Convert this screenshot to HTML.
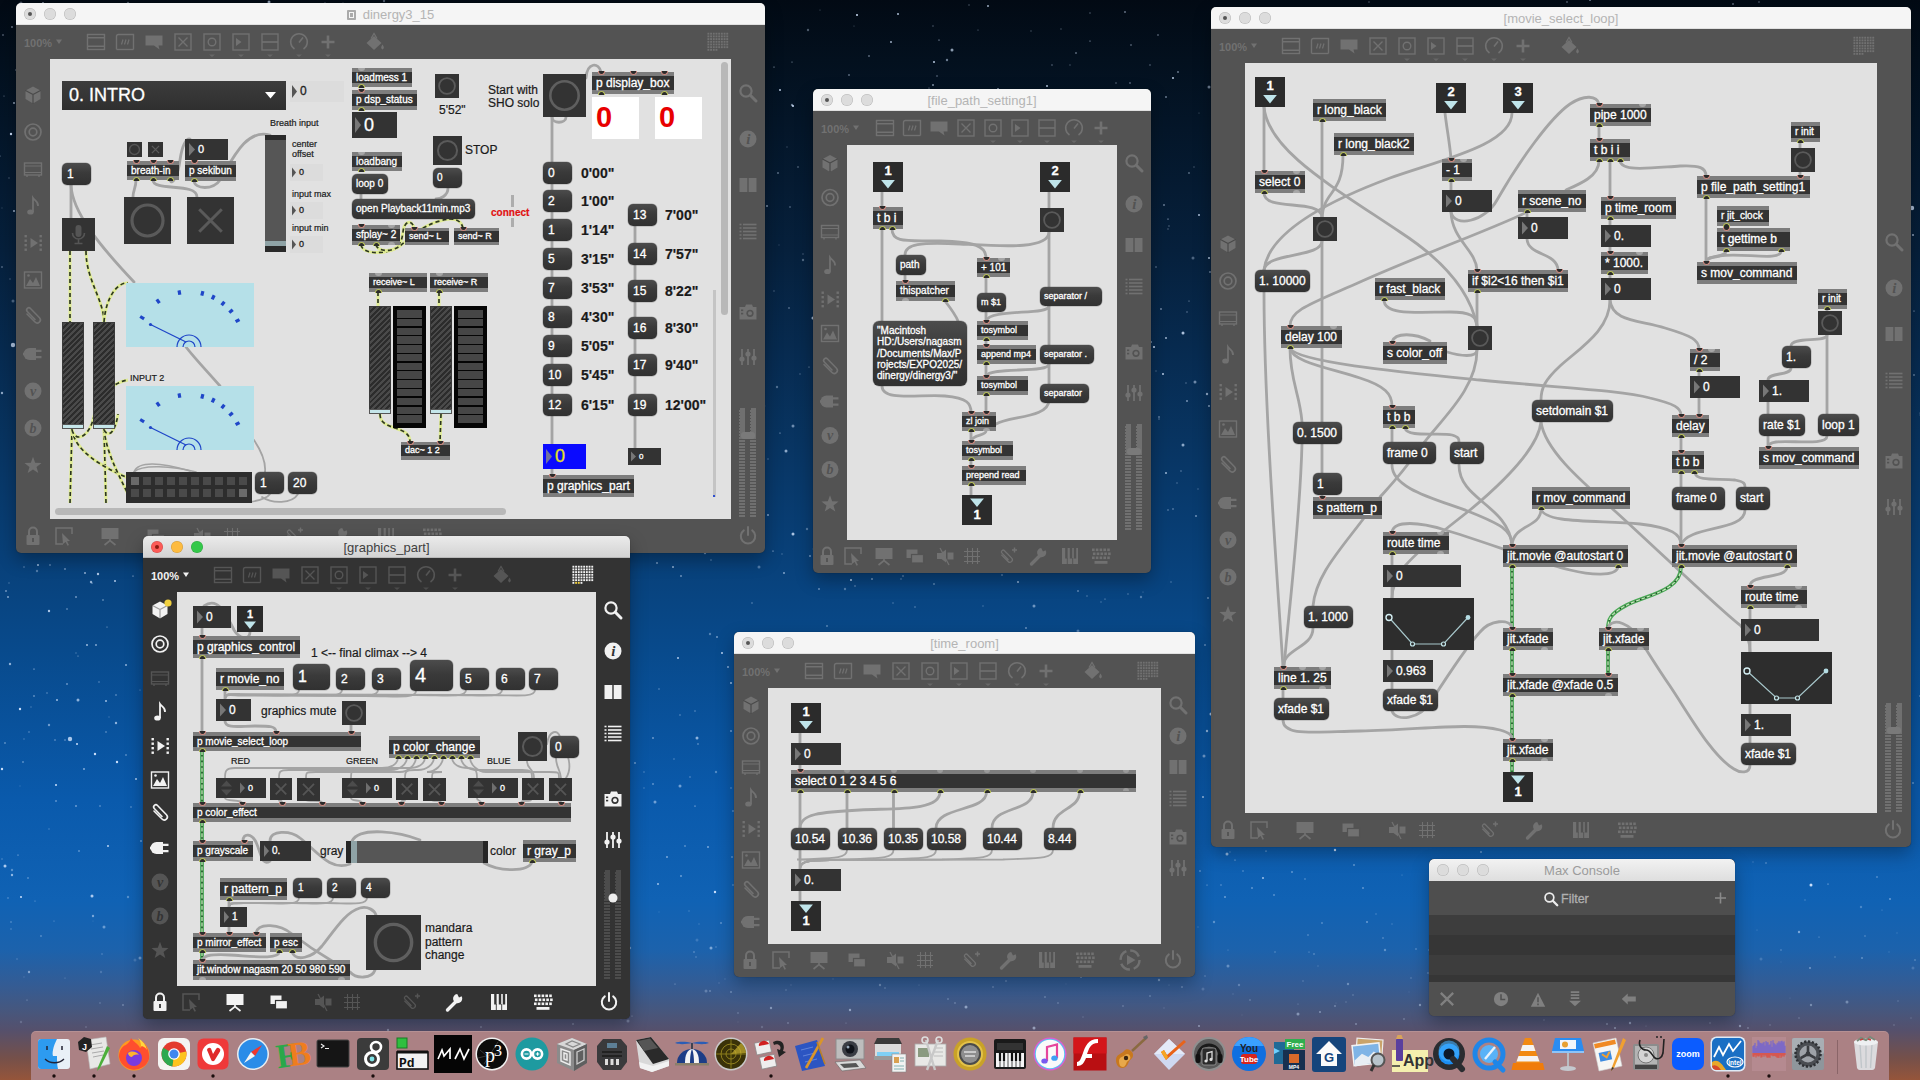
<!DOCTYPE html>
<html><head><meta charset="utf-8"><title>Max</title><style>
*{box-sizing:border-box;margin:0;padding:0}
html,body{width:1920px;height:1080px;overflow:hidden;background:#0a2a55}
body{font-family:"Liberation Sans",sans-serif;position:relative}
#bg{position:absolute;left:0;top:0;width:1920px;height:1080px;
 background:linear-gradient(180deg,#020a14 0px,#03101e 60px,#06203c 250px,#083563 450px,#084a8c 650px,#0a5aac 800px,#1062b4 900px,#1c62ac 950px,#345c94 985px,#46577e 1010px,#55506c 1030px,#75504a 1058px,#96553a 1080px)}
div{position:absolute}
.ov{position:absolute;left:0;top:0;pointer-events:none}
.win{border-radius:5px;box-shadow:0 7px 18px rgba(0,0,0,.3),0 0 1px rgba(0,0,0,.5)}
.tbar{left:0;top:0;width:100%;height:22px;border-radius:5px 5px 0 0;text-align:center;font-size:13px;line-height:23px}
.tl{width:12px;height:12px;border-radius:6px;top:5px}
.ob{background:#333;color:#fff}
.ob .tb{position:absolute;left:0;top:0;width:100%;background:#7d7d7d}
.ob .bb{position:absolute;left:0;bottom:0;width:100%;background:#7d7d7d}
.ob span,.mg span,.nb span{position:absolute;white-space:pre;color:#fff;-webkit-text-stroke-width:.3px}
.in{position:absolute;top:-1px;width:7px;height:4px;border-radius:0 0 4px 4px;background:#2b2b2b;border:1px solid #d08a80;border-top:none}
.out{position:absolute;bottom:-1px;width:7px;height:4px;border-radius:4px 4px 0 0;background:#2b2b2b;border:1px solid #b9c25a;border-bottom:none}
.gi{position:absolute;top:0;width:7px;height:3px;border-radius:0 0 4px 4px;background:#a6a6a6}
.go{position:absolute;bottom:0;width:7px;height:3px;border-radius:4px 4px 0 0;background:#a6a6a6}
.mg{background:linear-gradient(180deg,#4c4c4c 0%,#3a3a3a 45%,#313131 100%);color:#fff;box-shadow:0 0 0 .5px rgba(0,0,0,.25)}
.nb{color:#fff;overflow:hidden}
.cm{position:absolute;-webkit-text-stroke-width:.2px}
</style></head><body>
<div id="bg"></div>
<svg class="ov" width="1920" height="1080"><path d="M1205 976h.01M11 929h.01M102 954h.01M696 957h.01" stroke="#d4e6ff" stroke-opacity="0.19" stroke-width="2.0" stroke-linecap="round" fill="none"/><path d="M1052 65h.01M695 711h.01M680 715h.01M1759 2h.01M1181 471h.01M659 689h.01M736 711h.01" stroke="#d4e6ff" stroke-opacity="0.95" stroke-width="1.0" stroke-linecap="round" fill="none"/><path d="M939 40h.01M695 806h.01M92 583h.01M773 551h.01M1168 219h.01M1266 851h.01M133 576h.01M34 669h.01" stroke="#d4e6ff" stroke-opacity="0.95" stroke-width="1.2" stroke-linecap="round" fill="none"/><path d="M1141 597h.01M37 571h.01M777 387h.01M12 870h.01M716 772h.01M128 897h.01M803 260h.01M128 3h.01M808 30h.01M845 589h.01M384 1h.01M710 634h.01M807 529h.01" stroke="#d4e6ff" stroke-opacity="0.35" stroke-width="2.4" stroke-linecap="round" fill="none"/><path d="M116 723h.01M2 393h.01M1207 731h.01M91 582h.01M10 664h.01M12 875h.01M1207 394h.01" stroke="#d4e6ff" stroke-opacity="0.65" stroke-width="2.4" stroke-linecap="round" fill="none"/><path d="M1376 914h.01M1799 1018h.01M86 1027h.01" stroke="#d4e6ff" stroke-opacity="0.19" stroke-width="1.8" stroke-linecap="round" fill="none"/><path d="M1173 509h.01M3 35h.01M1920 696h.01M65 740h.01M733 811h.01M55 740h.01M1158 35h.01M1131 45h.01M2 267h.01M789 308h.01M1567 2h.01M1172 633h.01M28 878h.01M698 744h.01M116 695h.01" stroke="#d4e6ff" stroke-opacity="0.65" stroke-width="1.4" stroke-linecap="round" fill="none"/><path d="M689 911h.01M1898 1001h.01M788 976h.01M1544 1020h.01" stroke="#d4e6ff" stroke-opacity="0.28" stroke-width="1.4" stroke-linecap="round" fill="none"/><path d="M1026 628h.01M65 569h.01M1890 899h.01M1125 12h.01M67 684h.01M141 841h.01M17 490h.01M1210 272h.01" stroke="#d4e6ff" stroke-opacity="0.5" stroke-width="1.8" stroke-linecap="round" fill="none"/><path d="M104 927h.01M140 958h.01M1298 1014h.01" stroke="#d4e6ff" stroke-opacity="0.44" stroke-width="3.0" stroke-linecap="round" fill="none"/><path d="M764 406h.01M343 4h.01M98 574h.01M49 611h.01" stroke="#d4e6ff" stroke-opacity="0.8" stroke-width="2.4" stroke-linecap="round" fill="none"/><path d="M0 156h.01M929 88h.01M809 367h.01M78 656h.01M1105 599h.01M792 62h.01M1207 885h.01M1189 301h.01M107 627h.01" stroke="#d4e6ff" stroke-opacity="0.65" stroke-width="1.2" stroke-linecap="round" fill="none"/><path d="M1178 72h.01M76 806h.01M12 27h.01M1166 97h.01M6 591h.01M653 738h.01M1161 309h.01M681 576h.01" stroke="#d4e6ff" stroke-opacity="0.95" stroke-width="1.4" stroke-linecap="round" fill="none"/><path d="M722 653h.01M1163 374h.01M108 846h.01M934 62h.01M851 580h.01M1173 78h.01M780 90h.01" stroke="#d4e6ff" stroke-opacity="0.95" stroke-width="1.8" stroke-linecap="round" fill="none"/><path d="M1630 1023h.01M1420 1005h.01M1740 1026h.01M771 1008h.01M1159 980h.01M630 948h.01" stroke="#d4e6ff" stroke-opacity="0.44" stroke-width="2.4" stroke-linecap="round" fill="none"/><path d="M1404 1019h.01M521 1018h.01M481 1027h.01M788 1023h.01M1308 935h.01M948 999h.01" stroke="#d4e6ff" stroke-opacity="0.44" stroke-width="1.6" stroke-linecap="round" fill="none"/><path d="M1198 927h.01M699 924h.01M1083 1017h.01M1318 966h.01M1911 1018h.01" stroke="#d4e6ff" stroke-opacity="0.44" stroke-width="1.0" stroke-linecap="round" fill="none"/><path d="M1235 860h.01M1090 41h.01M774 67h.01M1910 182h.01M18 855h.01M780 433h.01M1828 884h.01M1914 311h.01" stroke="#d4e6ff" stroke-opacity="0.8" stroke-width="1.2" stroke-linecap="round" fill="none"/><path d="M27 1000h.01M675 984h.01M1819 937h.01M35 901h.01M1309 952h.01" stroke="#d4e6ff" stroke-opacity="0.52" stroke-width="1.2" stroke-linecap="round" fill="none"/><path d="M117 762h.01M95 754h.01M715 892h.01M1335 850h.01M20 709h.01M2 769h.01M11 134h.01" stroke="#d4e6ff" stroke-opacity="0.95" stroke-width="2.4" stroke-linecap="round" fill="none"/><path d="M54 921h.01M632 1016h.01" stroke="#d4e6ff" stroke-opacity="0.44" stroke-width="1.2" stroke-linecap="round" fill="none"/><path d="M1164 205h.01M1225 897h.01M681 876h.01M1208 598h.01M635 763h.01M1481 852h.01M819 589h.01" stroke="#d4e6ff" stroke-opacity="0.8" stroke-width="1.6" stroke-linecap="round" fill="none"/><path d="M1781 950h.01M885 988h.01M1320 1012h.01M1123 1006h.01M1865 936h.01M1250 1000h.01M1058 1003h.01" stroke="#d4e6ff" stroke-opacity="0.44" stroke-width="1.4" stroke-linecap="round" fill="none"/><path d="M849 75h.01M1205 645h.01M71 5h.01M1914 375h.01M1159 417h.01M1913 783h.01M1363 888h.01M1078 591h.01M869 56h.01M1292 872h.01M56 801h.01M1252 888h.01M653 784h.01M34 696h.01M1076 53h.01M1354 865h.01M778 173h.01M1733 4h.01" stroke="#d4e6ff" stroke-opacity="0.8" stroke-width="1.4" stroke-linecap="round" fill="none"/><path d="M140 690h.01M978 30h.01M1920 413h.01M4 96h.01" stroke="#d4e6ff" stroke-opacity="0.5" stroke-width="1.2" stroke-linecap="round" fill="none"/><path d="M1356 1024h.01M721 923h.01M1862 958h.01" stroke="#d4e6ff" stroke-opacity="0.36" stroke-width="2.0" stroke-linecap="round" fill="none"/><path d="M1168 229h.01M969 5h.01M768 459h.01M325 3h.01M644 772h.01M893 603h.01M1177 483h.01M2 859h.01M1171 582h.01" stroke="#d4e6ff" stroke-opacity="0.35" stroke-width="1.6" stroke-linecap="round" fill="none"/><path d="M1320 1012h.01M1915 960h.01M1428 973h.01M1429 950h.01M993 987h.01M1150 996h.01M955 1003h.01M11 922h.01" stroke="#d4e6ff" stroke-opacity="0.28" stroke-width="1.8" stroke-linecap="round" fill="none"/><path d="M1847 1002h.01M1228 966h.01" stroke="#d4e6ff" stroke-opacity="0.36" stroke-width="3.0" stroke-linecap="round" fill="none"/><path d="M1209 87h.01M1204 756h.01M793 426h.01M1195 382h.01M655 802h.01M680 786h.01M1034 606h.01" stroke="#d4e6ff" stroke-opacity="0.5" stroke-width="3.0" stroke-linecap="round" fill="none"/><path d="M31 707h.01M1198 489h.01M1194 167h.01M76 653h.01M24 739h.01M49 829h.01M1101 602h.01M782 554h.01M1156 371h.01M1031 31h.01M983 606h.01M774 291h.01M9 583h.01M9 178h.01M644 788h.01M800 374h.01" stroke="#d4e6ff" stroke-opacity="0.35" stroke-width="1.4" stroke-linecap="round" fill="none"/><path d="M135 960h.01M1203 989h.01M1913 968h.01M1761 959h.01M697 940h.01" stroke="#d4e6ff" stroke-opacity="0.19" stroke-width="3.0" stroke-linecap="round" fill="none"/><path d="M1151 342h.01M667 857h.01M708 847h.01M1187 401h.01M767 206h.01M1590 0h.01" stroke="#d4e6ff" stroke-opacity="0.95" stroke-width="1.6" stroke-linecap="round" fill="none"/><path d="M1090 13h.01M933 26h.01M1087 596h.01M1169 226h.01M1186 383h.01M1128 594h.01M674 759h.01M1369 2h.01" stroke="#d4e6ff" stroke-opacity="0.8" stroke-width="1.0" stroke-linecap="round" fill="none"/><path d="M1006 981h.01M1045 997h.01M1416 949h.01M573 1024h.01M1748 1028h.01M694 952h.01M1383 938h.01M1314 954h.01" stroke="#d4e6ff" stroke-opacity="0.52" stroke-width="1.4" stroke-linecap="round" fill="none"/><path d="M23 762h.01M5 743h.01M934 584h.01M1189 173h.01M827 626h.01M79 851h.01M103 600h.01" stroke="#d4e6ff" stroke-opacity="0.65" stroke-width="1.6" stroke-linecap="round" fill="none"/><path d="M99 682h.01M24 567h.01M752 603h.01M1243 871h.01M901 579h.01M915 607h.01M29 732h.01M1116 83h.01M8 898h.01M1221 885h.01M1305 879h.01M1150 65h.01M731 788h.01M1159 419h.01M1187 312h.01M47 693h.01M711 560h.01M690 777h.01" stroke="#d4e6ff" stroke-opacity="0.5" stroke-width="1.4" stroke-linecap="round" fill="none"/><path d="M56 785h.01M77 744h.01M857 15h.01M793 106h.01M21 897h.01M1154 347h.01" stroke="#d4e6ff" stroke-opacity="0.95" stroke-width="2.0" stroke-linecap="round" fill="none"/><path d="M13 301h.01M759 567h.01M1193 258h.01M21 3h.01M1078 631h.01" stroke="#d4e6ff" stroke-opacity="0.35" stroke-width="3.0" stroke-linecap="round" fill="none"/><path d="M685 846h.01M1274 895h.01M126 755h.01M1130 83h.01M732 857h.01M1200 871h.01M50 565h.01M903 576h.01M1002 575h.01M67 609h.01" stroke="#d4e6ff" stroke-opacity="0.35" stroke-width="2.0" stroke-linecap="round" fill="none"/><path d="M716 947h.01M1710 1023h.01M786 990h.01M1353 995h.01M100 1003h.01M1411 978h.01M1835 957h.01" stroke="#d4e6ff" stroke-opacity="0.36" stroke-width="1.4" stroke-linecap="round" fill="none"/><path d="M84 769h.01M1209 406h.01M43 3h.01M728 667h.01M784 573h.01M96 645h.01M768 515h.01M933 85h.01M8 597h.01" stroke="#d4e6ff" stroke-opacity="0.65" stroke-width="1.8" stroke-linecap="round" fill="none"/><path d="M17 959h.01M1770 1025h.01M1894 1025h.01M1303 981h.01" stroke="#d4e6ff" stroke-opacity="0.28" stroke-width="1.6" stroke-linecap="round" fill="none"/><path d="M1166 338h.01M891 42h.01M57 700h.01M87 645h.01M106 701h.01M1203 797h.01M1166 473h.01M658 884h.01M14 211h.01M1263 878h.01M38 565h.01M988 6h.01M731 683h.01" stroke="#d4e6ff" stroke-opacity="0.8" stroke-width="1.8" stroke-linecap="round" fill="none"/><path d="M1882 910h.01M65 978h.01M1228 950h.01M1298 1004h.01M846 1023h.01" stroke="#d4e6ff" stroke-opacity="0.36" stroke-width="1.2" stroke-linecap="round" fill="none"/><path d="M1199 215h.01M1209 258h.01M678 658h.01M115 581h.01M136 779h.01M1047 86h.01M1485 860h.01M898 14h.01" stroke="#d4e6ff" stroke-opacity="0.8" stroke-width="2.0" stroke-linecap="round" fill="none"/><path d="M1811 1005h.01M1348 984h.01M1385 950h.01M388 1030h.01M1214 922h.01M880 985h.01" stroke="#d4e6ff" stroke-opacity="0.36" stroke-width="2.4" stroke-linecap="round" fill="none"/><path d="M1392 924h.01M1346 1002h.01" stroke="#d4e6ff" stroke-opacity="0.52" stroke-width="1.0" stroke-linecap="round" fill="none"/><path d="M725 979h.01M1233 994h.01M1164 1008h.01M1889 952h.01M24 977h.01M1897 933h.01" stroke="#d4e6ff" stroke-opacity="0.19" stroke-width="1.4" stroke-linecap="round" fill="none"/><path d="M1646 1026h.01M1757 930h.01M919 985h.01M1169 985h.01" stroke="#d4e6ff" stroke-opacity="0.28" stroke-width="1.2" stroke-linecap="round" fill="none"/><path d="M1322 923h.01M1182 987h.01M123 1005h.01M41 936h.01M710 991h.01" stroke="#d4e6ff" stroke-opacity="0.52" stroke-width="1.6" stroke-linecap="round" fill="none"/><path d="M1183 445h.01M1227 854h.01M269 2h.01M78 700h.01M952 50h.01M697 738h.01M786 451h.01" stroke="#d4e6ff" stroke-opacity="0.65" stroke-width="3.0" stroke-linecap="round" fill="none"/><path d="M779 245h.01M2 208h.01M1910 307h.01M813 549h.01M20 786h.01" stroke="#d4e6ff" stroke-opacity="0.35" stroke-width="1.0" stroke-linecap="round" fill="none"/><path d="M793 534h.01M1211 714h.01M5 866h.01M1183 333h.01M92 896h.01M813 318h.01" stroke="#d4e6ff" stroke-opacity="0.8" stroke-width="3.0" stroke-linecap="round" fill="none"/><path d="M93 916h.01M621 1018h.01M29 972h.01M1799 932h.01M850 1010h.01" stroke="#d4e6ff" stroke-opacity="0.52" stroke-width="2.4" stroke-linecap="round" fill="none"/><path d="M738 1013h.01M1275 952h.01" stroke="#d4e6ff" stroke-opacity="0.36" stroke-width="1.6" stroke-linecap="round" fill="none"/><path d="M947 60h.01M792 105h.01M49 725h.01M705 553h.01" stroke="#d4e6ff" stroke-opacity="0.5" stroke-width="2.4" stroke-linecap="round" fill="none"/><path d="M820 10h.01M1143 592h.01M1199 113h.01M1402 875h.01M854 26h.01" stroke="#d4e6ff" stroke-opacity="0.35" stroke-width="1.2" stroke-linecap="round" fill="none"/><path d="M1061 29h.01M803 254h.01M10 279h.01M1805 900h.01M1230 852h.01M1070 65h.01" stroke="#d4e6ff" stroke-opacity="0.65" stroke-width="1.0" stroke-linecap="round" fill="none"/><path d="M1242 1015h.01M1066 984h.01M1409 992h.01M1781 962h.01M738 1022h.01" stroke="#d4e6ff" stroke-opacity="0.19" stroke-width="1.0" stroke-linecap="round" fill="none"/><path d="M798 167h.01M1168 510h.01M790 207h.01M1766 863h.01M937 76h.01M855 586h.01M131 807h.01M733 885h.01M1156 267h.01" stroke="#d4e6ff" stroke-opacity="0.5" stroke-width="1.6" stroke-linecap="round" fill="none"/><path d="M1790 998h.01M1336 1003h.01M93 921h.01" stroke="#d4e6ff" stroke-opacity="0.19" stroke-width="1.2" stroke-linecap="round" fill="none"/><path d="M762 1027h.01M21 1022h.01M101 972h.01" stroke="#d4e6ff" stroke-opacity="0.19" stroke-width="2.4" stroke-linecap="round" fill="none"/><path d="M833 979h.01M547 1017h.01M719 983h.01M791 985h.01" stroke="#d4e6ff" stroke-opacity="0.19" stroke-width="1.6" stroke-linecap="round" fill="none"/><path d="M1034 1028h.01M966 1007h.01M711 948h.01" stroke="#d4e6ff" stroke-opacity="0.52" stroke-width="3.0" stroke-linecap="round" fill="none"/><path d="M1199 1026h.01" stroke="#d4e6ff" stroke-opacity="0.52" stroke-width="1.8" stroke-linecap="round" fill="none"/><path d="M1239 985h.01M1861 907h.01" stroke="#d4e6ff" stroke-opacity="0.28" stroke-width="2.4" stroke-linecap="round" fill="none"/><path d="M706 991h.01M628 1021h.01" stroke="#d4e6ff" stroke-opacity="0.28" stroke-width="3.0" stroke-linecap="round" fill="none"/><path d="M1920 415h.01M787 147h.01M763 139h.01M109 717h.01M1753 862h.01" stroke="#d4e6ff" stroke-opacity="0.5" stroke-width="1.0" stroke-linecap="round" fill="none"/><path d="M106 732h.01M100 806h.01M1877 877h.01M16 70h.01" stroke="#d4e6ff" stroke-opacity="0.35" stroke-width="1.8" stroke-linecap="round" fill="none"/><path d="M659 912h.01" stroke="#d4e6ff" stroke-opacity="0.28" stroke-width="1.0" stroke-linecap="round" fill="none"/><path d="M1112 572h.01M1018 582h.01M673 567h.01M126 665h.01M998 89h.01M85 573h.01M14 103h.01M1913 235h.01" stroke="#d4e6ff" stroke-opacity="0.65" stroke-width="2.0" stroke-linecap="round" fill="none"/><path d="M717 637h.01M810 556h.01M657 563h.01M76 597h.01M1196 516h.01M872 579h.01M731 731h.01" stroke="#d4e6ff" stroke-opacity="0.5" stroke-width="2.0" stroke-linecap="round" fill="none"/><path d="M1615 1028h.01M1810 968h.01M1367 922h.01" stroke="#d4e6ff" stroke-opacity="0.44" stroke-width="2.0" stroke-linecap="round" fill="none"/><path d="M731 992h.01M1607 1024h.01M1335 1006h.01" stroke="#d4e6ff" stroke-opacity="0.36" stroke-width="1.8" stroke-linecap="round" fill="none"/><path d="M1811 885h.01" stroke="#d4e6ff" stroke-opacity="0.95" stroke-width="3.0" stroke-linecap="round" fill="none"/><path d="M1081 977h.01" stroke="#d4e6ff" stroke-opacity="0.44" stroke-width="1.8" stroke-linecap="round" fill="none"/><circle cx="70" cy="739" r="2.2" fill="#d4e6ff" opacity=".8"/><circle cx="133" cy="98" r="2.2" fill="#d4e6ff" opacity=".8"/><circle cx="203" cy="325" r="2.2" fill="#d4e6ff" opacity=".8"/><circle cx="106" cy="440" r="2.2" fill="#d4e6ff" opacity=".8"/><circle cx="1352" cy="225" r="2.2" fill="#d4e6ff" opacity=".8"/><circle cx="1570" cy="70" r="2.2" fill="#d4e6ff" opacity=".8"/><circle cx="1912" cy="208" r="2.2" fill="#d4e6ff" opacity=".8"/><circle cx="13" cy="345" r="2.2" fill="#d4e6ff" opacity=".8"/><circle cx="1405" cy="650" r="2.2" fill="#d4e6ff" opacity=".8"/><circle cx="1520" cy="422" r="2.2" fill="#d4e6ff" opacity=".8"/></svg>
<!-- w5 -->
<div class="win" style="left:1211px;top:7px;width:700px;height:840px;background:#535353">
<div class="tbar" style="background:#f5f5f5;color:#b4b4b4;border-bottom:1px solid #e0e0e0">[movie_select_loop]</div>
<div class="tl" style="left:8px;background:#dcdcdc;box-shadow:inset 0 0 0 .5px rgba(0,0,0,.18);"><div style="left:4px;top:4px;width:4px;height:4px;border-radius:2px;background:#555"></div></div>
<div class="tl" style="left:28px;background:#dcdcdc;box-shadow:inset 0 0 0 .5px rgba(0,0,0,.18);"></div>
<div class="tl" style="left:48px;background:#dcdcdc;box-shadow:inset 0 0 0 .5px rgba(0,0,0,.18);"></div>
<div style="left:34px;top:56px;width:632px;height:750px;background:#e1e1e1"></div>
<svg class="ov" width="700" height="840"><text x="8" y="43.5" font-size="11" font-weight="bold" fill="#717171" font-family="Liberation Sans">100%</text><path d="M40 36.5h6l-3 4.5z" fill="#717171"/><g transform="translate(80 39) scale(1.0)"><rect x="-8.5" y="-7.5" width="17" height="15" fill="none" stroke="#717171" stroke-width="1.4"/><path d="M-8.5 -4.3H8.5M-8.5 4.3H8.5" stroke="#717171" stroke-width="1.4"/></g><g transform="translate(109 39) scale(1.0)"><path d="M-8.5 7.5V-5.5a2 2 0 0 1 2-2H8.5V7.5" fill="none" stroke="#717171" stroke-width="1.4"/><path d="M-8.5 7.5H8.5" stroke="#717171" stroke-width="1.4"/><path d="M-3.5 2.5L-2 -2.5M-0.5 2.5L1 -2.5M2.5 2.5L4 -2.5" stroke="#717171" stroke-width="1.2"/></g><g transform="translate(138 39) scale(1.0)"><path d="M-8.5 -6.5H8.5V3.5H4.5L5.5 7.5L0 3.5H-8.5Z" fill="#717171"/></g><g transform="translate(167 39) scale(1.0)"><rect x="-8" y="-8" width="16" height="16" fill="none" stroke="#717171" stroke-width="1.4"/><path d="M-4.5 -4.5L4.5 4.5M4.5 -4.5L-4.5 4.5" stroke="#717171" stroke-width="1.4"/></g><g transform="translate(196 39) scale(1.0)"><rect x="-8" y="-8" width="16" height="16" fill="none" stroke="#717171" stroke-width="1.4"/><circle r="3.8" fill="none" stroke="#717171" stroke-width="1.4"/><path d="M-3 12.5H3L0 15Z" fill="#717171" opacity=".7"/></g><g transform="translate(225 39) scale(1.0)"><rect x="-8" y="-8" width="16" height="16" fill="none" stroke="#717171" stroke-width="1.4"/><path d="M-5 -4L0.5 0L-5 4Z" fill="#717171"/><path d="M-3 12.5H3L0 15Z" fill="#717171" opacity=".7"/></g><g transform="translate(254 39) scale(1.0)"><rect x="-8" y="-8" width="16" height="16" fill="none" stroke="#717171" stroke-width="1.4"/><path d="M-8 0H8" stroke="#717171" stroke-width="1.6"/><path d="M-3 12.5H3L0 15Z" fill="#717171" opacity=".7"/></g><g transform="translate(283 39) scale(1.0)"><path d="M-4.5 7A8.3 8.3 0 1 1 4.5 7" fill="none" stroke="#717171" stroke-width="1.6"/><path d="M0 0.5L4 -4.5" stroke="#717171" stroke-width="1.6"/><path d="M-3 12.5H3L0 15Z" fill="#717171" opacity=".7"/></g><g transform="translate(312 39) scale(1.0)"><path d="M-6.5 0H6.5M0 -6.5V6.5" stroke="#717171" stroke-width="2.6"/><path d="M-3 12.5H3L0 15Z" fill="#717171" opacity=".7"/></g><g transform="translate(358 39) scale(1.0)"><path d="M-7.5 1L0 -6L7.5 1L0 8Z" fill="#717171"/><path d="M-3 -3.5L0 -8.5L3 -3.5" fill="none" stroke="#717171" stroke-width="1.3"/><path d="M8.5 2.5c1.5 2.5 2 3.5 0 5c-2-1.5-1.5-2.5 0-5Z" fill="#717171"/></g><g transform="translate(653 39) scale(1.1)"><rect x="-9.60" y="-8.40" width="1.7" height="1.7" fill="#717171"/><rect x="-7.15" y="-8.40" width="1.7" height="1.7" fill="#717171"/><rect x="-4.70" y="-8.40" width="1.7" height="1.7" fill="#717171"/><rect x="-2.25" y="-8.40" width="1.7" height="1.7" fill="#717171"/><rect x="0.20" y="-8.40" width="1.7" height="1.7" fill="#717171"/><rect x="2.65" y="-8.40" width="1.7" height="1.7" fill="#717171"/><rect x="5.10" y="-8.40" width="1.7" height="1.7" fill="#717171"/><rect x="7.55" y="-8.40" width="1.7" height="1.7" fill="#717171"/><rect x="-9.60" y="-5.95" width="1.7" height="1.7" fill="#717171"/><rect x="-7.15" y="-5.95" width="1.7" height="1.7" fill="#717171"/><rect x="-4.70" y="-5.95" width="1.7" height="1.7" fill="#717171"/><rect x="-2.25" y="-5.95" width="1.7" height="1.7" fill="#717171"/><rect x="0.20" y="-5.95" width="1.7" height="1.7" fill="#717171"/><rect x="2.65" y="-5.95" width="1.7" height="1.7" fill="#717171"/><rect x="5.10" y="-5.95" width="1.7" height="1.7" fill="#717171"/><rect x="7.55" y="-5.95" width="1.7" height="1.7" fill="#717171"/><rect x="-9.60" y="-3.50" width="1.7" height="1.7" fill="#717171"/><rect x="-7.15" y="-3.50" width="1.7" height="1.7" fill="#717171"/><rect x="-4.70" y="-3.50" width="1.7" height="1.7" fill="#717171"/><rect x="-2.25" y="-3.50" width="1.7" height="1.7" fill="#717171"/><rect x="0.20" y="-3.50" width="1.7" height="1.7" fill="#717171"/><rect x="2.65" y="-3.50" width="1.7" height="1.7" fill="#717171"/><rect x="5.10" y="-3.50" width="1.7" height="1.7" fill="#717171"/><rect x="7.55" y="-3.50" width="1.7" height="1.7" fill="#717171"/><rect x="-9.60" y="-1.05" width="1.7" height="1.7" fill="#717171"/><rect x="-7.15" y="-1.05" width="1.7" height="1.7" fill="#717171"/><rect x="-4.70" y="-1.05" width="1.7" height="1.7" fill="#717171"/><rect x="-2.25" y="-1.05" width="1.7" height="1.7" fill="#717171"/><rect x="0.20" y="-1.05" width="1.7" height="1.7" fill="#717171"/><rect x="2.65" y="-1.05" width="1.7" height="1.7" fill="#717171"/><rect x="5.10" y="-1.05" width="1.7" height="1.7" fill="#717171"/><rect x="7.55" y="-1.05" width="1.7" height="1.7" fill="#717171"/><rect x="-9.60" y="1.40" width="1.7" height="1.7" fill="#717171"/><rect x="-7.15" y="1.40" width="1.7" height="1.7" fill="#717171"/><rect x="-4.70" y="1.40" width="1.7" height="1.7" fill="#717171"/><rect x="-2.25" y="1.40" width="1.7" height="1.7" fill="#717171"/><rect x="0.20" y="1.40" width="1.7" height="1.7" fill="#717171"/><rect x="2.65" y="1.40" width="1.7" height="1.7" fill="#717171"/><rect x="5.10" y="1.40" width="1.7" height="1.7" fill="#717171"/><rect x="7.55" y="1.40" width="1.7" height="1.7" fill="#717171"/><rect x="-9.60" y="3.85" width="1.7" height="1.7" fill="#717171"/><rect x="-7.15" y="3.85" width="1.7" height="1.7" fill="#717171"/><rect x="-4.70" y="3.85" width="1.7" height="1.7" fill="#717171"/><rect x="-2.25" y="3.85" width="1.7" height="1.7" fill="#717171"/><rect x="0.20" y="3.85" width="1.7" height="1.7" fill="#717171"/><rect x="2.65" y="3.85" width="1.7" height="1.7" fill="#717171"/><rect x="5.10" y="3.85" width="1.7" height="1.7" fill="#717171"/><rect x="7.55" y="3.85" width="1.7" height="1.7" fill="#717171"/><rect x="-9.60" y="6.30" width="1.7" height="1.7" fill="#717171"/><rect x="-7.15" y="6.30" width="1.7" height="1.7" fill="#717171"/><rect x="-4.70" y="6.30" width="1.7" height="1.7" fill="#717171"/><rect x="-2.25" y="6.30" width="1.7" height="1.7" fill="#717171"/></g><g transform="translate(17 237.0) scale(1.0)"><path d="M0 -8.5L7.5 -4.5V4L0 8.5L-7.5 4V-4.5Z" fill="#717171"/><path d="M0 -0.5L7.5 -4.5M0 -0.5L-7.5 -4.5M0 -0.5V8.5" stroke="#000" stroke-opacity=".35" stroke-width="1.2" fill="none"/></g><g transform="translate(17 274.0) scale(1.0)"><circle r="8" fill="none" stroke="#717171" stroke-width="1.7"/><circle r="3.8" fill="none" stroke="#717171" stroke-width="1.7"/></g><g transform="translate(17 311.0) scale(1.0)"><rect x="-8.5" y="-6" width="17" height="12" fill="none" stroke="#717171" stroke-width="1.4"/><path d="M-8.5 -3H8.5M-8.5 3.5H8.5" stroke="#717171" stroke-width="1.2"/><path d="M-6 6V8M6 6V8" stroke="#717171" stroke-width="1.4"/></g><g transform="translate(17 348.0) scale(1.0)"><ellipse cx="-2.5" cy="6" rx="3.3" ry="2.6" fill="#717171"/><path d="M0 6V-8C2 -5 5.5 -4.5 5 0" fill="none" stroke="#717171" stroke-width="1.8"/></g><g transform="translate(17 385.0) scale(1.0)"><path d="M-2.5 -5L5 0L-2.5 5Z" fill="#717171"/><rect x="-8.5" y="-8" width="2.4" height="2.4" fill="#717171"/><rect x="6.5" y="-8" width="2.4" height="2.4" fill="#717171"/><rect x="-8.5" y="-3.5" width="2.4" height="2.4" fill="#717171"/><rect x="6.5" y="-3.5" width="2.4" height="2.4" fill="#717171"/><rect x="-8.5" y="1" width="2.4" height="2.4" fill="#717171"/><rect x="6.5" y="1" width="2.4" height="2.4" fill="#717171"/><rect x="-8.5" y="5.5" width="2.4" height="2.4" fill="#717171"/><rect x="6.5" y="5.5" width="2.4" height="2.4" fill="#717171"/></g><g transform="translate(17 422.0) scale(1.0)"><rect x="-8.5" y="-8" width="17" height="16" fill="none" stroke="#717171" stroke-width="1.4"/><path d="M-7 6L-3 -1L0 3L3 -3L7 6Z" fill="#717171"/><circle cx="-4.5" cy="-4.5" r="1.3" fill="#717171"/></g><g transform="translate(17 459.0) scale(1.0)"><path d="M-6 -3L2 5a3 3 0 0 0 4.5 -4.2L-2.5 -8.5a2.1 2.1 0 0 0 -3.2 3L2 2.5" fill="none" stroke="#717171" stroke-width="1.6" stroke-linecap="round"/></g><g transform="translate(17 496.0) scale(1.0)"><path d="M-3.5 -6H3V6H-3.5A6 6 0 0 1 -3.5 -6Z" fill="#717171"/><path d="M3 -3.2H8.5M3 3.2H8.5" stroke="#717171" stroke-width="2.2"/><path d="M-10 0H-7" stroke="#717171" stroke-width="2.6"/></g><g transform="translate(17 533.0) scale(1.0)"><circle r="8.5" fill="#717171"/><text x="0" y="4.5" text-anchor="middle" font-family="Liberation Serif" font-style="italic" font-weight="bold" font-size="14" fill="#535353">v</text></g><g transform="translate(17 570.0) scale(1.0)"><circle r="8.5" fill="#717171"/><text x="0" y="4.8" text-anchor="middle" font-family="Liberation Serif" font-style="italic" font-weight="bold" font-size="14" fill="#535353">b</text></g><g transform="translate(17 607.0) scale(1.0)"><polygon points="0.00,-8.20 2.17,-2.19 8.56,-1.98 3.52,1.94 5.29,8.08 0.00,4.50 -5.29,8.08 -3.52,1.94 -8.56,-1.98 -2.17,-2.19" fill="#717171"/></g><g transform="translate(683 235) scale(1.0)"><circle cx="-2" cy="-2" r="5.6" fill="none" stroke="#717171" stroke-width="2.2"/><path d="M2.3 2.3L8 8" stroke="#717171" stroke-width="3" stroke-linecap="round"/></g><g transform="translate(683 281) scale(1.0)"><circle r="8.5" fill="#717171"/><text x="0.3" y="5.2" text-anchor="middle" font-family="Liberation Serif" font-style="italic" font-weight="bold" font-size="15" fill="#535353">i</text></g><g transform="translate(683 327) scale(1.0)"><rect x="-8.5" y="-7" width="7.8" height="14" fill="#717171"/><rect x="0.7" y="-7" width="7.8" height="14" fill="#717171"/></g><g transform="translate(683 373) scale(1.0)"><rect x="-8.5" y="-7.3" width="2" height="1.6" fill="#717171"/><rect x="-5" y="-7.3" width="13.5" height="1.6" fill="#717171"/><rect x="-8.5" y="-3.8" width="2" height="1.6" fill="#717171"/><rect x="-5" y="-3.8" width="13.5" height="1.6" fill="#717171"/><rect x="-8.5" y="-0.30000000000000004" width="2" height="1.6" fill="#717171"/><rect x="-5" y="-0.30000000000000004" width="13.5" height="1.6" fill="#717171"/><rect x="-8.5" y="3.2" width="2" height="1.6" fill="#717171"/><rect x="-5" y="3.2" width="13.5" height="1.6" fill="#717171"/><rect x="-8.5" y="6.7" width="2" height="1.6" fill="#717171"/><rect x="-5" y="6.7" width="13.5" height="1.6" fill="#717171"/></g><g transform="translate(683 454) scale(1.0)"><path d="M-8.5 -5H-3L-2 -7.5H4L5 -5H8.5V7.5H-8.5Z" fill="#717171"/><circle cx="2" cy="1.3" r="3.6" fill="#535353"/><circle cx="2" cy="1.3" r="2" fill="#717171"/><rect x="-7" y="-2.5" width="2.2" height="1.6" fill="#535353"/><rect x="-7" y="0.8" width="2.2" height="1.6" fill="#535353"/></g><g transform="translate(683 500) scale(1.0)"><path d="M-6 -8V8" stroke="#717171" stroke-width="1.8"/><circle cx="-6" cy="2" r="2.6" fill="#717171"/><path d="M0 -8V8" stroke="#717171" stroke-width="1.8"/><circle cx="0" cy="-3" r="2.6" fill="#717171"/><path d="M6 -8V8" stroke="#717171" stroke-width="1.8"/><circle cx="6" cy="1" r="2.6" fill="#717171"/></g><rect x="674" y="698" width="6" height="2" fill="#707070"/><rect x="674" y="701" width="6" height="2" fill="#707070"/><rect x="674" y="704" width="6" height="2" fill="#707070"/><rect x="674" y="707" width="6" height="2" fill="#707070"/><rect x="674" y="710" width="6" height="2" fill="#707070"/><rect x="674" y="713" width="6" height="2" fill="#707070"/><rect x="674" y="716" width="6" height="2" fill="#707070"/><rect x="674" y="719" width="6" height="2" fill="#707070"/><rect x="674" y="722" width="6" height="2" fill="#707070"/><rect x="674" y="725" width="6" height="2" fill="#707070"/><rect x="674" y="728" width="6" height="2" fill="#707070"/><rect x="674" y="731" width="6" height="2" fill="#707070"/><rect x="674" y="734" width="6" height="2" fill="#707070"/><rect x="674" y="737" width="6" height="2" fill="#707070"/><rect x="674" y="740" width="6" height="2" fill="#707070"/><rect x="674" y="743" width="6" height="2" fill="#707070"/><rect x="674" y="746" width="6" height="2" fill="#707070"/><rect x="674" y="749" width="6" height="2" fill="#707070"/><rect x="674" y="752" width="6" height="2" fill="#707070"/><rect x="674" y="755" width="6" height="2" fill="#707070"/><rect x="674" y="758" width="6" height="2" fill="#707070"/><rect x="674" y="761" width="6" height="2" fill="#707070"/><rect x="674" y="764" width="6" height="2" fill="#707070"/><rect x="674" y="767" width="6" height="2" fill="#707070"/><rect x="674" y="770" width="6" height="2" fill="#707070"/><rect x="674" y="773" width="6" height="2" fill="#707070"/><rect x="674" y="776" width="6" height="2" fill="#707070"/><rect x="674" y="779" width="6" height="2" fill="#707070"/><rect x="674" y="782" width="6" height="2" fill="#707070"/><rect x="674" y="785" width="6" height="2" fill="#707070"/><rect x="674" y="788" width="6" height="2" fill="#707070"/><rect x="674" y="791" width="6" height="2" fill="#707070"/><rect x="674" y="794" width="6" height="2" fill="#707070"/><rect x="674" y="797" width="6" height="2" fill="#707070"/><rect x="674" y="800" width="6" height="2" fill="#707070"/><rect x="674" y="803" width="6" height="2" fill="#707070"/><rect x="685" y="698" width="6" height="2" fill="#707070"/><rect x="685" y="701" width="6" height="2" fill="#707070"/><rect x="685" y="704" width="6" height="2" fill="#707070"/><rect x="685" y="707" width="6" height="2" fill="#707070"/><rect x="685" y="710" width="6" height="2" fill="#707070"/><rect x="685" y="713" width="6" height="2" fill="#707070"/><rect x="685" y="716" width="6" height="2" fill="#707070"/><rect x="685" y="719" width="6" height="2" fill="#707070"/><rect x="685" y="722" width="6" height="2" fill="#707070"/><rect x="685" y="725" width="6" height="2" fill="#707070"/><rect x="685" y="728" width="6" height="2" fill="#707070"/><rect x="685" y="731" width="6" height="2" fill="#707070"/><rect x="685" y="734" width="6" height="2" fill="#707070"/><rect x="685" y="737" width="6" height="2" fill="#707070"/><rect x="685" y="740" width="6" height="2" fill="#707070"/><rect x="685" y="743" width="6" height="2" fill="#707070"/><rect x="685" y="746" width="6" height="2" fill="#707070"/><rect x="685" y="749" width="6" height="2" fill="#707070"/><rect x="685" y="752" width="6" height="2" fill="#707070"/><rect x="685" y="755" width="6" height="2" fill="#707070"/><rect x="685" y="758" width="6" height="2" fill="#707070"/><rect x="685" y="761" width="6" height="2" fill="#707070"/><rect x="685" y="764" width="6" height="2" fill="#707070"/><rect x="685" y="767" width="6" height="2" fill="#707070"/><rect x="685" y="770" width="6" height="2" fill="#707070"/><rect x="685" y="773" width="6" height="2" fill="#707070"/><rect x="685" y="776" width="6" height="2" fill="#707070"/><rect x="685" y="779" width="6" height="2" fill="#707070"/><rect x="685" y="782" width="6" height="2" fill="#707070"/><rect x="685" y="785" width="6" height="2" fill="#707070"/><rect x="685" y="788" width="6" height="2" fill="#707070"/><rect x="685" y="791" width="6" height="2" fill="#707070"/><rect x="685" y="794" width="6" height="2" fill="#707070"/><rect x="685" y="797" width="6" height="2" fill="#707070"/><rect x="685" y="800" width="6" height="2" fill="#707070"/><rect x="685" y="803" width="6" height="2" fill="#707070"/><rect x="675" y="696" width="5" height="30" fill="#707070"/><rect x="686" y="696" width="5" height="30" fill="#707070"/><rect x="676" y="720" width="14" height="7" rx="3" fill="#7a7a7a"/><g transform="translate(17 823) scale(1.0)"><rect x="-6.5" y="-1" width="13" height="10" rx="1" fill="#717171"/><path d="M-4 -1V-4.5a4 4 0 0 1 8 0V-1" fill="none" stroke="#717171" stroke-width="2"/><rect x="-0.9" y="2" width="1.8" height="4" fill="#535353"/></g><g transform="translate(48 823) scale(1.0)"><path d="M8 -2V-8H-8V8H-1" fill="none" stroke="#717171" stroke-width="1.5"/><path d="M-2 -3L6 5L3 5.3L5 9L3.5 9.7L1.6 6L-1 8Z" fill="#717171"/></g><g transform="translate(94 823) scale(1.0)"><rect x="-8.5" y="-8" width="17" height="11" fill="#717171"/><path d="M0 3V5M-5.5 9L0 4.5L5.5 9" fill="none" stroke="#717171" stroke-width="1.7"/></g><g transform="translate(140 823) scale(1.0)"><rect x="-8.5" y="-6.5" width="11" height="8.5" fill="#717171"/><rect x="-3.5" y="-1.5" width="12" height="8.5" fill="#717171" stroke="#535353" stroke-width="1.2"/></g><g transform="translate(186 823) scale(1.0)"><path d="M-8 -3H-3.5L1 -6.5V6.5L-3.5 3H-8Z" fill="#717171"/><path d="M2.5 -3.5H8.5V3.5H2.5Z" fill="#717171"/><path d="M-5 -8L4 9" stroke="#717171" stroke-width="1.3"/></g><g transform="translate(216 823) scale(1.0)"><path d="M-8 -4.5H8M-8 0.5H8M-8 5.5H8M-4.5 -8V8M0.5 -8V8M5.5 -8V8" stroke="#717171" stroke-width="1.1" fill="none"/></g><g transform="translate(278 823) scale(1.0)"><g transform="translate(-1.5 1.5) scale(.8)"><path d="M-6 -3L2 5a3 3 0 0 0 4.5 -4.2L-2.5 -8.5a2.1 2.1 0 0 0 -3.2 3L2 2.5" fill="none" stroke="#717171" stroke-width="1.6" stroke-linecap="round"/></g><path d="M4 -6H9M6.5 -8.5V-3.5" stroke="#717171" stroke-width="1.5"/></g><g transform="translate(324 823) scale(1.0)"><path d="M-7.5 8L1 -0.5" stroke="#717171" stroke-width="3.4" stroke-linecap="round"/><path d="M6.6 -5.8A4.6 4.6 0 1 1 2.2 -8L4 -4.5Z" fill="#717171"/></g><g transform="translate(370 823) scale(1.0)"><rect x="-8" y="-8" width="16" height="16" fill="#717171"/><path d="M-3.6 -8V2.5M1 -8V2.5M5 -8V2.5" stroke="#535353" stroke-width="2.4"/><path d="M-2.7 2V8M2.7 2V8" stroke="#535353" stroke-width="0.9"/></g><g transform="translate(416 823) scale(1.0)"><rect x="-9.0" y="-7.5" width="2.6" height="2.6" fill="#717171"/><rect x="-5.2" y="-7.5" width="2.6" height="2.6" fill="#717171"/><rect x="-1.4" y="-7.5" width="2.6" height="2.6" fill="#717171"/><rect x="2.4" y="-7.5" width="2.6" height="2.6" fill="#717171"/><rect x="6.2" y="-7.5" width="2.6" height="2.6" fill="#717171"/><rect x="-8.1" y="-3.5" width="2.6" height="2.6" fill="#717171"/><rect x="-4.3" y="-3.5" width="2.6" height="2.6" fill="#717171"/><rect x="-0.5" y="-3.5" width="2.6" height="2.6" fill="#717171"/><rect x="3.3" y="-3.5" width="2.6" height="2.6" fill="#717171"/><rect x="7.1" y="-3.5" width="2.6" height="2.6" fill="#717171"/><rect x="-9.0" y="0.5" width="2.6" height="2.6" fill="#717171"/><rect x="-5.2" y="0.5" width="2.6" height="2.6" fill="#717171"/><rect x="-1.4" y="0.5" width="2.6" height="2.6" fill="#717171"/><rect x="2.4" y="0.5" width="2.6" height="2.6" fill="#717171"/><rect x="6.2" y="0.5" width="2.6" height="2.6" fill="#717171"/><rect x="-6.5" y="5" width="13" height="2.8" fill="#717171"/></g><g transform="translate(682 823) scale(1.0)"><path d="M-4.2 -5.6A7.2 7.2 0 1 0 4.2 -5.6" fill="none" stroke="#717171" stroke-width="2" stroke-linecap="round"/><path d="M0 -9V-1" stroke="#717171" stroke-width="2" stroke-linecap="round"/></g></svg>
</div>
<svg class="ov" width="1920" height="1080"><path d="M1264 107 L1264 171" fill="none" stroke="#a4a4a4" stroke-width="2.8" stroke-linecap="round"/><path d="M1264 107 C1268 150 1330 185 1400 232 C 1440 258 1470 290 1477 326" fill="none" stroke="#a4a4a4" stroke-width="2.8" stroke-linecap="round"/><path d="M1322 121 L1322 473" fill="none" stroke="#a4a4a4" stroke-width="2.8" stroke-linecap="round"/><path d="M1343 155 C1343 195 1324 190 1322 217" fill="none" stroke="#a4a4a4" stroke-width="2.8" stroke-linecap="round"/><path d="M1264 193 C1264 212 1320 198 1322 217" fill="none" stroke="#a4a4a4" stroke-width="2.8" stroke-linecap="round"/><path d="M1445 113 C1447 130 1450 145 1451 159" fill="none" stroke="#a4a4a4" stroke-width="2.8" stroke-linecap="round"/><path d="M1512 113 C1512 145 1440 160 1390 178 C 1320 204 1268 235 1264 270" fill="none" stroke="#a4a4a4" stroke-width="2.8" stroke-linecap="round"/><path d="M1451 181 L1451 190" fill="none" stroke="#a4a4a4" stroke-width="2.8" stroke-linecap="round"/><path d="M1451 212 C1454 228 1485 222 1497 200 C 1520 160 1550 118 1570 104 C 1585 94 1597 96 1599 104" fill="none" stroke="#a4a4a4" stroke-width="2.8" stroke-linecap="round"/><path d="M1451 212 C1452 240 1476 250 1477 270" fill="none" stroke="#a4a4a4" stroke-width="2.8" stroke-linecap="round"/><path d="M1322 241 C1322 258 1266 252 1264 270" fill="none" stroke="#a4a4a4" stroke-width="2.8" stroke-linecap="round"/><path d="M1527 212 L1527 217" fill="none" stroke="#a4a4a4" stroke-width="2.8" stroke-linecap="round"/><path d="M1527 212 C1500 226 1420 255 1360 282 C 1310 304 1290 310 1290 326" fill="none" stroke="#a4a4a4" stroke-width="2.8" stroke-linecap="round"/><path d="M1527 239 C1528 256 1557 252 1558 270" fill="none" stroke="#a4a4a4" stroke-width="2.8" stroke-linecap="round"/><path d="M1599 161 C1599 176 1580 184 1566 190" fill="none" stroke="#a4a4a4" stroke-width="2.8" stroke-linecap="round"/><path d="M1599 126 L1599 139" fill="none" stroke="#a4a4a4" stroke-width="2.8" stroke-linecap="round"/><path d="M1610 161 L1610 197" fill="none" stroke="#a4a4a4" stroke-width="2.8" stroke-linecap="round"/><path d="M1620 161 C1622 172 1650 168 1680 166 C 1700 165 1706 168 1706 176" fill="none" stroke="#a4a4a4" stroke-width="2.8" stroke-linecap="round"/><path d="M1800 142 L1800 148" fill="none" stroke="#a4a4a4" stroke-width="2.8" stroke-linecap="round"/><path d="M1800 172 L1800 176" fill="none" stroke="#a4a4a4" stroke-width="2.8" stroke-linecap="round"/><path d="M1706 198 L1706 262" fill="none" stroke="#a4a4a4" stroke-width="2.8" stroke-linecap="round"/><path d="M1726 226 L1726 228" fill="none" stroke="#a4a4a4" stroke-width="2.8" stroke-linecap="round"/><path d="M1726 251 C1726 258 1708 254 1706 262" fill="none" stroke="#a4a4a4" stroke-width="2.8" stroke-linecap="round"/><path d="M1781 251 C1781 262 1740 252 1720 256 C1708 258 1706 259 1706 262" fill="none" stroke="#a4a4a4" stroke-width="2.8" stroke-linecap="round"/><path d="M1610 219 L1610 225" fill="none" stroke="#a4a4a4" stroke-width="2.8" stroke-linecap="round"/><path d="M1610 247 L1610 252" fill="none" stroke="#a4a4a4" stroke-width="2.8" stroke-linecap="round"/><path d="M1610 274 L1610 278" fill="none" stroke="#a4a4a4" stroke-width="2.8" stroke-linecap="round"/><path d="M1610 300 C1610 330 1580 348 1560 366 C 1545 380 1541 388 1541 400" fill="none" stroke="#a4a4a4" stroke-width="2.8" stroke-linecap="round"/><path d="M1610 300 C1612 322 1640 320 1665 328 C 1692 336 1699 340 1699 349" fill="none" stroke="#a4a4a4" stroke-width="2.8" stroke-linecap="round"/><path d="M1699 371 L1699 376" fill="none" stroke="#a4a4a4" stroke-width="2.8" stroke-linecap="round"/><path d="M1699 398 L1699 415" fill="none" stroke="#a4a4a4" stroke-width="2.8" stroke-linecap="round"/><path d="M1827 309 L1827 311" fill="none" stroke="#a4a4a4" stroke-width="2.8" stroke-linecap="round"/><path d="M1827 335 L1827 414" fill="none" stroke="#a4a4a4" stroke-width="2.8" stroke-linecap="round"/><path d="M1827 335 C1827 343 1791 336 1791 346" fill="none" stroke="#a4a4a4" stroke-width="2.8" stroke-linecap="round"/><path d="M1791 368 C1791 376 1768 372 1768 380" fill="none" stroke="#a4a4a4" stroke-width="2.8" stroke-linecap="round"/><path d="M1768 402 L1768 414" fill="none" stroke="#a4a4a4" stroke-width="2.8" stroke-linecap="round"/><path d="M1768 436 L1768 447" fill="none" stroke="#a4a4a4" stroke-width="2.8" stroke-linecap="round"/><path d="M1827 436 C1827 446 1790 440 1776 442 C1769 443 1768 445 1768 447" fill="none" stroke="#a4a4a4" stroke-width="2.8" stroke-linecap="round"/><path d="M1264 292 C1264 400 1276 560 1283 667" fill="none" stroke="#a4a4a4" stroke-width="2.8" stroke-linecap="round"/><path d="M1477 292 L1477 326" fill="none" stroke="#a4a4a4" stroke-width="2.8" stroke-linecap="round"/><path d="M1384 300 C1384 316 1420 312 1450 312 C 1470 312 1477 316 1477 326" fill="none" stroke="#a4a4a4" stroke-width="2.8" stroke-linecap="round"/><path d="M1477 350 C1477 358 1460 356 1447 352" fill="none" stroke="#a4a4a4" stroke-width="2.8" stroke-linecap="round"/><path d="M1430 341 C1415 333 1395 332 1392 342" fill="none" stroke="#a4a4a4" stroke-width="2.8" stroke-linecap="round"/><path d="M1477 350 C1477 390 1440 420 1420 448 C 1400 476 1390 486 1380 497" fill="none" stroke="#a4a4a4" stroke-width="2.8" stroke-linecap="round"/><path d="M1364 518 C1340 550 1316 575 1313 606" fill="none" stroke="#a4a4a4" stroke-width="2.8" stroke-linecap="round"/><path d="M1290 348 C1290 380 1300 395 1302 422" fill="none" stroke="#a4a4a4" stroke-width="2.8" stroke-linecap="round"/><path d="M1290 348 C1292 362 1330 368 1360 378 C 1385 386 1392 394 1392 406" fill="none" stroke="#a4a4a4" stroke-width="2.8" stroke-linecap="round"/><path d="M1290 348 C1296 362 1400 372 1480 380 C 1560 388 1620 390 1650 398 C 1675 404 1681 408 1681 415" fill="none" stroke="#a4a4a4" stroke-width="2.8" stroke-linecap="round"/><path d="M1392 428 L1392 442" fill="none" stroke="#a4a4a4" stroke-width="2.8" stroke-linecap="round"/><path d="M1405 428 C1407 438 1440 432 1452 435 C1459 437 1459 439 1459 442" fill="none" stroke="#a4a4a4" stroke-width="2.8" stroke-linecap="round"/><path d="M1302 444 C1300 520 1290 600 1284 667" fill="none" stroke="#a4a4a4" stroke-width="2.8" stroke-linecap="round"/><path d="M1322 495 L1322 497" fill="none" stroke="#a4a4a4" stroke-width="2.8" stroke-linecap="round"/><path d="M1392 465 C1392 490 1440 500 1470 512 C 1500 524 1512 530 1512 545" fill="none" stroke="#a4a4a4" stroke-width="2.8" stroke-linecap="round"/><path d="M1459 465 C1459 500 1508 505 1512 545" fill="none" stroke="#a4a4a4" stroke-width="2.8" stroke-linecap="round"/><path d="M1541 422 C1538 450 1500 485 1470 510 C 1450 526 1420 548 1405 566 C 1396 578 1392 588 1392 598" fill="none" stroke="#a4a4a4" stroke-width="2.8" stroke-linecap="round"/><path d="M1541 422 C1545 450 1580 480 1616 512 C 1660 552 1720 610 1741 626 C 1748 634 1750 642 1750 652" fill="none" stroke="#a4a4a4" stroke-width="2.8" stroke-linecap="round"/><path d="M1541 509 C1541 528 1514 524 1512 545" fill="none" stroke="#a4a4a4" stroke-width="2.8" stroke-linecap="round"/><path d="M1541 509 C1545 524 1600 520 1640 524 C 1672 528 1681 534 1681 545" fill="none" stroke="#a4a4a4" stroke-width="2.8" stroke-linecap="round"/><path d="M1618 567 C1616 577 1590 575 1570 570 C 1540 563 1480 540 1445 530 C1420 522 1394 520 1392 532" fill="none" stroke="#a4a4a4" stroke-width="2.8" stroke-linecap="round"/><path d="M1392 554 L1392 565" fill="none" stroke="#a4a4a4" stroke-width="2.8" stroke-linecap="round"/><path d="M1392 587 L1392 598" fill="none" stroke="#a4a4a4" stroke-width="2.8" stroke-linecap="round"/><path d="M1392 650 L1392 689" fill="none" stroke="#a4a4a4" stroke-width="2.8" stroke-linecap="round"/><path d="M1512 567 L1512 628" fill="none" stroke="#48a854" stroke-width="3.8"/><path d="M1512 567 L1512 628" fill="none" stroke="#1f4a25" stroke-width="1.29"/><path d="M1512 567 L1512 628" fill="none" stroke="#c9f2c0" stroke-width="1.22" stroke-dasharray="4 1.6"/><path d="M1512 650 L1512 674" fill="none" stroke="#48a854" stroke-width="3.8"/><path d="M1512 650 L1512 674" fill="none" stroke="#1f4a25" stroke-width="1.29"/><path d="M1512 650 L1512 674" fill="none" stroke="#c9f2c0" stroke-width="1.22" stroke-dasharray="4 1.6"/><path d="M1512 696 L1512 739" fill="none" stroke="#48a854" stroke-width="3.8"/><path d="M1512 696 L1512 739" fill="none" stroke="#1f4a25" stroke-width="1.29"/><path d="M1512 696 L1512 739" fill="none" stroke="#c9f2c0" stroke-width="1.22" stroke-dasharray="4 1.6"/><path d="M1512 761 L1512 772" fill="none" stroke="#48a854" stroke-width="3.8"/><path d="M1512 761 L1512 772" fill="none" stroke="#1f4a25" stroke-width="1.29"/><path d="M1512 761 L1512 772" fill="none" stroke="#c9f2c0" stroke-width="1.22" stroke-dasharray="4 1.6"/><path d="M1608 650 L1608 674" fill="none" stroke="#48a854" stroke-width="3.8"/><path d="M1608 650 L1608 674" fill="none" stroke="#1f4a25" stroke-width="1.29"/><path d="M1608 650 L1608 674" fill="none" stroke="#c9f2c0" stroke-width="1.22" stroke-dasharray="4 1.6"/><path d="M1681 567 C1681 592 1642 596 1625 606 C 1610 614 1608 620 1608 628" fill="none" stroke="#48a854" stroke-width="3.8"/><path d="M1681 567 C1681 592 1642 596 1625 606 C 1610 614 1608 620 1608 628" fill="none" stroke="#1f4a25" stroke-width="1.29"/><path d="M1681 567 C1681 592 1642 596 1625 606 C 1610 614 1608 620 1608 628" fill="none" stroke="#c9f2c0" stroke-width="1.22" stroke-dasharray="4 1.6"/><path d="M1681 437 L1681 451" fill="none" stroke="#a4a4a4" stroke-width="2.8" stroke-linecap="round"/><path d="M1681 473 L1681 545" fill="none" stroke="#a4a4a4" stroke-width="2.8" stroke-linecap="round"/><path d="M1695 473 C1697 482 1720 478 1735 480 C 1745 482 1745 484 1745 487" fill="none" stroke="#a4a4a4" stroke-width="2.8" stroke-linecap="round"/><path d="M1745 510 C1745 532 1688 525 1681 545" fill="none" stroke="#a4a4a4" stroke-width="2.8" stroke-linecap="round"/><path d="M1787 567 C1787 579 1750 574 1750 586" fill="none" stroke="#a4a4a4" stroke-width="2.8" stroke-linecap="round"/><path d="M1750 608 L1750 743" fill="none" stroke="#a4a4a4" stroke-width="2.8" stroke-linecap="round"/><path d="M1750 765 C1750 774 1740 773 1734 769 C 1712 756 1690 716 1670 686 C 1655 664 1648 652 1640 640 C 1632 624 1612 616 1608 628" fill="none" stroke="#a4a4a4" stroke-width="2.8" stroke-linecap="round"/><path d="M1313 628 C1313 648 1284 648 1283 667" fill="none" stroke="#a4a4a4" stroke-width="2.8" stroke-linecap="round"/><path d="M1283 689 L1283 698" fill="none" stroke="#a4a4a4" stroke-width="2.8" stroke-linecap="round"/><path d="M1283 720 C1283 736 1310 732 1360 731 C 1420 730 1470 722 1500 730 C1510 733 1512 735 1512 739" fill="none" stroke="#a4a4a4" stroke-width="2.8" stroke-linecap="round"/><path d="M1392 711 C1396 722 1420 720 1432 700 C 1450 672 1468 645 1480 632 C 1490 620 1510 618 1512 628" fill="none" stroke="#a4a4a4" stroke-width="2.8" stroke-linecap="round"/></svg>
<div class="nb" style="left:1255px;top:77px;width:30px;height:30px;background:#2b2b2b;"><svg width="30" height="30" style="position:absolute;left:0;top:0"><path d="M8.1 18.0 L21.9 18.0 L15.0 26.4 Z" fill="#bfe4ea"/></svg><span style="left:0;width:30px;text-align:center;top:1.2px;font-size:13px;line-height:16.5px;font-weight:bold">1</span></div>
<div class="nb" style="left:1436px;top:83px;width:30px;height:30px;background:#2b2b2b;"><svg width="30" height="30" style="position:absolute;left:0;top:0"><path d="M8.1 18.0 L21.9 18.0 L15.0 26.4 Z" fill="#bfe4ea"/></svg><span style="left:0;width:30px;text-align:center;top:1.2px;font-size:13px;line-height:16.5px;font-weight:bold">2</span></div>
<div class="nb" style="left:1503px;top:83px;width:30px;height:30px;background:#2b2b2b;"><svg width="30" height="30" style="position:absolute;left:0;top:0"><path d="M8.1 18.0 L21.9 18.0 L15.0 26.4 Z" fill="#bfe4ea"/></svg><span style="left:0;width:30px;text-align:center;top:1.2px;font-size:13px;line-height:16.5px;font-weight:bold">3</span></div>
<div class="ob" style="left:1313px;top:99px;width:73px;height:22px;"><b class="tb" style="height:4px"></b><b class="bb" style="height:4px"></b><span style="left:4px;top:3px;font-size:12px;line-height:16px">r long_black</span><i class="out" style="left:6px"></i></div>
<div class="ob" style="left:1334px;top:133px;width:80px;height:22px;"><b class="tb" style="height:4px"></b><b class="bb" style="height:4px"></b><span style="left:4px;top:3px;font-size:12px;line-height:16px">r long_black2</span><i class="out" style="left:6px"></i></div>
<div class="ob" style="left:1255px;top:171px;width:50px;height:22px;"><b class="tb" style="height:4px"></b><b class="bb" style="height:4px"></b><span style="left:4px;top:3px;font-size:12px;line-height:16px">select 0</span><i class="gi" style="left:38px"></i><i class="go" style="left:38px"></i><i class="in" style="left:6px"></i><i class="out" style="left:6px"></i></div>
<div class="ob" style="left:1442px;top:159px;width:30px;height:22px;"><b class="tb" style="height:4px"></b><b class="bb" style="height:4px"></b><span style="left:4px;top:3px;font-size:12px;line-height:16px">- 1</span><i class="gi" style="left:18px"></i><i class="in" style="left:6px"></i><i class="out" style="left:6px"></i></div>
<div class="nb" style="left:1442px;top:190px;width:50px;height:22px;background:#333;"><svg style="position:absolute;left:0;top:0" width="50" height="22"><path d="M4 4.5 L10 11.0 L4 17.5 Z" fill="#777"/></svg><span style="left:13px;top:0;font-size:12px;line-height:22px;color:#fff">0</span></div>
<div class="ob" style="left:1518px;top:190px;width:68px;height:22px;"><b class="tb" style="height:4px"></b><b class="bb" style="height:4px"></b><span style="left:4px;top:3px;font-size:12px;line-height:16px">r scene_no</span><i class="out" style="left:6px"></i></div>
<div class="nb" style="left:1518px;top:217px;width:50px;height:22px;background:#333;"><svg style="position:absolute;left:0;top:0" width="50" height="22"><path d="M4 4.5 L10 11.0 L4 17.5 Z" fill="#777"/></svg><span style="left:13px;top:0;font-size:12px;line-height:22px;color:#fff">0</span></div>
<div style="left:1313px;top:217px;width:24px;height:24px;background:#333;"><svg width="24" height="24" style="position:absolute;left:0;top:0"><circle cx="12.0" cy="12.0" r="7.92" fill="none" stroke="#5a5a5a" stroke-width="1.8"/></svg></div>
<div class="ob" style="left:1590px;top:104px;width:61px;height:22px;"><b class="tb" style="height:4px"></b><b class="bb" style="height:4px"></b><span style="left:4px;top:3px;font-size:12px;line-height:16px">pipe 1000</span><i class="gi" style="left:49px"></i><i class="in" style="left:6px"></i><i class="out" style="left:6px"></i></div>
<div class="ob" style="left:1590px;top:139px;width:40px;height:22px;"><b class="tb" style="height:4px"></b><b class="bb" style="height:4px"></b><span style="left:4px;top:3px;font-size:12px;line-height:16px">t b i i</span><i class="in" style="left:6px"></i><i class="out" style="left:6px"></i><i class="out" style="left:17px"></i><i class="out" style="left:27px"></i></div>
<div class="ob" style="left:1791px;top:122px;width:29px;height:20px;"><b class="tb" style="height:4px"></b><b class="bb" style="height:4px"></b><span style="left:4px;top:3px;font-size:10px;line-height:14px">r init</span><i class="out" style="left:6px"></i></div>
<div style="left:1791px;top:148px;width:24px;height:24px;background:#333;"><svg width="24" height="24" style="position:absolute;left:0;top:0"><circle cx="12.0" cy="12.0" r="7.92" fill="none" stroke="#5a5a5a" stroke-width="1.8"/></svg></div>
<div class="ob" style="left:1697px;top:176px;width:113px;height:22px;"><b class="tb" style="height:4px"></b><b class="bb" style="height:4px"></b><span style="left:4px;top:3px;font-size:12px;line-height:16px">p file_path_setting1</span><i class="in" style="left:6px"></i><i class="in" style="left:100px"></i><i class="out" style="left:6px"></i></div>
<div class="ob" style="left:1601px;top:197px;width:75px;height:22px;"><b class="tb" style="height:4px"></b><b class="bb" style="height:4px"></b><span style="left:4px;top:3px;font-size:12px;line-height:16px">p time_room</span><i class="in" style="left:6px"></i><i class="out" style="left:6px"></i></div>
<div class="nb" style="left:1601px;top:225px;width:50px;height:22px;background:#333;"><svg style="position:absolute;left:0;top:0" width="50" height="22"><path d="M4 4.5 L10 11.0 L4 17.5 Z" fill="#777"/></svg><span style="left:13px;top:0;font-size:12px;line-height:22px;color:#fff">0.</span></div>
<div class="ob" style="left:1601px;top:252px;width:47px;height:22px;"><b class="tb" style="height:4px"></b><b class="bb" style="height:4px"></b><span style="left:4px;top:3px;font-size:12px;line-height:16px">* 1000.</span><i class="gi" style="left:35px"></i><i class="in" style="left:6px"></i><i class="out" style="left:6px"></i></div>
<div class="nb" style="left:1601px;top:278px;width:50px;height:22px;background:#333;"><svg style="position:absolute;left:0;top:0" width="50" height="22"><path d="M4 4.5 L10 11.0 L4 17.5 Z" fill="#777"/></svg><span style="left:13px;top:0;font-size:12px;line-height:22px;color:#fff">0</span></div>
<div class="ob" style="left:1717px;top:206px;width:52px;height:20px;"><b class="tb" style="height:4px"></b><b class="bb" style="height:4px"></b><span style="left:4px;top:3px;font-size:10px;line-height:14px">r jit_clock</span><i class="out" style="left:6px"></i></div>
<div class="ob" style="left:1717px;top:228px;width:73px;height:23px;"><b class="tb" style="height:4px"></b><b class="bb" style="height:4px"></b><span style="left:4px;top:3px;font-size:12px;line-height:17px">t gettime b</span><i class="in" style="left:6px"></i><i class="out" style="left:6px"></i><i class="out" style="left:61px"></i></div>
<div class="ob" style="left:1697px;top:262px;width:100px;height:22px;"><b class="tb" style="height:4px"></b><b class="bb" style="height:4px"></b><span style="left:4px;top:3px;font-size:12px;line-height:16px">s mov_command</span><i class="in" style="left:6px"></i></div>
<div class="mg" style="left:1255px;top:270px;width:55px;height:22px;border-radius:5px;"><span style="left:4px;top:0px;font-size:12px;line-height:22px">1. 10000</span></div>
<div class="ob" style="left:1375px;top:278px;width:70px;height:22px;"><b class="tb" style="height:4px"></b><b class="bb" style="height:4px"></b><span style="left:4px;top:3px;font-size:12px;line-height:16px">r fast_black</span><i class="out" style="left:6px"></i></div>
<div class="ob" style="left:1468px;top:270px;width:100px;height:22px;"><b class="tb" style="height:4px"></b><b class="bb" style="height:4px"></b><span style="left:4px;top:3px;font-size:12px;line-height:16px">if $i2&lt;16 then $i1</span><i class="in" style="left:6px"></i><i class="in" style="left:88px"></i><i class="out" style="left:6px"></i></div>
<div class="ob" style="left:1281px;top:326px;width:61px;height:22px;"><b class="tb" style="height:4px"></b><b class="bb" style="height:4px"></b><span style="left:4px;top:3px;font-size:12px;line-height:16px">delay 100</span><i class="gi" style="left:49px"></i><i class="in" style="left:6px"></i><i class="out" style="left:6px"></i></div>
<div class="ob" style="left:1383px;top:342px;width:64px;height:22px;"><b class="tb" style="height:4px"></b><b class="bb" style="height:4px"></b><span style="left:4px;top:3px;font-size:12px;line-height:16px">s color_off</span><i class="in" style="left:6px"></i></div>
<div style="left:1468px;top:326px;width:24px;height:24px;background:#333;"><svg width="24" height="24" style="position:absolute;left:0;top:0"><circle cx="12.0" cy="12.0" r="7.92" fill="none" stroke="#5a5a5a" stroke-width="1.8"/></svg></div>
<div class="ob" style="left:1383px;top:406px;width:32px;height:22px;"><b class="tb" style="height:4px"></b><b class="bb" style="height:4px"></b><span style="left:4px;top:3px;font-size:12px;line-height:16px">t b b</span><i class="in" style="left:6px"></i><i class="out" style="left:6px"></i><i class="out" style="left:19px"></i></div>
<div class="mg" style="left:1293px;top:422px;width:49px;height:22px;border-radius:5px;"><span style="left:4px;top:0px;font-size:12px;line-height:22px">0. 1500</span></div>
<div class="mg" style="left:1532px;top:400px;width:81px;height:22px;border-radius:5px;"><span style="left:4px;top:0px;font-size:12px;line-height:22px">setdomain $1</span></div>
<div class="ob" style="left:1818px;top:289px;width:29px;height:20px;"><b class="tb" style="height:4px"></b><b class="bb" style="height:4px"></b><span style="left:4px;top:3px;font-size:10px;line-height:14px">r init</span><i class="out" style="left:6px"></i></div>
<div style="left:1818px;top:311px;width:24px;height:24px;background:#333;"><svg width="24" height="24" style="position:absolute;left:0;top:0"><circle cx="12.0" cy="12.0" r="7.92" fill="none" stroke="#5a5a5a" stroke-width="1.8"/></svg></div>
<div class="ob" style="left:1690px;top:349px;width:30px;height:22px;"><b class="tb" style="height:4px"></b><b class="bb" style="height:4px"></b><span style="left:4px;top:3px;font-size:12px;line-height:16px">/ 2</span><i class="gi" style="left:18px"></i><i class="in" style="left:6px"></i><i class="out" style="left:6px"></i></div>
<div class="nb" style="left:1690px;top:376px;width:50px;height:22px;background:#333;"><svg style="position:absolute;left:0;top:0" width="50" height="22"><path d="M4 4.5 L10 11.0 L4 17.5 Z" fill="#777"/></svg><span style="left:13px;top:0;font-size:12px;line-height:22px;color:#fff">0</span></div>
<div class="mg" style="left:1782px;top:346px;width:29px;height:22px;border-radius:5px;"><span style="left:4px;top:0px;font-size:12px;line-height:22px">1.</span></div>
<div class="nb" style="left:1759px;top:380px;width:50px;height:22px;background:#333;"><svg style="position:absolute;left:0;top:0" width="50" height="22"><path d="M4 4.5 L10 11.0 L4 17.5 Z" fill="#777"/></svg><span style="left:13px;top:0;font-size:12px;line-height:22px;color:#fff">1.</span></div>
<div class="mg" style="left:1759px;top:414px;width:46px;height:22px;border-radius:5px;"><span style="left:4px;top:0px;font-size:12px;line-height:22px">rate $1</span></div>
<div class="mg" style="left:1818px;top:414px;width:41px;height:22px;border-radius:5px;"><span style="left:4px;top:0px;font-size:12px;line-height:22px">loop 1</span></div>
<div class="ob" style="left:1672px;top:415px;width:37px;height:22px;"><b class="tb" style="height:4px"></b><b class="bb" style="height:4px"></b><span style="left:4px;top:3px;font-size:12px;line-height:16px">delay</span><i class="in" style="left:6px"></i><i class="in" style="left:24px"></i><i class="out" style="left:6px"></i></div>
<div class="ob" style="left:1672px;top:451px;width:32px;height:22px;"><b class="tb" style="height:4px"></b><b class="bb" style="height:4px"></b><span style="left:4px;top:3px;font-size:12px;line-height:16px">t b b</span><i class="in" style="left:6px"></i><i class="out" style="left:6px"></i><i class="out" style="left:19px"></i></div>
<div class="ob" style="left:1759px;top:447px;width:100px;height:22px;"><b class="tb" style="height:4px"></b><b class="bb" style="height:4px"></b><span style="left:4px;top:3px;font-size:12px;line-height:16px">s mov_command</span><i class="in" style="left:6px"></i></div>
<div class="mg" style="left:1383px;top:442px;width:53px;height:22px;border-radius:5px;"><span style="left:4px;top:0px;font-size:12px;line-height:22px">frame 0</span></div>
<div class="mg" style="left:1450px;top:442px;width:34px;height:22px;border-radius:5px;"><span style="left:4px;top:0px;font-size:12px;line-height:22px">start</span></div>
<div class="mg" style="left:1672px;top:487px;width:53px;height:23px;border-radius:5px;"><span style="left:4px;top:0px;font-size:12px;line-height:23px">frame 0</span></div>
<div class="mg" style="left:1736px;top:487px;width:34px;height:23px;border-radius:5px;"><span style="left:4px;top:0px;font-size:12px;line-height:23px">start</span></div>
<div class="mg" style="left:1313px;top:473px;width:29px;height:22px;border-radius:5px;"><span style="left:4px;top:0px;font-size:12px;line-height:22px">1</span></div>
<div class="ob" style="left:1313px;top:497px;width:69px;height:22px;"><b class="tb" style="height:4px"></b><b class="bb" style="height:4px"></b><span style="left:4px;top:3px;font-size:12px;line-height:16px">s pattern_p</span><i class="in" style="left:6px"></i></div>
<div class="ob" style="left:1532px;top:487px;width:98px;height:22px;"><b class="tb" style="height:4px"></b><b class="bb" style="height:4px"></b><span style="left:4px;top:3px;font-size:12px;line-height:16px">r mov_command</span><i class="out" style="left:6px"></i></div>
<div class="ob" style="left:1383px;top:532px;width:66px;height:22px;"><b class="tb" style="height:4px"></b><b class="bb" style="height:4px"></b><span style="left:4px;top:3px;font-size:12px;line-height:16px">route time</span><i class="gi" style="left:54px"></i><i class="go" style="left:54px"></i><i class="in" style="left:6px"></i><i class="out" style="left:6px"></i></div>
<div class="nb" style="left:1383px;top:565px;width:78px;height:22px;background:#333;"><svg style="position:absolute;left:0;top:0" width="78" height="22"><path d="M4 4.5 L10 11.0 L4 17.5 Z" fill="#777"/></svg><span style="left:13px;top:0;font-size:12px;line-height:22px;color:#fff">0</span></div>
<div class="ob" style="left:1503px;top:545px;width:125px;height:22px;"><b class="tb" style="height:4px"></b><b class="bb" style="height:4px"></b><span style="left:4px;top:3px;font-size:12px;line-height:16px">jit.movie @autostart 0</span><i class="in" style="left:6px"></i><i class="out" style="left:6px"></i><i class="out" style="left:112px"></i></div>
<div class="ob" style="left:1672px;top:545px;width:125px;height:22px;"><b class="tb" style="height:4px"></b><b class="bb" style="height:4px"></b><span style="left:4px;top:3px;font-size:12px;line-height:16px">jit.movie @autostart 0</span><i class="in" style="left:6px"></i><i class="out" style="left:6px"></i><i class="out" style="left:112px"></i></div>
<div class="ob" style="left:1741px;top:586px;width:66px;height:22px;"><b class="tb" style="height:4px"></b><b class="bb" style="height:4px"></b><span style="left:4px;top:3px;font-size:12px;line-height:16px">route time</span><i class="gi" style="left:54px"></i><i class="go" style="left:54px"></i><i class="in" style="left:6px"></i><i class="out" style="left:6px"></i></div>
<div class="nb" style="left:1741px;top:619px;width:78px;height:22px;background:#333;"><svg style="position:absolute;left:0;top:0" width="78" height="22"><path d="M4 4.5 L10 11.0 L4 17.5 Z" fill="#777"/></svg><span style="left:13px;top:0;font-size:12px;line-height:22px;color:#fff">0</span></div>
<div style="left:1383px;top:598px;width:91px;height:52px;background:#2d2d2d;"><svg width="91" height="52"><path d="M6 19.5 L29.5 46 L60.5 46 L85 19.5" fill="none" stroke="#a8c8cc" stroke-width="1.2"/><circle cx="6" cy="19.5" r="3" fill="#2d2d2d" stroke="#d4eef2" stroke-width="1.4"/><circle cx="29.5" cy="46" r="2" fill="#2d2d2d" stroke="#c4e6ea" stroke-width="1.2"/><circle cx="60.5" cy="46" r="2" fill="#2d2d2d" stroke="#c4e6ea" stroke-width="1.2"/><circle cx="85" cy="19.5" r="2.4" fill="#b5dde4"/></svg></div>
<div style="left:1741px;top:652px;width:91px;height:52px;background:#2d2d2d;"><svg width="91" height="52"><path d="M6 19 L35.5 46 L56.5 46 L85 19" fill="none" stroke="#a8c8cc" stroke-width="1.2"/><circle cx="6" cy="19" r="3" fill="#2d2d2d" stroke="#d4eef2" stroke-width="1.4"/><circle cx="35.5" cy="46" r="2" fill="#2d2d2d" stroke="#c4e6ea" stroke-width="1.2"/><circle cx="56.5" cy="46" r="2" fill="#2d2d2d" stroke="#c4e6ea" stroke-width="1.2"/><circle cx="85" cy="19" r="2.4" fill="#b5dde4"/></svg></div>
<div class="mg" style="left:1304px;top:606px;width:49px;height:22px;border-radius:5px;"><span style="left:4px;top:0px;font-size:12px;line-height:22px">1. 1000</span></div>
<div class="ob" style="left:1274px;top:667px;width:57px;height:22px;"><b class="tb" style="height:4px"></b><b class="bb" style="height:4px"></b><span style="left:4px;top:3px;font-size:12px;line-height:16px">line 1. 25</span><i class="gi" style="left:25px"></i><i class="gi" style="left:45px"></i><i class="go" style="left:45px"></i><i class="in" style="left:6px"></i><i class="out" style="left:6px"></i></div>
<div class="mg" style="left:1274px;top:698px;width:55px;height:22px;border-radius:5px;"><span style="left:4px;top:0px;font-size:12px;line-height:22px">xfade $1</span></div>
<div class="nb" style="left:1383px;top:660px;width:50px;height:22px;background:#333;"><svg style="position:absolute;left:0;top:0" width="50" height="22"><path d="M4 4.5 L10 11.0 L4 17.5 Z" fill="#777"/></svg><span style="left:13px;top:0;font-size:12px;line-height:22px;color:#fff">0.963</span></div>
<div class="mg" style="left:1383px;top:689px;width:55px;height:22px;border-radius:5px;"><span style="left:4px;top:0px;font-size:12px;line-height:22px">xfade $1</span></div>
<div class="ob" style="left:1503px;top:628px;width:50px;height:22px;"><b class="tb" style="height:4px"></b><b class="bb" style="height:4px"></b><span style="left:4px;top:3px;font-size:12px;line-height:16px">jit.xfade</span><i class="gi" style="left:38px"></i><i class="go" style="left:38px"></i><i class="in" style="left:6px"></i><i class="out" style="left:6px"></i></div>
<div class="ob" style="left:1599px;top:628px;width:50px;height:22px;"><b class="tb" style="height:4px"></b><b class="bb" style="height:4px"></b><span style="left:4px;top:3px;font-size:12px;line-height:16px">jit.xfade</span><i class="gi" style="left:38px"></i><i class="go" style="left:38px"></i><i class="in" style="left:6px"></i><i class="out" style="left:6px"></i></div>
<div class="ob" style="left:1503px;top:674px;width:115px;height:22px;"><b class="tb" style="height:4px"></b><b class="bb" style="height:4px"></b><span style="left:4px;top:3px;font-size:12px;line-height:16px">jit.xfade @xfade 0.5</span><i class="go" style="left:102px"></i><i class="in" style="left:6px"></i><i class="in" style="left:102px"></i><i class="out" style="left:6px"></i></div>
<div class="ob" style="left:1503px;top:739px;width:50px;height:22px;"><b class="tb" style="height:4px"></b><b class="bb" style="height:4px"></b><span style="left:4px;top:3px;font-size:12px;line-height:16px">jit.xfade</span><i class="gi" style="left:38px"></i><i class="go" style="left:38px"></i><i class="in" style="left:6px"></i><i class="out" style="left:6px"></i></div>
<div class="nb" style="left:1503px;top:772px;width:30px;height:30px;background:#2b2b2b;"><svg width="30" height="30" style="position:absolute;left:0;top:0"><path d="M8.1 3.5999999999999996 L21.9 3.5999999999999996 L15.0 12.0 Z" fill="#bfe4ea"/></svg><span style="left:0;width:30px;text-align:center;top:12.0px;font-size:13px;line-height:16.5px;font-weight:bold">1</span></div>
<div class="nb" style="left:1741px;top:714px;width:50px;height:22px;background:#333;"><svg style="position:absolute;left:0;top:0" width="50" height="22"><path d="M4 4.5 L10 11.0 L4 17.5 Z" fill="#777"/></svg><span style="left:13px;top:0;font-size:12px;line-height:22px;color:#fff">1.</span></div>
<div class="mg" style="left:1741px;top:743px;width:55px;height:22px;border-radius:5px;"><span style="left:4px;top:0px;font-size:12px;line-height:22px">xfade $1</span></div>
<!-- w3 -->
<div class="win" style="left:813px;top:89px;width:338px;height:484px;background:#535353">
<div class="tbar" style="background:#f5f5f5;color:#b4b4b4;border-bottom:1px solid #e0e0e0">[file_path_setting1]</div>
<div class="tl" style="left:8px;background:#dcdcdc;box-shadow:inset 0 0 0 .5px rgba(0,0,0,.18);"><div style="left:4px;top:4px;width:4px;height:4px;border-radius:2px;background:#555"></div></div>
<div class="tl" style="left:28px;background:#dcdcdc;box-shadow:inset 0 0 0 .5px rgba(0,0,0,.18);"></div>
<div class="tl" style="left:48px;background:#dcdcdc;box-shadow:inset 0 0 0 .5px rgba(0,0,0,.18);"></div>
<div style="left:34px;top:56px;width:270px;height:395px;background:#e1e1e1"></div>
<svg class="ov" width="338" height="484"><text x="8" y="43.5" font-size="11" font-weight="bold" fill="#717171" font-family="Liberation Sans">100%</text><path d="M40 36.5h6l-3 4.5z" fill="#717171"/><g transform="translate(72 39) scale(1.0)"><rect x="-8.5" y="-7.5" width="17" height="15" fill="none" stroke="#717171" stroke-width="1.4"/><path d="M-8.5 -4.3H8.5M-8.5 4.3H8.5" stroke="#717171" stroke-width="1.4"/></g><g transform="translate(99 39) scale(1.0)"><path d="M-8.5 7.5V-5.5a2 2 0 0 1 2-2H8.5V7.5" fill="none" stroke="#717171" stroke-width="1.4"/><path d="M-8.5 7.5H8.5" stroke="#717171" stroke-width="1.4"/><path d="M-3.5 2.5L-2 -2.5M-0.5 2.5L1 -2.5M2.5 2.5L4 -2.5" stroke="#717171" stroke-width="1.2"/></g><g transform="translate(126 39) scale(1.0)"><path d="M-8.5 -6.5H8.5V3.5H4.5L5.5 7.5L0 3.5H-8.5Z" fill="#717171"/></g><g transform="translate(153 39) scale(1.0)"><rect x="-8" y="-8" width="16" height="16" fill="none" stroke="#717171" stroke-width="1.4"/><path d="M-4.5 -4.5L4.5 4.5M4.5 -4.5L-4.5 4.5" stroke="#717171" stroke-width="1.4"/></g><g transform="translate(180 39) scale(1.0)"><rect x="-8" y="-8" width="16" height="16" fill="none" stroke="#717171" stroke-width="1.4"/><circle r="3.8" fill="none" stroke="#717171" stroke-width="1.4"/><path d="M-3 12.5H3L0 15Z" fill="#717171" opacity=".7"/></g><g transform="translate(207 39) scale(1.0)"><rect x="-8" y="-8" width="16" height="16" fill="none" stroke="#717171" stroke-width="1.4"/><path d="M-5 -4L0.5 0L-5 4Z" fill="#717171"/><path d="M-3 12.5H3L0 15Z" fill="#717171" opacity=".7"/></g><g transform="translate(234 39) scale(1.0)"><rect x="-8" y="-8" width="16" height="16" fill="none" stroke="#717171" stroke-width="1.4"/><path d="M-8 0H8" stroke="#717171" stroke-width="1.6"/><path d="M-3 12.5H3L0 15Z" fill="#717171" opacity=".7"/></g><g transform="translate(261 39) scale(1.0)"><path d="M-4.5 7A8.3 8.3 0 1 1 4.5 7" fill="none" stroke="#717171" stroke-width="1.6"/><path d="M0 0.5L4 -4.5" stroke="#717171" stroke-width="1.6"/><path d="M-3 12.5H3L0 15Z" fill="#717171" opacity=".7"/></g><g transform="translate(288 39) scale(1.0)"><path d="M-6.5 0H6.5M0 -6.5V6.5" stroke="#717171" stroke-width="2.6"/><path d="M-3 12.5H3L0 15Z" fill="#717171" opacity=".7"/></g><g transform="translate(17 74.5) scale(1.0)"><path d="M0 -8.5L7.5 -4.5V4L0 8.5L-7.5 4V-4.5Z" fill="#717171"/><path d="M0 -0.5L7.5 -4.5M0 -0.5L-7.5 -4.5M0 -0.5V8.5" stroke="#000" stroke-opacity=".35" stroke-width="1.2" fill="none"/></g><g transform="translate(17 108.5) scale(1.0)"><circle r="8" fill="none" stroke="#717171" stroke-width="1.7"/><circle r="3.8" fill="none" stroke="#717171" stroke-width="1.7"/></g><g transform="translate(17 142.5) scale(1.0)"><rect x="-8.5" y="-6" width="17" height="12" fill="none" stroke="#717171" stroke-width="1.4"/><path d="M-8.5 -3H8.5M-8.5 3.5H8.5" stroke="#717171" stroke-width="1.2"/><path d="M-6 6V8M6 6V8" stroke="#717171" stroke-width="1.4"/></g><g transform="translate(17 176.5) scale(1.0)"><ellipse cx="-2.5" cy="6" rx="3.3" ry="2.6" fill="#717171"/><path d="M0 6V-8C2 -5 5.5 -4.5 5 0" fill="none" stroke="#717171" stroke-width="1.8"/></g><g transform="translate(17 210.5) scale(1.0)"><path d="M-2.5 -5L5 0L-2.5 5Z" fill="#717171"/><rect x="-8.5" y="-8" width="2.4" height="2.4" fill="#717171"/><rect x="6.5" y="-8" width="2.4" height="2.4" fill="#717171"/><rect x="-8.5" y="-3.5" width="2.4" height="2.4" fill="#717171"/><rect x="6.5" y="-3.5" width="2.4" height="2.4" fill="#717171"/><rect x="-8.5" y="1" width="2.4" height="2.4" fill="#717171"/><rect x="6.5" y="1" width="2.4" height="2.4" fill="#717171"/><rect x="-8.5" y="5.5" width="2.4" height="2.4" fill="#717171"/><rect x="6.5" y="5.5" width="2.4" height="2.4" fill="#717171"/></g><g transform="translate(17 244.5) scale(1.0)"><rect x="-8.5" y="-8" width="17" height="16" fill="none" stroke="#717171" stroke-width="1.4"/><path d="M-7 6L-3 -1L0 3L3 -3L7 6Z" fill="#717171"/><circle cx="-4.5" cy="-4.5" r="1.3" fill="#717171"/></g><g transform="translate(17 278.5) scale(1.0)"><path d="M-6 -3L2 5a3 3 0 0 0 4.5 -4.2L-2.5 -8.5a2.1 2.1 0 0 0 -3.2 3L2 2.5" fill="none" stroke="#717171" stroke-width="1.6" stroke-linecap="round"/></g><g transform="translate(17 312.5) scale(1.0)"><path d="M-3.5 -6H3V6H-3.5A6 6 0 0 1 -3.5 -6Z" fill="#717171"/><path d="M3 -3.2H8.5M3 3.2H8.5" stroke="#717171" stroke-width="2.2"/><path d="M-10 0H-7" stroke="#717171" stroke-width="2.6"/></g><g transform="translate(17 346.5) scale(1.0)"><circle r="8.5" fill="#717171"/><text x="0" y="4.5" text-anchor="middle" font-family="Liberation Serif" font-style="italic" font-weight="bold" font-size="14" fill="#535353">v</text></g><g transform="translate(17 380.5) scale(1.0)"><circle r="8.5" fill="#717171"/><text x="0" y="4.8" text-anchor="middle" font-family="Liberation Serif" font-style="italic" font-weight="bold" font-size="14" fill="#535353">b</text></g><g transform="translate(17 414.5) scale(1.0)"><polygon points="0.00,-8.20 2.17,-2.19 8.56,-1.98 3.52,1.94 5.29,8.08 0.00,4.50 -5.29,8.08 -3.52,1.94 -8.56,-1.98 -2.17,-2.19" fill="#717171"/></g><g transform="translate(321 74) scale(1.0)"><circle cx="-2" cy="-2" r="5.6" fill="none" stroke="#717171" stroke-width="2.2"/><path d="M2.3 2.3L8 8" stroke="#717171" stroke-width="3" stroke-linecap="round"/></g><g transform="translate(321 115) scale(1.0)"><circle r="8.5" fill="#717171"/><text x="0.3" y="5.2" text-anchor="middle" font-family="Liberation Serif" font-style="italic" font-weight="bold" font-size="15" fill="#535353">i</text></g><g transform="translate(321 156) scale(1.0)"><rect x="-8.5" y="-7" width="7.8" height="14" fill="#717171"/><rect x="0.7" y="-7" width="7.8" height="14" fill="#717171"/></g><g transform="translate(321 197) scale(1.0)"><rect x="-8.5" y="-7.3" width="2" height="1.6" fill="#717171"/><rect x="-5" y="-7.3" width="13.5" height="1.6" fill="#717171"/><rect x="-8.5" y="-3.8" width="2" height="1.6" fill="#717171"/><rect x="-5" y="-3.8" width="13.5" height="1.6" fill="#717171"/><rect x="-8.5" y="-0.30000000000000004" width="2" height="1.6" fill="#717171"/><rect x="-5" y="-0.30000000000000004" width="13.5" height="1.6" fill="#717171"/><rect x="-8.5" y="3.2" width="2" height="1.6" fill="#717171"/><rect x="-5" y="3.2" width="13.5" height="1.6" fill="#717171"/><rect x="-8.5" y="6.7" width="2" height="1.6" fill="#717171"/><rect x="-5" y="6.7" width="13.5" height="1.6" fill="#717171"/></g><g transform="translate(321 263) scale(1.0)"><path d="M-8.5 -5H-3L-2 -7.5H4L5 -5H8.5V7.5H-8.5Z" fill="#717171"/><circle cx="2" cy="1.3" r="3.6" fill="#535353"/><circle cx="2" cy="1.3" r="2" fill="#717171"/><rect x="-7" y="-2.5" width="2.2" height="1.6" fill="#535353"/><rect x="-7" y="0.8" width="2.2" height="1.6" fill="#535353"/></g><g transform="translate(321 304) scale(1.0)"><path d="M-6 -8V8" stroke="#717171" stroke-width="1.8"/><circle cx="-6" cy="2" r="2.6" fill="#717171"/><path d="M0 -8V8" stroke="#717171" stroke-width="1.8"/><circle cx="0" cy="-3" r="2.6" fill="#717171"/><path d="M6 -8V8" stroke="#717171" stroke-width="1.8"/><circle cx="6" cy="1" r="2.6" fill="#717171"/></g><rect x="312" y="337" width="6" height="2" fill="#707070"/><rect x="312" y="340" width="6" height="2" fill="#707070"/><rect x="312" y="343" width="6" height="2" fill="#707070"/><rect x="312" y="346" width="6" height="2" fill="#707070"/><rect x="312" y="349" width="6" height="2" fill="#707070"/><rect x="312" y="352" width="6" height="2" fill="#707070"/><rect x="312" y="355" width="6" height="2" fill="#707070"/><rect x="312" y="358" width="6" height="2" fill="#707070"/><rect x="312" y="361" width="6" height="2" fill="#707070"/><rect x="312" y="364" width="6" height="2" fill="#707070"/><rect x="312" y="367" width="6" height="2" fill="#707070"/><rect x="312" y="370" width="6" height="2" fill="#707070"/><rect x="312" y="373" width="6" height="2" fill="#707070"/><rect x="312" y="376" width="6" height="2" fill="#707070"/><rect x="312" y="379" width="6" height="2" fill="#707070"/><rect x="312" y="382" width="6" height="2" fill="#707070"/><rect x="312" y="385" width="6" height="2" fill="#707070"/><rect x="312" y="388" width="6" height="2" fill="#707070"/><rect x="312" y="391" width="6" height="2" fill="#707070"/><rect x="312" y="394" width="6" height="2" fill="#707070"/><rect x="312" y="397" width="6" height="2" fill="#707070"/><rect x="312" y="400" width="6" height="2" fill="#707070"/><rect x="312" y="403" width="6" height="2" fill="#707070"/><rect x="312" y="406" width="6" height="2" fill="#707070"/><rect x="312" y="409" width="6" height="2" fill="#707070"/><rect x="312" y="412" width="6" height="2" fill="#707070"/><rect x="312" y="415" width="6" height="2" fill="#707070"/><rect x="312" y="418" width="6" height="2" fill="#707070"/><rect x="312" y="421" width="6" height="2" fill="#707070"/><rect x="312" y="424" width="6" height="2" fill="#707070"/><rect x="312" y="427" width="6" height="2" fill="#707070"/><rect x="312" y="430" width="6" height="2" fill="#707070"/><rect x="312" y="433" width="6" height="2" fill="#707070"/><rect x="312" y="436" width="6" height="2" fill="#707070"/><rect x="312" y="439" width="6" height="2" fill="#707070"/><rect x="323" y="337" width="6" height="2" fill="#707070"/><rect x="323" y="340" width="6" height="2" fill="#707070"/><rect x="323" y="343" width="6" height="2" fill="#707070"/><rect x="323" y="346" width="6" height="2" fill="#707070"/><rect x="323" y="349" width="6" height="2" fill="#707070"/><rect x="323" y="352" width="6" height="2" fill="#707070"/><rect x="323" y="355" width="6" height="2" fill="#707070"/><rect x="323" y="358" width="6" height="2" fill="#707070"/><rect x="323" y="361" width="6" height="2" fill="#707070"/><rect x="323" y="364" width="6" height="2" fill="#707070"/><rect x="323" y="367" width="6" height="2" fill="#707070"/><rect x="323" y="370" width="6" height="2" fill="#707070"/><rect x="323" y="373" width="6" height="2" fill="#707070"/><rect x="323" y="376" width="6" height="2" fill="#707070"/><rect x="323" y="379" width="6" height="2" fill="#707070"/><rect x="323" y="382" width="6" height="2" fill="#707070"/><rect x="323" y="385" width="6" height="2" fill="#707070"/><rect x="323" y="388" width="6" height="2" fill="#707070"/><rect x="323" y="391" width="6" height="2" fill="#707070"/><rect x="323" y="394" width="6" height="2" fill="#707070"/><rect x="323" y="397" width="6" height="2" fill="#707070"/><rect x="323" y="400" width="6" height="2" fill="#707070"/><rect x="323" y="403" width="6" height="2" fill="#707070"/><rect x="323" y="406" width="6" height="2" fill="#707070"/><rect x="323" y="409" width="6" height="2" fill="#707070"/><rect x="323" y="412" width="6" height="2" fill="#707070"/><rect x="323" y="415" width="6" height="2" fill="#707070"/><rect x="323" y="418" width="6" height="2" fill="#707070"/><rect x="323" y="421" width="6" height="2" fill="#707070"/><rect x="323" y="424" width="6" height="2" fill="#707070"/><rect x="323" y="427" width="6" height="2" fill="#707070"/><rect x="323" y="430" width="6" height="2" fill="#707070"/><rect x="323" y="433" width="6" height="2" fill="#707070"/><rect x="323" y="436" width="6" height="2" fill="#707070"/><rect x="323" y="439" width="6" height="2" fill="#707070"/><rect x="313" y="335" width="5" height="30" fill="#707070"/><rect x="324" y="335" width="5" height="30" fill="#707070"/><rect x="314" y="359" width="14" height="7" rx="3" fill="#7a7a7a"/><g transform="translate(14 467) scale(1.0)"><rect x="-6.5" y="-1" width="13" height="10" rx="1" fill="#717171"/><path d="M-4 -1V-4.5a4 4 0 0 1 8 0V-1" fill="none" stroke="#717171" stroke-width="2"/><rect x="-0.9" y="2" width="1.8" height="4" fill="#535353"/></g><g transform="translate(40 467) scale(1.0)"><path d="M8 -2V-8H-8V8H-1" fill="none" stroke="#717171" stroke-width="1.5"/><path d="M-2 -3L6 5L3 5.3L5 9L3.5 9.7L1.6 6L-1 8Z" fill="#717171"/></g><g transform="translate(71 467) scale(1.0)"><rect x="-8.5" y="-8" width="17" height="11" fill="#717171"/><path d="M0 3V5M-5.5 9L0 4.5L5.5 9" fill="none" stroke="#717171" stroke-width="1.7"/></g><g transform="translate(102 467) scale(1.0)"><rect x="-8.5" y="-6.5" width="11" height="8.5" fill="#717171"/><rect x="-3.5" y="-1.5" width="12" height="8.5" fill="#717171" stroke="#535353" stroke-width="1.2"/></g><g transform="translate(132 467) scale(1.0)"><path d="M-8 -3H-3.5L1 -6.5V6.5L-3.5 3H-8Z" fill="#717171"/><path d="M2.5 -3.5H8.5V3.5H2.5Z" fill="#717171"/><path d="M-5 -8L4 9" stroke="#717171" stroke-width="1.3"/></g><g transform="translate(159 467) scale(1.0)"><path d="M-8 -4.5H8M-8 0.5H8M-8 5.5H8M-4.5 -8V8M0.5 -8V8M5.5 -8V8" stroke="#717171" stroke-width="1.1" fill="none"/></g><g transform="translate(195 467) scale(1.0)"><g transform="translate(-1.5 1.5) scale(.8)"><path d="M-6 -3L2 5a3 3 0 0 0 4.5 -4.2L-2.5 -8.5a2.1 2.1 0 0 0 -3.2 3L2 2.5" fill="none" stroke="#717171" stroke-width="1.6" stroke-linecap="round"/></g><path d="M4 -6H9M6.5 -8.5V-3.5" stroke="#717171" stroke-width="1.5"/></g><g transform="translate(226 467) scale(1.0)"><path d="M-7.5 8L1 -0.5" stroke="#717171" stroke-width="3.4" stroke-linecap="round"/><path d="M6.6 -5.8A4.6 4.6 0 1 1 2.2 -8L4 -4.5Z" fill="#717171"/></g><g transform="translate(257 467) scale(1.0)"><rect x="-8" y="-8" width="16" height="16" fill="#717171"/><path d="M-3.6 -8V2.5M1 -8V2.5M5 -8V2.5" stroke="#535353" stroke-width="2.4"/><path d="M-2.7 2V8M2.7 2V8" stroke="#535353" stroke-width="0.9"/></g><g transform="translate(288 467) scale(1.0)"><rect x="-9.0" y="-7.5" width="2.6" height="2.6" fill="#717171"/><rect x="-5.2" y="-7.5" width="2.6" height="2.6" fill="#717171"/><rect x="-1.4" y="-7.5" width="2.6" height="2.6" fill="#717171"/><rect x="2.4" y="-7.5" width="2.6" height="2.6" fill="#717171"/><rect x="6.2" y="-7.5" width="2.6" height="2.6" fill="#717171"/><rect x="-8.1" y="-3.5" width="2.6" height="2.6" fill="#717171"/><rect x="-4.3" y="-3.5" width="2.6" height="2.6" fill="#717171"/><rect x="-0.5" y="-3.5" width="2.6" height="2.6" fill="#717171"/><rect x="3.3" y="-3.5" width="2.6" height="2.6" fill="#717171"/><rect x="7.1" y="-3.5" width="2.6" height="2.6" fill="#717171"/><rect x="-9.0" y="0.5" width="2.6" height="2.6" fill="#717171"/><rect x="-5.2" y="0.5" width="2.6" height="2.6" fill="#717171"/><rect x="-1.4" y="0.5" width="2.6" height="2.6" fill="#717171"/><rect x="2.4" y="0.5" width="2.6" height="2.6" fill="#717171"/><rect x="6.2" y="0.5" width="2.6" height="2.6" fill="#717171"/><rect x="-6.5" y="5" width="13" height="2.8" fill="#717171"/></g></svg>
</div>
<svg class="ov" width="1920" height="1080"><path d="M882 192 L882 207" fill="none" stroke="#a4a4a4" stroke-width="2.8" stroke-linecap="round"/><path d="M1049 192 L1049 208" fill="none" stroke="#a4a4a4" stroke-width="2.8" stroke-linecap="round"/><path d="M882 229 L882 321" fill="none" stroke="#a4a4a4" stroke-width="2.8" stroke-linecap="round"/><path d="M1049 232 L1049 400" fill="none" stroke="#a4a4a4" stroke-width="2.8" stroke-linecap="round"/><path d="M892 229 C892 244 910 240 940 241 C 975 242 986 246 986 258" fill="none" stroke="#a4a4a4" stroke-width="2.8" stroke-linecap="round"/><path d="M1049 232 C1049 250 1000 246 960 244 C 920 242 905 244 905 255" fill="none" stroke="#a4a4a4" stroke-width="2.8" stroke-linecap="round"/><path d="M905 275 L905 281" fill="none" stroke="#a4a4a4" stroke-width="2.8" stroke-linecap="round"/><path d="M945 301 C952 310 956 316 958 321" fill="none" stroke="#a4a4a4" stroke-width="2.8" stroke-linecap="round"/><path d="M986 277 L986 293" fill="none" stroke="#a4a4a4" stroke-width="2.8" stroke-linecap="round"/><path d="M986 312 L986 321" fill="none" stroke="#a4a4a4" stroke-width="2.8" stroke-linecap="round"/><path d="M1049 306 C1049 316 990 308 986 321" fill="none" stroke="#a4a4a4" stroke-width="2.8" stroke-linecap="round"/><path d="M986 340 L986 345" fill="none" stroke="#a4a4a4" stroke-width="2.8" stroke-linecap="round"/><path d="M986 364 L986 376" fill="none" stroke="#a4a4a4" stroke-width="2.8" stroke-linecap="round"/><path d="M1049 364 C1049 374 990 366 986 376" fill="none" stroke="#a4a4a4" stroke-width="2.8" stroke-linecap="round"/><path d="M986 395 L986 412" fill="none" stroke="#a4a4a4" stroke-width="2.8" stroke-linecap="round"/><path d="M882 386 C882 402 920 394 945 396 C 968 398 971 404 971 412" fill="none" stroke="#a4a4a4" stroke-width="2.8" stroke-linecap="round"/><path d="M1049 400 C1049 418 1010 416 996 424" fill="none" stroke="#a4a4a4" stroke-width="2.8" stroke-linecap="round"/><path d="M971 431 L971 441" fill="none" stroke="#a4a4a4" stroke-width="2.8" stroke-linecap="round"/><path d="M986 431 C986 436 973 434 971 441" fill="none" stroke="#a4a4a4" stroke-width="2.8" stroke-linecap="round"/><path d="M971 460 L971 466" fill="none" stroke="#a4a4a4" stroke-width="2.8" stroke-linecap="round"/><path d="M971 485 L971 495" fill="none" stroke="#a4a4a4" stroke-width="2.8" stroke-linecap="round"/></svg>
<div class="nb" style="left:873px;top:162px;width:30px;height:30px;background:#2b2b2b;"><svg width="30" height="30" style="position:absolute;left:0;top:0"><path d="M8.1 18.0 L21.9 18.0 L15.0 26.4 Z" fill="#bfe4ea"/></svg><span style="left:0;width:30px;text-align:center;top:1.2px;font-size:13px;line-height:16.5px;font-weight:bold">1</span></div>
<div class="nb" style="left:1040px;top:162px;width:30px;height:30px;background:#2b2b2b;"><svg width="30" height="30" style="position:absolute;left:0;top:0"><path d="M8.1 18.0 L21.9 18.0 L15.0 26.4 Z" fill="#bfe4ea"/></svg><span style="left:0;width:30px;text-align:center;top:1.2px;font-size:13px;line-height:16.5px;font-weight:bold">2</span></div>
<div class="ob" style="left:873px;top:207px;width:30px;height:22px;"><b class="tb" style="height:4px"></b><b class="bb" style="height:4px"></b><span style="left:4px;top:3px;font-size:12px;line-height:16px">t b i</span><i class="in" style="left:6px"></i><i class="out" style="left:6px"></i><i class="out" style="left:16px"></i></div>
<div style="left:1040px;top:208px;width:24px;height:24px;background:#333;"><svg width="24" height="24" style="position:absolute;left:0;top:0"><circle cx="12.0" cy="12.0" r="7.92" fill="none" stroke="#5a5a5a" stroke-width="1.8"/></svg></div>
<div class="mg" style="left:896px;top:255px;width:30px;height:20px;border-radius:5px;"><span style="left:4px;top:0px;font-size:10px;line-height:20px">path</span></div>
<div class="ob" style="left:896px;top:281px;width:59px;height:20px;"><b class="tb" style="height:4px"></b><b class="bb" style="height:4px"></b><span style="left:4px;top:3px;font-size:10px;line-height:14px">thispatcher</span><i class="go" style="left:6px"></i><i class="in" style="left:6px"></i><i class="out" style="left:46px"></i></div>
<div class="ob" style="left:977px;top:258px;width:33px;height:19px;"><b class="tb" style="height:4px"></b><b class="bb" style="height:4px"></b><span style="left:4px;top:3px;font-size:10px;line-height:13px">+ 101</span><i class="gi" style="left:21px"></i><i class="in" style="left:6px"></i><i class="out" style="left:6px"></i></div>
<div class="mg" style="left:977px;top:293px;width:29px;height:19px;border-radius:5px;"><span style="left:4px;top:0px;font-size:9px;line-height:19px">m $1</span></div>
<div class="mg" style="left:1040px;top:287px;width:62px;height:19px;border-radius:5px;"><span style="left:4px;top:0px;font-size:9px;line-height:19px">separator /</span></div>
<div class="mg" style="left:873px;top:321px;width:94px;height:65px;border-radius:6px;"><span style="left:4px;top:4px;font-size:10px;line-height:11.25px">"Macintosh
HD:/Users/nagasm
/Documents/Max/P
rojects/EXPO2025/
dinergy/dinergy3/"</span></div>
<div class="ob" style="left:977px;top:321px;width:51px;height:19px;"><b class="tb" style="height:4px"></b><b class="bb" style="height:4px"></b><span style="left:4px;top:3px;font-size:9px;line-height:13px">tosymbol</span><i class="in" style="left:6px"></i><i class="out" style="left:6px"></i></div>
<div class="ob" style="left:977px;top:345px;width:59px;height:19px;"><b class="tb" style="height:4px"></b><b class="bb" style="height:4px"></b><span style="left:4px;top:3px;font-size:9px;line-height:13px">append mp4</span><i class="in" style="left:6px"></i><i class="out" style="left:6px"></i></div>
<div class="mg" style="left:1040px;top:345px;width:54px;height:19px;border-radius:5px;"><span style="left:4px;top:0px;font-size:9px;line-height:19px">separator .</span></div>
<div class="ob" style="left:977px;top:376px;width:51px;height:19px;"><b class="tb" style="height:4px"></b><b class="bb" style="height:4px"></b><span style="left:4px;top:3px;font-size:9px;line-height:13px">tosymbol</span><i class="in" style="left:6px"></i><i class="out" style="left:6px"></i></div>
<div class="mg" style="left:1040px;top:384px;width:49px;height:19px;border-radius:5px;"><span style="left:4px;top:0px;font-size:9px;line-height:19px">separator</span></div>
<div class="ob" style="left:962px;top:412px;width:34px;height:19px;"><b class="tb" style="height:4px"></b><b class="bb" style="height:4px"></b><span style="left:4px;top:3px;font-size:9px;line-height:13px">zl join</span><i class="go" style="left:21px"></i><i class="in" style="left:6px"></i><i class="in" style="left:21px"></i><i class="out" style="left:6px"></i></div>
<div class="ob" style="left:962px;top:441px;width:51px;height:19px;"><b class="tb" style="height:4px"></b><b class="bb" style="height:4px"></b><span style="left:4px;top:3px;font-size:9px;line-height:13px">tosymbol</span><i class="in" style="left:6px"></i><i class="out" style="left:6px"></i></div>
<div class="ob" style="left:962px;top:466px;width:64px;height:19px;"><b class="tb" style="height:4px"></b><b class="bb" style="height:4px"></b><span style="left:4px;top:3px;font-size:9px;line-height:13px">prepend read</span><i class="in" style="left:6px"></i><i class="out" style="left:6px"></i></div>
<div class="nb" style="left:962px;top:495px;width:30px;height:30px;background:#2b2b2b;"><svg width="30" height="30" style="position:absolute;left:0;top:0"><path d="M8.1 3.5999999999999996 L21.9 3.5999999999999996 L15.0 12.0 Z" fill="#bfe4ea"/></svg><span style="left:0;width:30px;text-align:center;top:12.0px;font-size:13px;line-height:16.5px;font-weight:bold">1</span></div>
<!-- w4 -->
<div class="win" style="left:734px;top:632px;width:461px;height:345px;background:#535353">
<div class="tbar" style="background:#f5f5f5;color:#b4b4b4;border-bottom:1px solid #e0e0e0">[time_room]</div>
<div class="tl" style="left:8px;background:#dcdcdc;box-shadow:inset 0 0 0 .5px rgba(0,0,0,.18);"><div style="left:4px;top:4px;width:4px;height:4px;border-radius:2px;background:#555"></div></div>
<div class="tl" style="left:28px;background:#dcdcdc;box-shadow:inset 0 0 0 .5px rgba(0,0,0,.18);"></div>
<div class="tl" style="left:48px;background:#dcdcdc;box-shadow:inset 0 0 0 .5px rgba(0,0,0,.18);"></div>
<div style="left:34px;top:56px;width:393px;height:256px;background:#e1e1e1"></div>
<svg class="ov" width="461" height="345"><text x="8" y="43.5" font-size="11" font-weight="bold" fill="#717171" font-family="Liberation Sans">100%</text><path d="M40 36.5h6l-3 4.5z" fill="#717171"/><g transform="translate(80 39) scale(1.0)"><rect x="-8.5" y="-7.5" width="17" height="15" fill="none" stroke="#717171" stroke-width="1.4"/><path d="M-8.5 -4.3H8.5M-8.5 4.3H8.5" stroke="#717171" stroke-width="1.4"/></g><g transform="translate(109 39) scale(1.0)"><path d="M-8.5 7.5V-5.5a2 2 0 0 1 2-2H8.5V7.5" fill="none" stroke="#717171" stroke-width="1.4"/><path d="M-8.5 7.5H8.5" stroke="#717171" stroke-width="1.4"/><path d="M-3.5 2.5L-2 -2.5M-0.5 2.5L1 -2.5M2.5 2.5L4 -2.5" stroke="#717171" stroke-width="1.2"/></g><g transform="translate(138 39) scale(1.0)"><path d="M-8.5 -6.5H8.5V3.5H4.5L5.5 7.5L0 3.5H-8.5Z" fill="#717171"/></g><g transform="translate(167 39) scale(1.0)"><rect x="-8" y="-8" width="16" height="16" fill="none" stroke="#717171" stroke-width="1.4"/><path d="M-4.5 -4.5L4.5 4.5M4.5 -4.5L-4.5 4.5" stroke="#717171" stroke-width="1.4"/></g><g transform="translate(196 39) scale(1.0)"><rect x="-8" y="-8" width="16" height="16" fill="none" stroke="#717171" stroke-width="1.4"/><circle r="3.8" fill="none" stroke="#717171" stroke-width="1.4"/><path d="M-3 12.5H3L0 15Z" fill="#717171" opacity=".7"/></g><g transform="translate(225 39) scale(1.0)"><rect x="-8" y="-8" width="16" height="16" fill="none" stroke="#717171" stroke-width="1.4"/><path d="M-5 -4L0.5 0L-5 4Z" fill="#717171"/><path d="M-3 12.5H3L0 15Z" fill="#717171" opacity=".7"/></g><g transform="translate(254 39) scale(1.0)"><rect x="-8" y="-8" width="16" height="16" fill="none" stroke="#717171" stroke-width="1.4"/><path d="M-8 0H8" stroke="#717171" stroke-width="1.6"/><path d="M-3 12.5H3L0 15Z" fill="#717171" opacity=".7"/></g><g transform="translate(283 39) scale(1.0)"><path d="M-4.5 7A8.3 8.3 0 1 1 4.5 7" fill="none" stroke="#717171" stroke-width="1.6"/><path d="M0 0.5L4 -4.5" stroke="#717171" stroke-width="1.6"/><path d="M-3 12.5H3L0 15Z" fill="#717171" opacity=".7"/></g><g transform="translate(312 39) scale(1.0)"><path d="M-6.5 0H6.5M0 -6.5V6.5" stroke="#717171" stroke-width="2.6"/><path d="M-3 12.5H3L0 15Z" fill="#717171" opacity=".7"/></g><g transform="translate(358 39) scale(1.0)"><path d="M-7.5 1L0 -6L7.5 1L0 8Z" fill="#717171"/><path d="M-3 -3.5L0 -8.5L3 -3.5" fill="none" stroke="#717171" stroke-width="1.3"/><path d="M8.5 2.5c1.5 2.5 2 3.5 0 5c-2-1.5-1.5-2.5 0-5Z" fill="#717171"/></g><g transform="translate(414 39) scale(1.1)"><rect x="-9.60" y="-8.40" width="1.7" height="1.7" fill="#717171"/><rect x="-7.15" y="-8.40" width="1.7" height="1.7" fill="#717171"/><rect x="-4.70" y="-8.40" width="1.7" height="1.7" fill="#717171"/><rect x="-2.25" y="-8.40" width="1.7" height="1.7" fill="#717171"/><rect x="0.20" y="-8.40" width="1.7" height="1.7" fill="#717171"/><rect x="2.65" y="-8.40" width="1.7" height="1.7" fill="#717171"/><rect x="5.10" y="-8.40" width="1.7" height="1.7" fill="#717171"/><rect x="7.55" y="-8.40" width="1.7" height="1.7" fill="#717171"/><rect x="-9.60" y="-5.95" width="1.7" height="1.7" fill="#717171"/><rect x="-7.15" y="-5.95" width="1.7" height="1.7" fill="#717171"/><rect x="-4.70" y="-5.95" width="1.7" height="1.7" fill="#717171"/><rect x="-2.25" y="-5.95" width="1.7" height="1.7" fill="#717171"/><rect x="0.20" y="-5.95" width="1.7" height="1.7" fill="#717171"/><rect x="2.65" y="-5.95" width="1.7" height="1.7" fill="#717171"/><rect x="5.10" y="-5.95" width="1.7" height="1.7" fill="#717171"/><rect x="7.55" y="-5.95" width="1.7" height="1.7" fill="#717171"/><rect x="-9.60" y="-3.50" width="1.7" height="1.7" fill="#717171"/><rect x="-7.15" y="-3.50" width="1.7" height="1.7" fill="#717171"/><rect x="-4.70" y="-3.50" width="1.7" height="1.7" fill="#717171"/><rect x="-2.25" y="-3.50" width="1.7" height="1.7" fill="#717171"/><rect x="0.20" y="-3.50" width="1.7" height="1.7" fill="#717171"/><rect x="2.65" y="-3.50" width="1.7" height="1.7" fill="#717171"/><rect x="5.10" y="-3.50" width="1.7" height="1.7" fill="#717171"/><rect x="7.55" y="-3.50" width="1.7" height="1.7" fill="#717171"/><rect x="-9.60" y="-1.05" width="1.7" height="1.7" fill="#717171"/><rect x="-7.15" y="-1.05" width="1.7" height="1.7" fill="#717171"/><rect x="-4.70" y="-1.05" width="1.7" height="1.7" fill="#717171"/><rect x="-2.25" y="-1.05" width="1.7" height="1.7" fill="#717171"/><rect x="0.20" y="-1.05" width="1.7" height="1.7" fill="#717171"/><rect x="2.65" y="-1.05" width="1.7" height="1.7" fill="#717171"/><rect x="5.10" y="-1.05" width="1.7" height="1.7" fill="#717171"/><rect x="7.55" y="-1.05" width="1.7" height="1.7" fill="#717171"/><rect x="-9.60" y="1.40" width="1.7" height="1.7" fill="#717171"/><rect x="-7.15" y="1.40" width="1.7" height="1.7" fill="#717171"/><rect x="-4.70" y="1.40" width="1.7" height="1.7" fill="#717171"/><rect x="-2.25" y="1.40" width="1.7" height="1.7" fill="#717171"/><rect x="0.20" y="1.40" width="1.7" height="1.7" fill="#717171"/><rect x="2.65" y="1.40" width="1.7" height="1.7" fill="#717171"/><rect x="5.10" y="1.40" width="1.7" height="1.7" fill="#717171"/><rect x="7.55" y="1.40" width="1.7" height="1.7" fill="#717171"/><rect x="-9.60" y="3.85" width="1.7" height="1.7" fill="#717171"/><rect x="-7.15" y="3.85" width="1.7" height="1.7" fill="#717171"/><rect x="-4.70" y="3.85" width="1.7" height="1.7" fill="#717171"/><rect x="-2.25" y="3.85" width="1.7" height="1.7" fill="#717171"/><rect x="0.20" y="3.85" width="1.7" height="1.7" fill="#717171"/><rect x="2.65" y="3.85" width="1.7" height="1.7" fill="#717171"/><rect x="5.10" y="3.85" width="1.7" height="1.7" fill="#717171"/><rect x="7.55" y="3.85" width="1.7" height="1.7" fill="#717171"/><rect x="-9.60" y="6.30" width="1.7" height="1.7" fill="#717171"/><rect x="-7.15" y="6.30" width="1.7" height="1.7" fill="#717171"/><rect x="-4.70" y="6.30" width="1.7" height="1.7" fill="#717171"/><rect x="-2.25" y="6.30" width="1.7" height="1.7" fill="#717171"/></g><g transform="translate(17 73) scale(1.0)"><path d="M0 -8.5L7.5 -4.5V4L0 8.5L-7.5 4V-4.5Z" fill="#717171"/><path d="M0 -0.5L7.5 -4.5M0 -0.5L-7.5 -4.5M0 -0.5V8.5" stroke="#000" stroke-opacity=".35" stroke-width="1.2" fill="none"/></g><g transform="translate(17 104) scale(1.0)"><circle r="8" fill="none" stroke="#717171" stroke-width="1.7"/><circle r="3.8" fill="none" stroke="#717171" stroke-width="1.7"/></g><g transform="translate(17 135) scale(1.0)"><rect x="-8.5" y="-6" width="17" height="12" fill="none" stroke="#717171" stroke-width="1.4"/><path d="M-8.5 -3H8.5M-8.5 3.5H8.5" stroke="#717171" stroke-width="1.2"/><path d="M-6 6V8M6 6V8" stroke="#717171" stroke-width="1.4"/></g><g transform="translate(17 166) scale(1.0)"><ellipse cx="-2.5" cy="6" rx="3.3" ry="2.6" fill="#717171"/><path d="M0 6V-8C2 -5 5.5 -4.5 5 0" fill="none" stroke="#717171" stroke-width="1.8"/></g><g transform="translate(17 197) scale(1.0)"><path d="M-2.5 -5L5 0L-2.5 5Z" fill="#717171"/><rect x="-8.5" y="-8" width="2.4" height="2.4" fill="#717171"/><rect x="6.5" y="-8" width="2.4" height="2.4" fill="#717171"/><rect x="-8.5" y="-3.5" width="2.4" height="2.4" fill="#717171"/><rect x="6.5" y="-3.5" width="2.4" height="2.4" fill="#717171"/><rect x="-8.5" y="1" width="2.4" height="2.4" fill="#717171"/><rect x="6.5" y="1" width="2.4" height="2.4" fill="#717171"/><rect x="-8.5" y="5.5" width="2.4" height="2.4" fill="#717171"/><rect x="6.5" y="5.5" width="2.4" height="2.4" fill="#717171"/></g><g transform="translate(17 228) scale(1.0)"><rect x="-8.5" y="-8" width="17" height="16" fill="none" stroke="#717171" stroke-width="1.4"/><path d="M-7 6L-3 -1L0 3L3 -3L7 6Z" fill="#717171"/><circle cx="-4.5" cy="-4.5" r="1.3" fill="#717171"/></g><g transform="translate(17 259) scale(1.0)"><path d="M-6 -3L2 5a3 3 0 0 0 4.5 -4.2L-2.5 -8.5a2.1 2.1 0 0 0 -3.2 3L2 2.5" fill="none" stroke="#717171" stroke-width="1.6" stroke-linecap="round"/></g><g transform="translate(17 290) scale(1.0)"><path d="M-3.5 -6H3V6H-3.5A6 6 0 0 1 -3.5 -6Z" fill="#717171"/><path d="M3 -3.2H8.5M3 3.2H8.5" stroke="#717171" stroke-width="2.2"/><path d="M-10 0H-7" stroke="#717171" stroke-width="2.6"/></g><g transform="translate(444 73) scale(1.0)"><circle cx="-2" cy="-2" r="5.6" fill="none" stroke="#717171" stroke-width="2.2"/><path d="M2.3 2.3L8 8" stroke="#717171" stroke-width="3" stroke-linecap="round"/></g><g transform="translate(444 104) scale(1.0)"><circle r="8.5" fill="#717171"/><text x="0.3" y="5.2" text-anchor="middle" font-family="Liberation Serif" font-style="italic" font-weight="bold" font-size="15" fill="#535353">i</text></g><g transform="translate(444 135) scale(1.0)"><rect x="-8.5" y="-7" width="7.8" height="14" fill="#717171"/><rect x="0.7" y="-7" width="7.8" height="14" fill="#717171"/></g><g transform="translate(444 166) scale(1.0)"><rect x="-8.5" y="-7.3" width="2" height="1.6" fill="#717171"/><rect x="-5" y="-7.3" width="13.5" height="1.6" fill="#717171"/><rect x="-8.5" y="-3.8" width="2" height="1.6" fill="#717171"/><rect x="-5" y="-3.8" width="13.5" height="1.6" fill="#717171"/><rect x="-8.5" y="-0.30000000000000004" width="2" height="1.6" fill="#717171"/><rect x="-5" y="-0.30000000000000004" width="13.5" height="1.6" fill="#717171"/><rect x="-8.5" y="3.2" width="2" height="1.6" fill="#717171"/><rect x="-5" y="3.2" width="13.5" height="1.6" fill="#717171"/><rect x="-8.5" y="6.7" width="2" height="1.6" fill="#717171"/><rect x="-5" y="6.7" width="13.5" height="1.6" fill="#717171"/></g><g transform="translate(444 205) scale(1.0)"><path d="M-8.5 -5H-3L-2 -7.5H4L5 -5H8.5V7.5H-8.5Z" fill="#717171"/><circle cx="2" cy="1.3" r="3.6" fill="#535353"/><circle cx="2" cy="1.3" r="2" fill="#717171"/><rect x="-7" y="-2.5" width="2.2" height="1.6" fill="#535353"/><rect x="-7" y="0.8" width="2.2" height="1.6" fill="#535353"/></g><g transform="translate(444 236) scale(1.0)"><path d="M-6 -8V8" stroke="#717171" stroke-width="1.8"/><circle cx="-6" cy="2" r="2.6" fill="#717171"/><path d="M0 -8V8" stroke="#717171" stroke-width="1.8"/><circle cx="0" cy="-3" r="2.6" fill="#717171"/><path d="M6 -8V8" stroke="#717171" stroke-width="1.8"/><circle cx="6" cy="1" r="2.6" fill="#717171"/></g><g transform="translate(16 328) scale(1.0)"><rect x="-6.5" y="-1" width="13" height="10" rx="1" fill="#717171"/><path d="M-4 -1V-4.5a4 4 0 0 1 8 0V-1" fill="none" stroke="#717171" stroke-width="2"/><rect x="-0.9" y="2" width="1.8" height="4" fill="#535353"/></g><g transform="translate(47 328) scale(1.0)"><path d="M8 -2V-8H-8V8H-1" fill="none" stroke="#717171" stroke-width="1.5"/><path d="M-2 -3L6 5L3 5.3L5 9L3.5 9.7L1.6 6L-1 8Z" fill="#717171"/></g><g transform="translate(85 328) scale(1.0)"><rect x="-8.5" y="-8" width="17" height="11" fill="#717171"/><path d="M0 3V5M-5.5 9L0 4.5L5.5 9" fill="none" stroke="#717171" stroke-width="1.7"/></g><g transform="translate(123 328) scale(1.0)"><rect x="-8.5" y="-6.5" width="11" height="8.5" fill="#717171"/><rect x="-3.5" y="-1.5" width="12" height="8.5" fill="#717171" stroke="#535353" stroke-width="1.2"/></g><g transform="translate(161 328) scale(1.0)"><path d="M-8 -3H-3.5L1 -6.5V6.5L-3.5 3H-8Z" fill="#717171"/><path d="M2.5 -3.5H8.5V3.5H2.5Z" fill="#717171"/><path d="M-5 -8L4 9" stroke="#717171" stroke-width="1.3"/></g><g transform="translate(191 328) scale(1.0)"><path d="M-8 -4.5H8M-8 0.5H8M-8 5.5H8M-4.5 -8V8M0.5 -8V8M5.5 -8V8" stroke="#717171" stroke-width="1.1" fill="none"/></g><g transform="translate(237 328) scale(1.0)"><g transform="translate(-1.5 1.5) scale(.8)"><path d="M-6 -3L2 5a3 3 0 0 0 4.5 -4.2L-2.5 -8.5a2.1 2.1 0 0 0 -3.2 3L2 2.5" fill="none" stroke="#717171" stroke-width="1.6" stroke-linecap="round"/></g><path d="M4 -6H9M6.5 -8.5V-3.5" stroke="#717171" stroke-width="1.5"/></g><g transform="translate(275 328) scale(1.0)"><path d="M-7.5 8L1 -0.5" stroke="#717171" stroke-width="3.4" stroke-linecap="round"/><path d="M6.6 -5.8A4.6 4.6 0 1 1 2.2 -8L4 -4.5Z" fill="#717171"/></g><g transform="translate(313 328) scale(1.0)"><rect x="-8" y="-8" width="16" height="16" fill="#717171"/><path d="M-3.6 -8V2.5M1 -8V2.5M5 -8V2.5" stroke="#535353" stroke-width="2.4"/><path d="M-2.7 2V8M2.7 2V8" stroke="#535353" stroke-width="0.9"/></g><g transform="translate(351 328) scale(1.0)"><rect x="-9.0" y="-7.5" width="2.6" height="2.6" fill="#717171"/><rect x="-5.2" y="-7.5" width="2.6" height="2.6" fill="#717171"/><rect x="-1.4" y="-7.5" width="2.6" height="2.6" fill="#717171"/><rect x="2.4" y="-7.5" width="2.6" height="2.6" fill="#717171"/><rect x="6.2" y="-7.5" width="2.6" height="2.6" fill="#717171"/><rect x="-8.1" y="-3.5" width="2.6" height="2.6" fill="#717171"/><rect x="-4.3" y="-3.5" width="2.6" height="2.6" fill="#717171"/><rect x="-0.5" y="-3.5" width="2.6" height="2.6" fill="#717171"/><rect x="3.3" y="-3.5" width="2.6" height="2.6" fill="#717171"/><rect x="7.1" y="-3.5" width="2.6" height="2.6" fill="#717171"/><rect x="-9.0" y="0.5" width="2.6" height="2.6" fill="#717171"/><rect x="-5.2" y="0.5" width="2.6" height="2.6" fill="#717171"/><rect x="-1.4" y="0.5" width="2.6" height="2.6" fill="#717171"/><rect x="2.4" y="0.5" width="2.6" height="2.6" fill="#717171"/><rect x="6.2" y="0.5" width="2.6" height="2.6" fill="#717171"/><rect x="-6.5" y="5" width="13" height="2.8" fill="#717171"/></g><g transform="translate(396 328) scale(1.0)"><circle r="9.5" fill="none" stroke="#717171" stroke-width="2.4" stroke-dasharray="11 3.9"/><path d="M-3 -5L5.5 0L-3 5Z" fill="#717171"/></g><g transform="translate(439 328) scale(1.0)"><path d="M-4.2 -5.6A7.2 7.2 0 1 0 4.2 -5.6" fill="none" stroke="#717171" stroke-width="2" stroke-linecap="round"/><path d="M0 -9V-1" stroke="#717171" stroke-width="2" stroke-linecap="round"/></g></svg>
</div>
<svg class="ov" width="1920" height="1080"><path d="M800 733 L800 743" fill="none" stroke="#a4a4a4" stroke-width="2.8" stroke-linecap="round"/><path d="M800 765 L800 770" fill="none" stroke="#a4a4a4" stroke-width="2.8" stroke-linecap="round"/><path d="M800 792 L800 869" fill="none" stroke="#a4a4a4" stroke-width="2.8" stroke-linecap="round"/><path d="M847 792 L847 828" fill="none" stroke="#a4a4a4" stroke-width="2.8" stroke-linecap="round"/><path d="M893.5 792 L893.5 828" fill="none" stroke="#a4a4a4" stroke-width="2.8" stroke-linecap="round"/><path d="M940 792 C940 812 890 808 860 810 C 820 812 800 814 800 828" fill="none" stroke="#a4a4a4" stroke-width="2.8" stroke-linecap="round"/><path d="M986.5 792 C986.5 812 936 806 936 828" fill="none" stroke="#a4a4a4" stroke-width="2.8" stroke-linecap="round"/><path d="M1033 792 C1033 812 992 806 992 828" fill="none" stroke="#a4a4a4" stroke-width="2.8" stroke-linecap="round"/><path d="M1079.5 792 C1079.5 810 1053 808 1053 828" fill="none" stroke="#a4a4a4" stroke-width="2.8" stroke-linecap="round"/><path d="M847 850 C847 860 827 858 797 859.5 L830 860 C806 860 800 862 800 869" fill="none" stroke="#a4a4a4" stroke-width="1.8" stroke-linecap="round"/><path d="M893.5 850 C893.5 860 873.5 858 843.5 859.5 L830 860 C806 860 800 862 800 869" fill="none" stroke="#a4a4a4" stroke-width="1.8" stroke-linecap="round"/><path d="M936 850 C936 860 916 858 886 859.5 L830 860 C806 860 800 862 800 869" fill="none" stroke="#a4a4a4" stroke-width="1.8" stroke-linecap="round"/><path d="M992 850 C992 860 972 858 942 859.5 L830 860 C806 860 800 862 800 869" fill="none" stroke="#a4a4a4" stroke-width="1.8" stroke-linecap="round"/><path d="M1053 850 C1053 860 1033 858 1003 859.5 L830 860 C806 860 800 862 800 869" fill="none" stroke="#a4a4a4" stroke-width="1.8" stroke-linecap="round"/><path d="M800 891 L800 901" fill="none" stroke="#a4a4a4" stroke-width="2.8" stroke-linecap="round"/></svg>
<div class="nb" style="left:791px;top:703px;width:30px;height:30px;background:#2b2b2b;"><svg width="30" height="30" style="position:absolute;left:0;top:0"><path d="M8.1 18.0 L21.9 18.0 L15.0 26.4 Z" fill="#bfe4ea"/></svg><span style="left:0;width:30px;text-align:center;top:1.2px;font-size:13px;line-height:16.5px;font-weight:bold">1</span></div>
<div class="nb" style="left:791px;top:743px;width:50px;height:22px;background:#333;"><svg style="position:absolute;left:0;top:0" width="50" height="22"><path d="M4 4.5 L10 11.0 L4 17.5 Z" fill="#777"/></svg><span style="left:13px;top:0;font-size:12px;line-height:22px;color:#fff">0</span></div>
<div class="ob" style="left:791px;top:770px;width:345px;height:22px;"><b class="tb" style="height:4px"></b><b class="bb" style="height:4px"></b><span style="left:4px;top:3px;font-size:12px;line-height:16px">select 0 1 2 3 4 5 6</span><i class="in" style="left:6px"></i><i class="out" style="left:6px"></i><i class="out" style="left:53px"></i><i class="out" style="left:99.5px"></i><i class="out" style="left:146px"></i><i class="out" style="left:192.5px"></i><i class="out" style="left:239px"></i><i class="out" style="left:285.5px"></i></div>
<div class="mg" style="left:791px;top:828px;width:39px;height:22px;border-radius:5px;"><span style="left:4px;top:0px;font-size:12px;line-height:22px">10.54</span></div>
<div class="mg" style="left:838px;top:828px;width:39px;height:22px;border-radius:5px;"><span style="left:4px;top:0px;font-size:12px;line-height:22px">10.36</span></div>
<div class="mg" style="left:884px;top:828px;width:39px;height:22px;border-radius:5px;"><span style="left:4px;top:0px;font-size:12px;line-height:22px">10.35</span></div>
<div class="mg" style="left:927px;top:828px;width:39px;height:22px;border-radius:5px;"><span style="left:4px;top:0px;font-size:12px;line-height:22px">10.58</span></div>
<div class="mg" style="left:983px;top:828px;width:39px;height:22px;border-radius:5px;"><span style="left:4px;top:0px;font-size:12px;line-height:22px">10.44</span></div>
<div class="mg" style="left:1044px;top:828px;width:32px;height:22px;border-radius:5px;"><span style="left:4px;top:0px;font-size:12px;line-height:22px">8.44</span></div>
<div class="nb" style="left:791px;top:869px;width:50px;height:22px;background:#333;"><svg style="position:absolute;left:0;top:0" width="50" height="22"><path d="M4 4.5 L10 11.0 L4 17.5 Z" fill="#777"/></svg><span style="left:13px;top:0;font-size:12px;line-height:22px;color:#fff">0.</span></div>
<div class="nb" style="left:791px;top:901px;width:30px;height:30px;background:#2b2b2b;"><svg width="30" height="30" style="position:absolute;left:0;top:0"><path d="M8.1 3.5999999999999996 L21.9 3.5999999999999996 L15.0 12.0 Z" fill="#bfe4ea"/></svg><span style="left:0;width:30px;text-align:center;top:12.0px;font-size:13px;line-height:16.5px;font-weight:bold">1</span></div>
<div style="left:844px;top:770px;width:6px;height:3px;background:#9a9a9a;border-radius:0 0 3px 3px;"></div>
<div style="left:890.5px;top:770px;width:6px;height:3px;background:#9a9a9a;border-radius:0 0 3px 3px;"></div>
<div style="left:937px;top:770px;width:6px;height:3px;background:#9a9a9a;border-radius:0 0 3px 3px;"></div>
<div style="left:983.5px;top:770px;width:6px;height:3px;background:#9a9a9a;border-radius:0 0 3px 3px;"></div>
<div style="left:1030px;top:770px;width:6px;height:3px;background:#9a9a9a;border-radius:0 0 3px 3px;"></div>
<div style="left:1076.5px;top:770px;width:6px;height:3px;background:#9a9a9a;border-radius:0 0 3px 3px;"></div>
<div style="left:1123px;top:770px;width:6px;height:3px;background:#9a9a9a;border-radius:0 0 3px 3px;"></div>
<div style="left:1123px;top:788px;width:6px;height:3px;background:#9a9a9a;border-radius:3px 3px 0 0;"></div>
<!-- w6 -->
<div class="win" style="left:1429px;top:859px;width:306px;height:157px;background:#4e4e4e;overflow:hidden">
<div class="tbar" style="background:linear-gradient(180deg,#f2f2f2,#dedede);color:#9c9c9c;font-size:13px">Max Console</div>
<div class="tl" style="left:8px;background:#dcdcdc;box-shadow:inset 0 0 0 .5px rgba(0,0,0,.18)"></div>
<div class="tl" style="left:28px;background:#dcdcdc;box-shadow:inset 0 0 0 .5px rgba(0,0,0,.18)"></div>
<div class="tl" style="left:48px;background:#dcdcdc;box-shadow:inset 0 0 0 .5px rgba(0,0,0,.18)"></div>
<div style="left:0;top:22px;width:306px;height:34px;background:#4e4e4e"></div>
<div style="left:0;top:56px;width:306px;height:20px;background:#3d3d3d"></div>
<div style="left:0;top:76px;width:306px;height:20px;background:#363636"></div>
<div style="left:0;top:96px;width:306px;height:20px;background:#3d3d3d"></div>
<div style="left:0;top:116px;width:306px;height:7px;background:#363636"></div>
<div style="left:0;top:123px;width:306px;height:34px;background:#505050"></div>
<div style="left:132px;top:32px;font-size:12.5px;color:#b0b0b0;-webkit-text-stroke-width:.3px;line-height:16px">Filter</div>
<svg class="ov" width="306" height="157"><g transform="translate(122 40) scale(0.78)"><circle cx="-2" cy="-2" r="5.6" fill="none" stroke="#ececec" stroke-width="2.2"/><path d="M2.3 2.3L8 8" stroke="#ececec" stroke-width="3" stroke-linecap="round"/></g><path d="M286 39H297M291.5 33.5V44.5" stroke="#8a8a8a" stroke-width="1.6"/><g transform="translate(18 140) scale(0.95)"><path d="M-6.5 -6.5L6.5 6.5M6.5 -6.5L-6.5 6.5" stroke="#808080" stroke-width="2.4"/></g><g transform="translate(72 140) scale(0.95)"><circle r="7.5" fill="#808080"/><path d="M0 -5V0.5H4.5" stroke="#505050" stroke-width="1.6" fill="none"/></g><g transform="translate(109 141) scale(0.9)"><path d="M0 -8L8 7.5H-8Z" fill="#808080"/><path d="M0 -3V2.5M0 4V5.8" stroke="#505050" stroke-width="1.6"/></g><g transform="translate(146 140) scale(0.85)"><path d="M-5 -8H5M-5 -4.5H5M-5 -1H5" stroke="#808080" stroke-width="2"/><path d="M-7 2H7L0 8.5Z" fill="#808080"/></g><g transform="translate(200 140) scale(0.85)"><path d="M-8.5 0L-1.5 -6.5V-3H8V3H-1.5V6.5Z" fill="#808080"/></g></svg>
</div>
<!-- w1 -->
<div class="win" style="left:16px;top:3px;width:749px;height:550px;background:#535353">
<div class="tbar" style="background:#f5f5f5;color:#b4b4b4;border-bottom:1px solid #e0e0e0"><span style="display:inline-block;width:9px;height:10px;background:#aaa;border-radius:1px;margin-right:7px;vertical-align:-1px;box-shadow:inset 0 0 0 2px #aaa, inset 0 0 0 3px #f5f5f5"></span>dinergy3_15</div>
<div class="tl" style="left:8px;background:#dcdcdc;box-shadow:inset 0 0 0 .5px rgba(0,0,0,.18);"><div style="left:4px;top:4px;width:4px;height:4px;border-radius:2px;background:#555"></div></div>
<div class="tl" style="left:28px;background:#dcdcdc;box-shadow:inset 0 0 0 .5px rgba(0,0,0,.18);"></div>
<div class="tl" style="left:48px;background:#dcdcdc;box-shadow:inset 0 0 0 .5px rgba(0,0,0,.18);"></div>
<div style="left:34px;top:56px;width:681px;height:460px;background:#e1e1e1"></div>
<svg class="ov" width="749" height="550"><text x="8" y="43.5" font-size="11" font-weight="bold" fill="#717171" font-family="Liberation Sans">100%</text><path d="M40 36.5h6l-3 4.5z" fill="#717171"/><g transform="translate(80 39) scale(1.0)"><rect x="-8.5" y="-7.5" width="17" height="15" fill="none" stroke="#717171" stroke-width="1.4"/><path d="M-8.5 -4.3H8.5M-8.5 4.3H8.5" stroke="#717171" stroke-width="1.4"/></g><g transform="translate(109 39) scale(1.0)"><path d="M-8.5 7.5V-5.5a2 2 0 0 1 2-2H8.5V7.5" fill="none" stroke="#717171" stroke-width="1.4"/><path d="M-8.5 7.5H8.5" stroke="#717171" stroke-width="1.4"/><path d="M-3.5 2.5L-2 -2.5M-0.5 2.5L1 -2.5M2.5 2.5L4 -2.5" stroke="#717171" stroke-width="1.2"/></g><g transform="translate(138 39) scale(1.0)"><path d="M-8.5 -6.5H8.5V3.5H4.5L5.5 7.5L0 3.5H-8.5Z" fill="#717171"/></g><g transform="translate(167 39) scale(1.0)"><rect x="-8" y="-8" width="16" height="16" fill="none" stroke="#717171" stroke-width="1.4"/><path d="M-4.5 -4.5L4.5 4.5M4.5 -4.5L-4.5 4.5" stroke="#717171" stroke-width="1.4"/></g><g transform="translate(196 39) scale(1.0)"><rect x="-8" y="-8" width="16" height="16" fill="none" stroke="#717171" stroke-width="1.4"/><circle r="3.8" fill="none" stroke="#717171" stroke-width="1.4"/><path d="M-3 12.5H3L0 15Z" fill="#717171" opacity=".7"/></g><g transform="translate(225 39) scale(1.0)"><rect x="-8" y="-8" width="16" height="16" fill="none" stroke="#717171" stroke-width="1.4"/><path d="M-5 -4L0.5 0L-5 4Z" fill="#717171"/><path d="M-3 12.5H3L0 15Z" fill="#717171" opacity=".7"/></g><g transform="translate(254 39) scale(1.0)"><rect x="-8" y="-8" width="16" height="16" fill="none" stroke="#717171" stroke-width="1.4"/><path d="M-8 0H8" stroke="#717171" stroke-width="1.6"/><path d="M-3 12.5H3L0 15Z" fill="#717171" opacity=".7"/></g><g transform="translate(283 39) scale(1.0)"><path d="M-4.5 7A8.3 8.3 0 1 1 4.5 7" fill="none" stroke="#717171" stroke-width="1.6"/><path d="M0 0.5L4 -4.5" stroke="#717171" stroke-width="1.6"/><path d="M-3 12.5H3L0 15Z" fill="#717171" opacity=".7"/></g><g transform="translate(312 39) scale(1.0)"><path d="M-6.5 0H6.5M0 -6.5V6.5" stroke="#717171" stroke-width="2.6"/><path d="M-3 12.5H3L0 15Z" fill="#717171" opacity=".7"/></g><g transform="translate(358 39) scale(1.0)"><path d="M-7.5 1L0 -6L7.5 1L0 8Z" fill="#717171"/><path d="M-3 -3.5L0 -8.5L3 -3.5" fill="none" stroke="#717171" stroke-width="1.3"/><path d="M8.5 2.5c1.5 2.5 2 3.5 0 5c-2-1.5-1.5-2.5 0-5Z" fill="#717171"/></g><g transform="translate(702 39) scale(1.1)"><rect x="-9.60" y="-8.40" width="1.7" height="1.7" fill="#717171"/><rect x="-7.15" y="-8.40" width="1.7" height="1.7" fill="#717171"/><rect x="-4.70" y="-8.40" width="1.7" height="1.7" fill="#717171"/><rect x="-2.25" y="-8.40" width="1.7" height="1.7" fill="#717171"/><rect x="0.20" y="-8.40" width="1.7" height="1.7" fill="#717171"/><rect x="2.65" y="-8.40" width="1.7" height="1.7" fill="#717171"/><rect x="5.10" y="-8.40" width="1.7" height="1.7" fill="#717171"/><rect x="7.55" y="-8.40" width="1.7" height="1.7" fill="#717171"/><rect x="-9.60" y="-5.95" width="1.7" height="1.7" fill="#717171"/><rect x="-7.15" y="-5.95" width="1.7" height="1.7" fill="#717171"/><rect x="-4.70" y="-5.95" width="1.7" height="1.7" fill="#717171"/><rect x="-2.25" y="-5.95" width="1.7" height="1.7" fill="#717171"/><rect x="0.20" y="-5.95" width="1.7" height="1.7" fill="#717171"/><rect x="2.65" y="-5.95" width="1.7" height="1.7" fill="#717171"/><rect x="5.10" y="-5.95" width="1.7" height="1.7" fill="#717171"/><rect x="7.55" y="-5.95" width="1.7" height="1.7" fill="#717171"/><rect x="-9.60" y="-3.50" width="1.7" height="1.7" fill="#717171"/><rect x="-7.15" y="-3.50" width="1.7" height="1.7" fill="#717171"/><rect x="-4.70" y="-3.50" width="1.7" height="1.7" fill="#717171"/><rect x="-2.25" y="-3.50" width="1.7" height="1.7" fill="#717171"/><rect x="0.20" y="-3.50" width="1.7" height="1.7" fill="#717171"/><rect x="2.65" y="-3.50" width="1.7" height="1.7" fill="#717171"/><rect x="5.10" y="-3.50" width="1.7" height="1.7" fill="#717171"/><rect x="7.55" y="-3.50" width="1.7" height="1.7" fill="#717171"/><rect x="-9.60" y="-1.05" width="1.7" height="1.7" fill="#717171"/><rect x="-7.15" y="-1.05" width="1.7" height="1.7" fill="#717171"/><rect x="-4.70" y="-1.05" width="1.7" height="1.7" fill="#717171"/><rect x="-2.25" y="-1.05" width="1.7" height="1.7" fill="#717171"/><rect x="0.20" y="-1.05" width="1.7" height="1.7" fill="#717171"/><rect x="2.65" y="-1.05" width="1.7" height="1.7" fill="#717171"/><rect x="5.10" y="-1.05" width="1.7" height="1.7" fill="#717171"/><rect x="7.55" y="-1.05" width="1.7" height="1.7" fill="#717171"/><rect x="-9.60" y="1.40" width="1.7" height="1.7" fill="#717171"/><rect x="-7.15" y="1.40" width="1.7" height="1.7" fill="#717171"/><rect x="-4.70" y="1.40" width="1.7" height="1.7" fill="#717171"/><rect x="-2.25" y="1.40" width="1.7" height="1.7" fill="#717171"/><rect x="0.20" y="1.40" width="1.7" height="1.7" fill="#717171"/><rect x="2.65" y="1.40" width="1.7" height="1.7" fill="#717171"/><rect x="5.10" y="1.40" width="1.7" height="1.7" fill="#717171"/><rect x="7.55" y="1.40" width="1.7" height="1.7" fill="#717171"/><rect x="-9.60" y="3.85" width="1.7" height="1.7" fill="#717171"/><rect x="-7.15" y="3.85" width="1.7" height="1.7" fill="#717171"/><rect x="-4.70" y="3.85" width="1.7" height="1.7" fill="#717171"/><rect x="-2.25" y="3.85" width="1.7" height="1.7" fill="#717171"/><rect x="0.20" y="3.85" width="1.7" height="1.7" fill="#717171"/><rect x="2.65" y="3.85" width="1.7" height="1.7" fill="#717171"/><rect x="5.10" y="3.85" width="1.7" height="1.7" fill="#717171"/><rect x="7.55" y="3.85" width="1.7" height="1.7" fill="#717171"/><rect x="-9.60" y="6.30" width="1.7" height="1.7" fill="#717171"/><rect x="-7.15" y="6.30" width="1.7" height="1.7" fill="#717171"/><rect x="-4.70" y="6.30" width="1.7" height="1.7" fill="#717171"/><rect x="-2.25" y="6.30" width="1.7" height="1.7" fill="#717171"/></g><g transform="translate(17 92.0) scale(1.0)"><path d="M0 -8.5L7.5 -4.5V4L0 8.5L-7.5 4V-4.5Z" fill="#717171"/><path d="M0 -0.5L7.5 -4.5M0 -0.5L-7.5 -4.5M0 -0.5V8.5" stroke="#000" stroke-opacity=".35" stroke-width="1.2" fill="none"/></g><g transform="translate(17 129.0) scale(1.0)"><circle r="8" fill="none" stroke="#717171" stroke-width="1.7"/><circle r="3.8" fill="none" stroke="#717171" stroke-width="1.7"/></g><g transform="translate(17 166.0) scale(1.0)"><rect x="-8.5" y="-6" width="17" height="12" fill="none" stroke="#717171" stroke-width="1.4"/><path d="M-8.5 -3H8.5M-8.5 3.5H8.5" stroke="#717171" stroke-width="1.2"/><path d="M-6 6V8M6 6V8" stroke="#717171" stroke-width="1.4"/></g><g transform="translate(17 203.0) scale(1.0)"><ellipse cx="-2.5" cy="6" rx="3.3" ry="2.6" fill="#717171"/><path d="M0 6V-8C2 -5 5.5 -4.5 5 0" fill="none" stroke="#717171" stroke-width="1.8"/></g><g transform="translate(17 240.0) scale(1.0)"><path d="M-2.5 -5L5 0L-2.5 5Z" fill="#717171"/><rect x="-8.5" y="-8" width="2.4" height="2.4" fill="#717171"/><rect x="6.5" y="-8" width="2.4" height="2.4" fill="#717171"/><rect x="-8.5" y="-3.5" width="2.4" height="2.4" fill="#717171"/><rect x="6.5" y="-3.5" width="2.4" height="2.4" fill="#717171"/><rect x="-8.5" y="1" width="2.4" height="2.4" fill="#717171"/><rect x="6.5" y="1" width="2.4" height="2.4" fill="#717171"/><rect x="-8.5" y="5.5" width="2.4" height="2.4" fill="#717171"/><rect x="6.5" y="5.5" width="2.4" height="2.4" fill="#717171"/></g><g transform="translate(17 277.0) scale(1.0)"><rect x="-8.5" y="-8" width="17" height="16" fill="none" stroke="#717171" stroke-width="1.4"/><path d="M-7 6L-3 -1L0 3L3 -3L7 6Z" fill="#717171"/><circle cx="-4.5" cy="-4.5" r="1.3" fill="#717171"/></g><g transform="translate(17 314.0) scale(1.0)"><path d="M-6 -3L2 5a3 3 0 0 0 4.5 -4.2L-2.5 -8.5a2.1 2.1 0 0 0 -3.2 3L2 2.5" fill="none" stroke="#717171" stroke-width="1.6" stroke-linecap="round"/></g><g transform="translate(17 351.0) scale(1.0)"><path d="M-3.5 -6H3V6H-3.5A6 6 0 0 1 -3.5 -6Z" fill="#717171"/><path d="M3 -3.2H8.5M3 3.2H8.5" stroke="#717171" stroke-width="2.2"/><path d="M-10 0H-7" stroke="#717171" stroke-width="2.6"/></g><g transform="translate(17 388.0) scale(1.0)"><circle r="8.5" fill="#717171"/><text x="0" y="4.5" text-anchor="middle" font-family="Liberation Serif" font-style="italic" font-weight="bold" font-size="14" fill="#535353">v</text></g><g transform="translate(17 425.0) scale(1.0)"><circle r="8.5" fill="#717171"/><text x="0" y="4.8" text-anchor="middle" font-family="Liberation Serif" font-style="italic" font-weight="bold" font-size="14" fill="#535353">b</text></g><g transform="translate(17 462.0) scale(1.0)"><polygon points="0.00,-8.20 2.17,-2.19 8.56,-1.98 3.52,1.94 5.29,8.08 0.00,4.50 -5.29,8.08 -3.52,1.94 -8.56,-1.98 -2.17,-2.19" fill="#717171"/></g><g transform="translate(732 90) scale(1.0)"><circle cx="-2" cy="-2" r="5.6" fill="none" stroke="#717171" stroke-width="2.2"/><path d="M2.3 2.3L8 8" stroke="#717171" stroke-width="3" stroke-linecap="round"/></g><g transform="translate(732 136) scale(1.0)"><circle r="8.5" fill="#717171"/><text x="0.3" y="5.2" text-anchor="middle" font-family="Liberation Serif" font-style="italic" font-weight="bold" font-size="15" fill="#535353">i</text></g><g transform="translate(732 182) scale(1.0)"><rect x="-8.5" y="-7" width="7.8" height="14" fill="#717171"/><rect x="0.7" y="-7" width="7.8" height="14" fill="#717171"/></g><g transform="translate(732 228) scale(1.0)"><rect x="-8.5" y="-7.3" width="2" height="1.6" fill="#717171"/><rect x="-5" y="-7.3" width="13.5" height="1.6" fill="#717171"/><rect x="-8.5" y="-3.8" width="2" height="1.6" fill="#717171"/><rect x="-5" y="-3.8" width="13.5" height="1.6" fill="#717171"/><rect x="-8.5" y="-0.30000000000000004" width="2" height="1.6" fill="#717171"/><rect x="-5" y="-0.30000000000000004" width="13.5" height="1.6" fill="#717171"/><rect x="-8.5" y="3.2" width="2" height="1.6" fill="#717171"/><rect x="-5" y="3.2" width="13.5" height="1.6" fill="#717171"/><rect x="-8.5" y="6.7" width="2" height="1.6" fill="#717171"/><rect x="-5" y="6.7" width="13.5" height="1.6" fill="#717171"/></g><g transform="translate(732 309) scale(1.0)"><path d="M-8.5 -5H-3L-2 -7.5H4L5 -5H8.5V7.5H-8.5Z" fill="#717171"/><circle cx="2" cy="1.3" r="3.6" fill="#535353"/><circle cx="2" cy="1.3" r="2" fill="#717171"/><rect x="-7" y="-2.5" width="2.2" height="1.6" fill="#535353"/><rect x="-7" y="0.8" width="2.2" height="1.6" fill="#535353"/></g><g transform="translate(732 354) scale(1.0)"><path d="M-6 -8V8" stroke="#717171" stroke-width="1.8"/><circle cx="-6" cy="2" r="2.6" fill="#717171"/><path d="M0 -8V8" stroke="#717171" stroke-width="1.8"/><circle cx="0" cy="-3" r="2.6" fill="#717171"/><path d="M6 -8V8" stroke="#717171" stroke-width="1.8"/><circle cx="6" cy="1" r="2.6" fill="#717171"/></g><rect x="723" y="407" width="6" height="2" fill="#707070"/><rect x="723" y="410" width="6" height="2" fill="#707070"/><rect x="723" y="413" width="6" height="2" fill="#707070"/><rect x="723" y="416" width="6" height="2" fill="#707070"/><rect x="723" y="419" width="6" height="2" fill="#707070"/><rect x="723" y="422" width="6" height="2" fill="#707070"/><rect x="723" y="425" width="6" height="2" fill="#707070"/><rect x="723" y="428" width="6" height="2" fill="#707070"/><rect x="723" y="431" width="6" height="2" fill="#707070"/><rect x="723" y="434" width="6" height="2" fill="#707070"/><rect x="723" y="437" width="6" height="2" fill="#707070"/><rect x="723" y="440" width="6" height="2" fill="#707070"/><rect x="723" y="443" width="6" height="2" fill="#707070"/><rect x="723" y="446" width="6" height="2" fill="#707070"/><rect x="723" y="449" width="6" height="2" fill="#707070"/><rect x="723" y="452" width="6" height="2" fill="#707070"/><rect x="723" y="455" width="6" height="2" fill="#707070"/><rect x="723" y="458" width="6" height="2" fill="#707070"/><rect x="723" y="461" width="6" height="2" fill="#707070"/><rect x="723" y="464" width="6" height="2" fill="#707070"/><rect x="723" y="467" width="6" height="2" fill="#707070"/><rect x="723" y="470" width="6" height="2" fill="#707070"/><rect x="723" y="473" width="6" height="2" fill="#707070"/><rect x="723" y="476" width="6" height="2" fill="#707070"/><rect x="723" y="479" width="6" height="2" fill="#707070"/><rect x="723" y="482" width="6" height="2" fill="#707070"/><rect x="723" y="485" width="6" height="2" fill="#707070"/><rect x="723" y="488" width="6" height="2" fill="#707070"/><rect x="723" y="491" width="6" height="2" fill="#707070"/><rect x="723" y="494" width="6" height="2" fill="#707070"/><rect x="723" y="497" width="6" height="2" fill="#707070"/><rect x="723" y="500" width="6" height="2" fill="#707070"/><rect x="723" y="503" width="6" height="2" fill="#707070"/><rect x="723" y="506" width="6" height="2" fill="#707070"/><rect x="723" y="509" width="6" height="2" fill="#707070"/><rect x="723" y="512" width="6" height="2" fill="#707070"/><rect x="734" y="407" width="6" height="2" fill="#707070"/><rect x="734" y="410" width="6" height="2" fill="#707070"/><rect x="734" y="413" width="6" height="2" fill="#707070"/><rect x="734" y="416" width="6" height="2" fill="#707070"/><rect x="734" y="419" width="6" height="2" fill="#707070"/><rect x="734" y="422" width="6" height="2" fill="#707070"/><rect x="734" y="425" width="6" height="2" fill="#707070"/><rect x="734" y="428" width="6" height="2" fill="#707070"/><rect x="734" y="431" width="6" height="2" fill="#707070"/><rect x="734" y="434" width="6" height="2" fill="#707070"/><rect x="734" y="437" width="6" height="2" fill="#707070"/><rect x="734" y="440" width="6" height="2" fill="#707070"/><rect x="734" y="443" width="6" height="2" fill="#707070"/><rect x="734" y="446" width="6" height="2" fill="#707070"/><rect x="734" y="449" width="6" height="2" fill="#707070"/><rect x="734" y="452" width="6" height="2" fill="#707070"/><rect x="734" y="455" width="6" height="2" fill="#707070"/><rect x="734" y="458" width="6" height="2" fill="#707070"/><rect x="734" y="461" width="6" height="2" fill="#707070"/><rect x="734" y="464" width="6" height="2" fill="#707070"/><rect x="734" y="467" width="6" height="2" fill="#707070"/><rect x="734" y="470" width="6" height="2" fill="#707070"/><rect x="734" y="473" width="6" height="2" fill="#707070"/><rect x="734" y="476" width="6" height="2" fill="#707070"/><rect x="734" y="479" width="6" height="2" fill="#707070"/><rect x="734" y="482" width="6" height="2" fill="#707070"/><rect x="734" y="485" width="6" height="2" fill="#707070"/><rect x="734" y="488" width="6" height="2" fill="#707070"/><rect x="734" y="491" width="6" height="2" fill="#707070"/><rect x="734" y="494" width="6" height="2" fill="#707070"/><rect x="734" y="497" width="6" height="2" fill="#707070"/><rect x="734" y="500" width="6" height="2" fill="#707070"/><rect x="734" y="503" width="6" height="2" fill="#707070"/><rect x="734" y="506" width="6" height="2" fill="#707070"/><rect x="734" y="509" width="6" height="2" fill="#707070"/><rect x="734" y="512" width="6" height="2" fill="#707070"/><rect x="724" y="405" width="5" height="30" fill="#707070"/><rect x="735" y="405" width="5" height="30" fill="#707070"/><rect x="725" y="429" width="14" height="7" rx="3" fill="#7a7a7a"/><g transform="translate(17 533) scale(1.0)"><rect x="-6.5" y="-1" width="13" height="10" rx="1" fill="#717171"/><path d="M-4 -1V-4.5a4 4 0 0 1 8 0V-1" fill="none" stroke="#717171" stroke-width="2"/><rect x="-0.9" y="2" width="1.8" height="4" fill="#535353"/></g><g transform="translate(48 533) scale(1.0)"><path d="M8 -2V-8H-8V8H-1" fill="none" stroke="#717171" stroke-width="1.5"/><path d="M-2 -3L6 5L3 5.3L5 9L3.5 9.7L1.6 6L-1 8Z" fill="#717171"/></g><g transform="translate(94 533) scale(1.0)"><rect x="-8.5" y="-8" width="17" height="11" fill="#717171"/><path d="M0 3V5M-5.5 9L0 4.5L5.5 9" fill="none" stroke="#717171" stroke-width="1.7"/></g><g transform="translate(140 533) scale(1.0)"><rect x="-8.5" y="-6.5" width="11" height="8.5" fill="#717171"/><rect x="-3.5" y="-1.5" width="12" height="8.5" fill="#717171" stroke="#535353" stroke-width="1.2"/></g><g transform="translate(186 533) scale(1.0)"><path d="M-8 -3H-3.5L1 -6.5V6.5L-3.5 3H-8Z" fill="#717171"/><path d="M2.5 -3.5H8.5V3.5H2.5Z" fill="#717171"/><path d="M-5 -8L4 9" stroke="#717171" stroke-width="1.3"/></g><g transform="translate(216 533) scale(1.0)"><path d="M-8 -4.5H8M-8 0.5H8M-8 5.5H8M-4.5 -8V8M0.5 -8V8M5.5 -8V8" stroke="#717171" stroke-width="1.1" fill="none"/></g><g transform="translate(278 533) scale(1.0)"><g transform="translate(-1.5 1.5) scale(.8)"><path d="M-6 -3L2 5a3 3 0 0 0 4.5 -4.2L-2.5 -8.5a2.1 2.1 0 0 0 -3.2 3L2 2.5" fill="none" stroke="#717171" stroke-width="1.6" stroke-linecap="round"/></g><path d="M4 -6H9M6.5 -8.5V-3.5" stroke="#717171" stroke-width="1.5"/></g><g transform="translate(324 533) scale(1.0)"><path d="M-7.5 8L1 -0.5" stroke="#717171" stroke-width="3.4" stroke-linecap="round"/><path d="M6.6 -5.8A4.6 4.6 0 1 1 2.2 -8L4 -4.5Z" fill="#717171"/></g><g transform="translate(370 533) scale(1.0)"><rect x="-8" y="-8" width="16" height="16" fill="#717171"/><path d="M-3.6 -8V2.5M1 -8V2.5M5 -8V2.5" stroke="#535353" stroke-width="2.4"/><path d="M-2.7 2V8M2.7 2V8" stroke="#535353" stroke-width="0.9"/></g><g transform="translate(416 533) scale(1.0)"><rect x="-9.0" y="-7.5" width="2.6" height="2.6" fill="#717171"/><rect x="-5.2" y="-7.5" width="2.6" height="2.6" fill="#717171"/><rect x="-1.4" y="-7.5" width="2.6" height="2.6" fill="#717171"/><rect x="2.4" y="-7.5" width="2.6" height="2.6" fill="#717171"/><rect x="6.2" y="-7.5" width="2.6" height="2.6" fill="#717171"/><rect x="-8.1" y="-3.5" width="2.6" height="2.6" fill="#717171"/><rect x="-4.3" y="-3.5" width="2.6" height="2.6" fill="#717171"/><rect x="-0.5" y="-3.5" width="2.6" height="2.6" fill="#717171"/><rect x="3.3" y="-3.5" width="2.6" height="2.6" fill="#717171"/><rect x="7.1" y="-3.5" width="2.6" height="2.6" fill="#717171"/><rect x="-9.0" y="0.5" width="2.6" height="2.6" fill="#717171"/><rect x="-5.2" y="0.5" width="2.6" height="2.6" fill="#717171"/><rect x="-1.4" y="0.5" width="2.6" height="2.6" fill="#717171"/><rect x="2.4" y="0.5" width="2.6" height="2.6" fill="#717171"/><rect x="6.2" y="0.5" width="2.6" height="2.6" fill="#717171"/><rect x="-6.5" y="5" width="13" height="2.8" fill="#717171"/></g><g transform="translate(732 533) scale(1.0)"><path d="M-4.2 -5.6A7.2 7.2 0 1 0 4.2 -5.6" fill="none" stroke="#717171" stroke-width="2" stroke-linecap="round"/><path d="M0 -9V-1" stroke="#717171" stroke-width="2" stroke-linecap="round"/></g></svg>
</div>
<svg class="ov" width="1920" height="1080"><path d="M552 117 L552 475" fill="none" stroke="#a4a4a4" stroke-width="2.8" stroke-linecap="round"/><path d="M635 226 L635 450" fill="none" stroke="#a4a4a4" stroke-width="2.8" stroke-linecap="round"/><path d="M552 117 C552 124 566 124 566 117" fill="none" stroke="#a4a4a4" stroke-width="2.8" stroke-linecap="round"/><path d="M586 78 C587 62 599 62 601 72" fill="none" stroke="#a4a4a4" stroke-width="2.8" stroke-linecap="round"/><path d="M71 185 L71 218" fill="none" stroke="#a4a4a4" stroke-width="2.8" stroke-linecap="round"/><path d="M71 185 C72 212 100 246 134 282" fill="none" stroke="#a4a4a4" stroke-width="2.8" stroke-linecap="round"/><path d="M186 347 C196 360 208 372 220 386" fill="none" stroke="#a4a4a4" stroke-width="2.8" stroke-linecap="round"/><path d="M361 194 L361 199" fill="none" stroke="#a4a4a4" stroke-width="2.8" stroke-linecap="round"/><path d="M448 188 C448 196 440 199 436 199" fill="none" stroke="#a4a4a4" stroke-width="2.8" stroke-linecap="round"/><path d="M136 180 C136 188 133 190 133 197" fill="none" stroke="#a4a4a4" stroke-width="2.8" stroke-linecap="round"/><path d="M153 180 C153 192 197 182 197 197" fill="none" stroke="#a4a4a4" stroke-width="2.8" stroke-linecap="round"/><path d="M170 180 C172 186 178 176 180 160 C182 146 186 138 190 139" fill="none" stroke="#a4a4a4" stroke-width="2.8" stroke-linecap="round"/><path d="M194 180 C194 190 214 190 220 180 C232 160 246 128 270 135" fill="none" stroke="#a4a4a4" stroke-width="2.8" stroke-linecap="round"/><path d="M361 245 C363 254 380 254 392 250 C 400 247 402 240 403 232 C 404 221 412 219 414 228" fill="none" stroke="#e0ec94" stroke-width="3"/><path d="M361 245 C363 254 380 254 392 250 C 400 247 402 240 403 232 C 404 221 412 219 414 228" fill="none" stroke="#2c3620" stroke-width="1.65" stroke-dasharray="4 3"/><path d="M376 245 C378 252 392 252 400 246 C 408 240 420 226 440 221 C 452 217 461 219 463 228" fill="none" stroke="#e0ec94" stroke-width="3"/><path d="M376 245 C378 252 392 252 400 246 C 408 240 420 226 440 221 C 452 217 461 219 463 228" fill="none" stroke="#2c3620" stroke-width="1.65" stroke-dasharray="4 3"/><path d="M378 292 L378 306" fill="none" stroke="#e0ec94" stroke-width="3"/><path d="M378 292 L378 306" fill="none" stroke="#2c3620" stroke-width="1.65" stroke-dasharray="4 3"/><path d="M439 292 L439 306" fill="none" stroke="#e0ec94" stroke-width="3"/><path d="M439 292 L439 306" fill="none" stroke="#2c3620" stroke-width="1.65" stroke-dasharray="4 3"/><path d="M380 414 C380 432 410 424 410 442" fill="none" stroke="#e0ec94" stroke-width="3"/><path d="M380 414 C380 432 410 424 410 442" fill="none" stroke="#2c3620" stroke-width="1.65" stroke-dasharray="4 3"/><path d="M441 414 L440 442" fill="none" stroke="#e0ec94" stroke-width="3"/><path d="M441 414 L440 442" fill="none" stroke="#2c3620" stroke-width="1.65" stroke-dasharray="4 3"/><path d="M70 251 L70 322" fill="none" stroke="#e0ec94" stroke-width="3"/><path d="M70 251 L70 322" fill="none" stroke="#2c3620" stroke-width="1.65" stroke-dasharray="4 3"/><path d="M86 251 C86 280 104 300 104 322" fill="none" stroke="#e0ec94" stroke-width="3"/><path d="M86 251 C86 280 104 300 104 322" fill="none" stroke="#2c3620" stroke-width="1.65" stroke-dasharray="4 3"/><path d="M104 322 C106 296 118 282 128 283" fill="none" stroke="#e0ec94" stroke-width="3"/><path d="M104 322 C106 296 118 282 128 283" fill="none" stroke="#2c3620" stroke-width="1.65" stroke-dasharray="4 3"/><path d="M72 429 L70 503" fill="none" stroke="#e0ec94" stroke-width="3"/><path d="M72 429 L70 503" fill="none" stroke="#2c3620" stroke-width="1.65" stroke-dasharray="4 3"/><path d="M104 429 L106 503" fill="none" stroke="#e0ec94" stroke-width="3"/><path d="M104 429 L106 503" fill="none" stroke="#2c3620" stroke-width="1.65" stroke-dasharray="4 3"/><path d="M72 429 C74 450 100 466 128 478" fill="none" stroke="#e0ec94" stroke-width="3"/><path d="M72 429 C74 450 100 466 128 478" fill="none" stroke="#2c3620" stroke-width="1.65" stroke-dasharray="4 3"/><path d="M104 429 C106 450 116 470 128 494" fill="none" stroke="#e0ec94" stroke-width="3"/><path d="M104 429 C106 450 116 470 128 494" fill="none" stroke="#2c3620" stroke-width="1.65" stroke-dasharray="4 3"/><path d="M72 430 C76 444 90 436 94 416 C 100 394 114 382 128 380" fill="none" stroke="#e0ec94" stroke-width="3"/><path d="M72 430 C76 444 90 436 94 416 C 100 394 114 382 128 380" fill="none" stroke="#2c3620" stroke-width="1.65" stroke-dasharray="4 3"/><path d="M104 430 C110 440 116 428 118 414" fill="none" stroke="#e0ec94" stroke-width="3"/><path d="M104 430 C110 440 116 428 118 414" fill="none" stroke="#2c3620" stroke-width="1.65" stroke-dasharray="4 3"/><path d="M254 440 C262 452 266 462 265 472" fill="none" stroke="#a4a4a4" stroke-width="1.8" stroke-linecap="round"/><path d="M134 472 C138 461 160 462 190 471" fill="none" stroke="#a4a4a4" stroke-width="1.6" stroke-linecap="round"/><path d="M134 472 C142 464 172 466 196 472" fill="none" stroke="#a4a4a4" stroke-width="1.6" stroke-linecap="round"/><path d="M250 502 C262 500 268 497 270 494" fill="none" stroke="#a4a4a4" stroke-width="1.8" stroke-linecap="round"/><path d="M262 497 C272 504 292 504 298 494" fill="none" stroke="#a4a4a4" stroke-width="1.8" stroke-linecap="round"/></svg>
<div class="nb" style="left:62px;top:81px;width:224px;height:29px;background:linear-gradient(180deg,#3c3c3c,#2f2f2f);"><span style="left:7px;top:0;font-size:18px;line-height:29px">0. INTRO</span><svg style="position:absolute;left:203px;top:11px" width="12" height="8"><path d="M0 0H11L5.5 6.5Z" fill="#fff"/></svg></div>
<div class="nb" style="left:290px;top:81px;width:54px;height:21px;background:#dcdcdc;"><svg style="position:absolute;left:0;top:0" width="54" height="21"><path d="M2 4.0 L7 10.5 L2 17.0 Z" fill="#555"/></svg><span style="left:10px;top:0;font-size:12px;line-height:21px;color:#222">0</span></div>
<div class="cm" style="left:270px;top:118px;font-size:9px;line-height:11px;color:#1a1a1a;white-space:pre;">Breath input</div>
<div style="left:127px;top:142px;width:15px;height:15px;background:#333;"><svg width="15" height="15" style="position:absolute;left:0;top:0"><circle cx="7.5" cy="7.5" r="4.95" fill="none" stroke="#555" stroke-width="1.4"/></svg></div>
<div style="left:148px;top:142px;width:15px;height:15px;background:#333;"><svg width="15" height="15" style="position:absolute;left:0;top:0"><path d="M3.9000000000000004 3.9000000000000004 L11.1 11.1 M11.1 3.9000000000000004 L3.9000000000000004 11.1" stroke="#5c5c5c" stroke-width="1.3" fill="none"/></svg></div>
<div class="nb" style="left:185px;top:139px;width:43px;height:21px;background:#333;"><svg style="position:absolute;left:0;top:0" width="43" height="21"><path d="M4 4.0 L10 10.5 L4 17.0 Z" fill="#777"/></svg><span style="left:13px;top:0;font-size:11px;line-height:21px;color:#fff">0</span></div>
<div class="ob" style="left:127px;top:161px;width:52px;height:19px;"><b class="tb" style="height:4px"></b><b class="bb" style="height:4px"></b><span style="left:4px;top:3px;font-size:10px;line-height:13px">breath-in</span><i class="in" style="left:6px"></i><i class="in" style="left:23px"></i><i class="in" style="left:40px"></i><i class="out" style="left:6px"></i><i class="out" style="left:23px"></i><i class="out" style="left:40px"></i></div>
<div class="ob" style="left:185px;top:161px;width:51px;height:20px;"><b class="tb" style="height:4px"></b><b class="bb" style="height:4px"></b><span style="left:4px;top:3px;font-size:10px;line-height:14px">p sekibun</span><i class="in" style="left:6px"></i><i class="out" style="left:6px"></i></div>
<div class="mg" style="left:62px;top:163px;width:29px;height:22px;border-radius:5px;"><span style="left:5px;top:0px;font-size:12px;line-height:22px">1</span></div>
<div style="left:124px;top:197px;width:47px;height:47px;background:#333;"><svg width="47" height="47" style="position:absolute;left:0;top:0"><circle cx="23.5" cy="23.5" r="15.510000000000002" fill="none" stroke="#5a5a5a" stroke-width="3.2"/></svg></div>
<div style="left:187px;top:197px;width:47px;height:47px;background:#333;"><svg width="47" height="47" style="position:absolute;left:0;top:0"><path d="M12.22 12.22 L34.78 34.78 M34.78 12.22 L12.22 34.78" stroke="#5a5a5a" stroke-width="3" fill="none"/></svg></div>
<div style="left:265px;top:135px;width:21px;height:117px;background:#565656;"><div style="left:0;top:0;width:21px;height:5px;background:#2a2a2a"></div><div style="left:0;top:106px;width:21px;height:5px;background:#8fa3a6"></div><div style="left:0;top:111px;width:21px;height:6px;background:#2a2a2a"></div></div>
<div class="cm" style="left:292px;top:139px;font-size:9px;line-height:10px;color:#1a1a1a;white-space:pre;">center
offset</div>
<div class="nb" style="left:290px;top:164px;width:33px;height:17px;background:#dcdcdc;"><svg style="position:absolute;left:0;top:0" width="33" height="17"><path d="M2 3.5 L6 8.5 L2 13.5 Z" fill="#555"/></svg><span style="left:9px;top:0;font-size:9px;line-height:17px;color:#222">0</span></div>
<div class="cm" style="left:292px;top:189px;font-size:9px;line-height:11px;color:#1a1a1a;white-space:pre;">input max</div>
<div class="nb" style="left:290px;top:202px;width:33px;height:17px;background:#dcdcdc;"><svg style="position:absolute;left:0;top:0" width="33" height="17"><path d="M2 3.5 L6 8.5 L2 13.5 Z" fill="#555"/></svg><span style="left:9px;top:0;font-size:9px;line-height:17px;color:#222">0</span></div>
<div class="cm" style="left:292px;top:223px;font-size:9px;line-height:11px;color:#1a1a1a;white-space:pre;">input min</div>
<div class="nb" style="left:290px;top:236px;width:33px;height:17px;background:#dcdcdc;"><svg style="position:absolute;left:0;top:0" width="33" height="17"><path d="M2 3.5 L6 8.5 L2 13.5 Z" fill="#555"/></svg><span style="left:9px;top:0;font-size:9px;line-height:17px;color:#222">0</span></div>
<div style="left:62px;top:218px;width:33px;height:33px;background:#333;"><svg width="33" height="33"><rect x="13.5" y="7" width="6" height="12" rx="3" fill="#555"/><path d="M10.5 15a6 6 0 0 0 12 0M16.5 21v4M12.5 25.5h8" fill="none" stroke="#555" stroke-width="1.6"/></svg></div>
<div style="left:62px;top:322px;width:22px;height:107px;background:repeating-linear-gradient(135deg,#2c2c2c 0 2px,#4a4a4a 2px 4px);box-shadow:inset 0 0 0 1px #3a3a3a;"><div style="left:0;bottom:0;width:22px;height:5px;background:#c5e6ea;box-shadow:inset 0 0 0 1px #555"></div></div>
<div style="left:93px;top:322px;width:22px;height:107px;background:repeating-linear-gradient(135deg,#2c2c2c 0 2px,#4a4a4a 2px 4px);box-shadow:inset 0 0 0 1px #3a3a3a;"><div style="left:0;bottom:0;width:22px;height:5px;background:#c5e6ea;box-shadow:inset 0 0 0 1px #555"></div></div>
<div style="left:126px;top:283px;width:128px;height:64px;background:#b5e0e8;overflow:hidden;"><svg width="128" height="64"><path d="M18.1 35.9L14.2 33.5" stroke="#1f46c8" stroke-width="3.2"/><path d="M33.4 20.1L30.8 16.3" stroke="#1f46c8" stroke-width="3.2"/><path d="M53.8 11.8L53.0 7.4" stroke="#1f46c8" stroke-width="3.2"/><path d="M75.8 12.6L76.9 8.2" stroke="#1f46c8" stroke-width="3.2"/><path d="M86.2 16.4L88.2 12.3" stroke="#1f46c8" stroke-width="3.2"/><path d="M95.6 22.2L98.4 18.7" stroke="#1f46c8" stroke-width="3.2"/><path d="M103.3 29.6L106.7 26.7" stroke="#1f46c8" stroke-width="3.2"/><path d="M109.6 38.7L113.5 36.6" stroke="#1f46c8" stroke-width="3.2"/><path d="M60 59L24.5 41.5" stroke="#1f46c8" stroke-width="1.3"/><circle cx="24.5" cy="41.5" r="1.6" fill="#1f46c8"/><path d="M51 64a12 12 0 0 1 24 0M57 64a6 6 0 0 1 12 0" fill="none" stroke="#1f46c8" stroke-width="1.2"/></svg></div>
<div style="left:126px;top:386px;width:128px;height:64px;background:#b5e0e8;overflow:hidden;"><svg width="128" height="64"><path d="M18.1 35.9L14.2 33.5" stroke="#1f46c8" stroke-width="3.2"/><path d="M33.4 20.1L30.8 16.3" stroke="#1f46c8" stroke-width="3.2"/><path d="M53.8 11.8L53.0 7.4" stroke="#1f46c8" stroke-width="3.2"/><path d="M75.8 12.6L76.9 8.2" stroke="#1f46c8" stroke-width="3.2"/><path d="M86.2 16.4L88.2 12.3" stroke="#1f46c8" stroke-width="3.2"/><path d="M95.6 22.2L98.4 18.7" stroke="#1f46c8" stroke-width="3.2"/><path d="M103.3 29.6L106.7 26.7" stroke="#1f46c8" stroke-width="3.2"/><path d="M109.6 38.7L113.5 36.6" stroke="#1f46c8" stroke-width="3.2"/><path d="M60 59L24.5 41.5" stroke="#1f46c8" stroke-width="1.3"/><circle cx="24.5" cy="41.5" r="1.6" fill="#1f46c8"/><path d="M51 64a12 12 0 0 1 24 0M57 64a6 6 0 0 1 12 0" fill="none" stroke="#1f46c8" stroke-width="1.2"/></svg></div>
<div class="cm" style="left:130px;top:373px;font-size:9px;line-height:11px;color:#1a1a1a;white-space:pre;">INPUT 2</div>
<div style="left:126px;top:472px;width:126px;height:31px;background:#2d2d2d;"><div style="left:5px;top:5px;width:8px;height:8px;background:#6a6a6a"></div><div style="left:17px;top:5px;width:8px;height:8px;background:#4a4a4a"></div><div style="left:29px;top:5px;width:8px;height:8px;background:#4a4a4a"></div><div style="left:41px;top:5px;width:8px;height:8px;background:#4a4a4a"></div><div style="left:53px;top:5px;width:8px;height:8px;background:#4a4a4a"></div><div style="left:65px;top:5px;width:8px;height:8px;background:#4a4a4a"></div><div style="left:77px;top:5px;width:8px;height:8px;background:#4a4a4a"></div><div style="left:89px;top:5px;width:8px;height:8px;background:#4a4a4a"></div><div style="left:101px;top:5px;width:8px;height:8px;background:#4a4a4a"></div><div style="left:113px;top:5px;width:8px;height:8px;background:#4a4a4a"></div><div style="left:5px;top:17px;width:8px;height:8px;background:#4a4a4a"></div><div style="left:17px;top:17px;width:8px;height:8px;background:#4a4a4a"></div><div style="left:29px;top:17px;width:8px;height:8px;background:#4a4a4a"></div><div style="left:41px;top:17px;width:8px;height:8px;background:#4a4a4a"></div><div style="left:53px;top:17px;width:8px;height:8px;background:#4a4a4a"></div><div style="left:65px;top:17px;width:8px;height:8px;background:#4a4a4a"></div><div style="left:77px;top:17px;width:8px;height:8px;background:#4a4a4a"></div><div style="left:89px;top:17px;width:8px;height:8px;background:#4a4a4a"></div><div style="left:101px;top:17px;width:8px;height:8px;background:#4a4a4a"></div><div style="left:113px;top:17px;width:8px;height:8px;background:#6a6a6a"></div></div>
<div class="mg" style="left:255px;top:472px;width:29px;height:22px;border-radius:5px;"><span style="left:5px;top:0px;font-size:12px;line-height:22px">1</span></div>
<div class="mg" style="left:288px;top:472px;width:29px;height:22px;border-radius:5px;"><span style="left:5px;top:0px;font-size:12px;line-height:22px">20</span></div>
<div class="ob" style="left:352px;top:68px;width:60px;height:19px;"><b class="tb" style="height:4px"></b><b class="bb" style="height:4px"></b><span style="left:4px;top:3px;font-size:10px;line-height:13px">loadmess 1</span><i class="gi" style="left:6px"></i><i class="out" style="left:6px"></i></div>
<div class="ob" style="left:352px;top:90px;width:65px;height:20px;"><b class="tb" style="height:4px"></b><b class="bb" style="height:4px"></b><span style="left:4px;top:3px;font-size:10px;line-height:14px">p dsp_status</span><i class="in" style="left:6px"></i><i class="out" style="left:6px"></i></div>
<div class="nb" style="left:352px;top:112px;width:45px;height:26px;background:#333;"><svg style="position:absolute;left:0;top:0" width="45" height="26"><path d="M3 5.0 L9 13.0 L3 21.0 Z" fill="#777"/></svg><span style="left:12px;top:0;font-size:18px;line-height:26px;color:#fff">0</span></div>
<div style="left:435px;top:74px;width:24px;height:24px;background:#333;"><svg width="24" height="24" style="position:absolute;left:0;top:0"><circle cx="12.0" cy="12.0" r="7.92" fill="none" stroke="#5a5a5a" stroke-width="1.8"/></svg></div>
<div class="cm" style="left:439px;top:103px;font-size:12px;line-height:14px;color:#1a1a1a;white-space:pre;">5'52"</div>
<div class="cm" style="left:488px;top:84px;font-size:12px;line-height:13px;color:#1a1a1a;white-space:pre;">Start with
SHO solo</div>
<div style="left:543px;top:74px;width:43px;height:43px;background:#333;"><svg width="43" height="43" style="position:absolute;left:0;top:0"><circle cx="21.5" cy="21.5" r="14.190000000000001" fill="none" stroke="#5f5f5f" stroke-width="2.6"/></svg></div>
<div class="ob" style="left:592px;top:72px;width:82px;height:22px;"><b class="tb" style="height:4px"></b><b class="bb" style="height:4px"></b><span style="left:4px;top:3px;font-size:12px;line-height:16px">p display_box</span><i class="in" style="left:6px"></i><i class="in" style="left:38px"></i><i class="in" style="left:69px"></i><i class="out" style="left:6px"></i><i class="out" style="left:69px"></i></div>
<div style="left:592px;top:97px;width:47px;height:42px;background:#fff;"><span style="position:absolute;left:4px;top:3px;font-size:29px;line-height:34px;font-weight:bold;color:#e80000">0</span></div>
<div style="left:655px;top:97px;width:47px;height:42px;background:#fff;"><span style="position:absolute;left:4px;top:3px;font-size:29px;line-height:34px;font-weight:bold;color:#e80000">0</span></div>
<div class="ob" style="left:352px;top:152px;width:50px;height:19px;"><b class="tb" style="height:4px"></b><b class="bb" style="height:4px"></b><span style="left:4px;top:3px;font-size:10px;line-height:13px">loadbang</span><i class="gi" style="left:6px"></i><i class="out" style="left:6px"></i></div>
<div class="mg" style="left:352px;top:174px;width:36px;height:20px;border-radius:5px;"><span style="left:4px;top:0px;font-size:10px;line-height:20px">loop 0</span></div>
<div style="left:433px;top:136px;width:29px;height:29px;background:#333;"><svg width="29" height="29" style="position:absolute;left:0;top:0"><circle cx="14.5" cy="14.5" r="9.57" fill="none" stroke="#5a5a5a" stroke-width="2"/></svg></div>
<div class="cm" style="left:465px;top:143px;font-size:12px;line-height:14px;color:#1a1a1a;white-space:pre;">STOP</div>
<div class="mg" style="left:433px;top:168px;width:29px;height:20px;border-radius:5px;"><span style="left:4px;top:0px;font-size:10px;line-height:20px">0</span></div>
<div class="mg" style="left:352px;top:199px;width:123px;height:20px;border-radius:5px;"><span style="left:4px;top:0px;font-size:10px;line-height:20px">open Playback11min.mp3</span></div>
<div style="left:511px;top:195px;width:3px;height:32px;background:#adadad;"></div>
<div style="left:490px;top:207px;width:40px;height:11px;background:#e1e1e1;"></div>
<div class="cm" style="left:491px;top:207px;font-size:10px;line-height:12px;color:#e01010;white-space:pre;font-weight:bold;">connect</div>
<div class="ob" style="left:352px;top:225px;width:48px;height:20px;"><b class="tb" style="height:4px"></b><b class="bb" style="height:4px"></b><span style="left:4px;top:3px;font-size:10px;line-height:14px">sfplay~ 2</span><i class="gi" style="left:36px"></i><i class="go" style="left:36px"></i><i class="in" style="left:6px"></i><i class="out" style="left:6px"></i><i class="out" style="left:21px"></i></div>
<div class="ob" style="left:405px;top:228px;width:44px;height:17px;"><b class="tb" style="height:3px"></b><b class="bb" style="height:3px"></b><span style="left:4px;top:2px;font-size:9px;line-height:13px">send~ L</span><i class="in" style="left:6px"></i></div>
<div class="ob" style="left:454px;top:228px;width:45px;height:17px;"><b class="tb" style="height:3px"></b><b class="bb" style="height:3px"></b><span style="left:4px;top:2px;font-size:9px;line-height:13px">send~ R</span><i class="in" style="left:6px"></i></div>
<div class="ob" style="left:369px;top:273px;width:58px;height:19px;"><b class="tb" style="height:4px"></b><b class="bb" style="height:4px"></b><span style="left:4px;top:3px;font-size:9px;line-height:13px">receive~ L</span><i class="gi" style="left:6px"></i><i class="out" style="left:6px"></i></div>
<div class="ob" style="left:430px;top:273px;width:58px;height:19px;"><b class="tb" style="height:4px"></b><b class="bb" style="height:4px"></b><span style="left:4px;top:3px;font-size:9px;line-height:13px">receive~ R</span><i class="gi" style="left:6px"></i><i class="out" style="left:6px"></i></div>
<div style="left:369px;top:306px;width:22px;height:108px;background:repeating-linear-gradient(135deg,#2c2c2c 0 2px,#4a4a4a 2px 4px);box-shadow:inset 0 0 0 1px #3a3a3a;"><div style="left:0;bottom:0;width:22px;height:5px;background:#c5e6ea;box-shadow:inset 0 0 0 1px #555"></div></div>
<div style="left:430px;top:306px;width:22px;height:108px;background:repeating-linear-gradient(135deg,#2c2c2c 0 2px,#4a4a4a 2px 4px);box-shadow:inset 0 0 0 1px #3a3a3a;"><div style="left:0;bottom:0;width:22px;height:5px;background:#c5e6ea;box-shadow:inset 0 0 0 1px #555"></div></div>
<div style="left:393px;top:306px;width:33px;height:122px;background:#050505;"><div style="left:4px;top:4.0px;width:25px;height:7.6px;background:#464646"></div><div style="left:4px;top:12.8px;width:25px;height:7.6px;background:#464646"></div><div style="left:4px;top:21.5px;width:25px;height:7.6px;background:#464646"></div><div style="left:4px;top:30.3px;width:25px;height:7.6px;background:#464646"></div><div style="left:4px;top:39.1px;width:25px;height:7.6px;background:#464646"></div><div style="left:4px;top:47.8px;width:25px;height:7.6px;background:#464646"></div><div style="left:4px;top:56.6px;width:25px;height:7.6px;background:#464646"></div><div style="left:4px;top:65.4px;width:25px;height:7.6px;background:#464646"></div><div style="left:4px;top:74.2px;width:25px;height:7.6px;background:#464646"></div><div style="left:4px;top:82.9px;width:25px;height:7.6px;background:#464646"></div><div style="left:4px;top:91.7px;width:25px;height:7.6px;background:#464646"></div><div style="left:4px;top:100.5px;width:25px;height:7.6px;background:#464646"></div><div style="left:4px;top:109.2px;width:25px;height:7.6px;background:#464646"></div></div>
<div style="left:454px;top:306px;width:33px;height:122px;background:#050505;"><div style="left:4px;top:4.0px;width:25px;height:7.6px;background:#464646"></div><div style="left:4px;top:12.8px;width:25px;height:7.6px;background:#464646"></div><div style="left:4px;top:21.5px;width:25px;height:7.6px;background:#464646"></div><div style="left:4px;top:30.3px;width:25px;height:7.6px;background:#464646"></div><div style="left:4px;top:39.1px;width:25px;height:7.6px;background:#464646"></div><div style="left:4px;top:47.8px;width:25px;height:7.6px;background:#464646"></div><div style="left:4px;top:56.6px;width:25px;height:7.6px;background:#464646"></div><div style="left:4px;top:65.4px;width:25px;height:7.6px;background:#464646"></div><div style="left:4px;top:74.2px;width:25px;height:7.6px;background:#464646"></div><div style="left:4px;top:82.9px;width:25px;height:7.6px;background:#464646"></div><div style="left:4px;top:91.7px;width:25px;height:7.6px;background:#464646"></div><div style="left:4px;top:100.5px;width:25px;height:7.6px;background:#464646"></div><div style="left:4px;top:109.2px;width:25px;height:7.6px;background:#464646"></div></div>
<div class="ob" style="left:401px;top:442px;width:49px;height:18px;"><b class="tb" style="height:3px"></b><b class="bb" style="height:4px"></b><span style="left:4px;top:2px;font-size:9px;line-height:13px">dac~ 1 2</span><i class="in" style="left:6px"></i><i class="in" style="left:36px"></i></div>
<div class="mg" style="left:543px;top:162px;width:29px;height:22px;border-radius:5px;"><span style="left:5px;top:0px;font-size:12px;line-height:22px">0</span></div>
<div class="cm" style="left:581px;top:165px;font-size:14px;line-height:16px;color:#1a1a1a;white-space:pre;font-weight:bold;">0'00"</div>
<div class="mg" style="left:543px;top:190px;width:29px;height:22px;border-radius:5px;"><span style="left:5px;top:0px;font-size:12px;line-height:22px">2</span></div>
<div class="cm" style="left:581px;top:193px;font-size:14px;line-height:16px;color:#1a1a1a;white-space:pre;font-weight:bold;">1'00"</div>
<div class="mg" style="left:543px;top:219px;width:29px;height:22px;border-radius:5px;"><span style="left:5px;top:0px;font-size:12px;line-height:22px">1</span></div>
<div class="cm" style="left:581px;top:222px;font-size:14px;line-height:16px;color:#1a1a1a;white-space:pre;font-weight:bold;">1'14"</div>
<div class="mg" style="left:543px;top:248px;width:29px;height:22px;border-radius:5px;"><span style="left:5px;top:0px;font-size:12px;line-height:22px">5</span></div>
<div class="cm" style="left:581px;top:251px;font-size:14px;line-height:16px;color:#1a1a1a;white-space:pre;font-weight:bold;">3'15"</div>
<div class="mg" style="left:543px;top:277px;width:29px;height:22px;border-radius:5px;"><span style="left:5px;top:0px;font-size:12px;line-height:22px">7</span></div>
<div class="cm" style="left:581px;top:280px;font-size:14px;line-height:16px;color:#1a1a1a;white-space:pre;font-weight:bold;">3'53"</div>
<div class="mg" style="left:543px;top:306px;width:29px;height:22px;border-radius:5px;"><span style="left:5px;top:0px;font-size:12px;line-height:22px">8</span></div>
<div class="cm" style="left:581px;top:309px;font-size:14px;line-height:16px;color:#1a1a1a;white-space:pre;font-weight:bold;">4'30"</div>
<div class="mg" style="left:543px;top:335px;width:29px;height:22px;border-radius:5px;"><span style="left:5px;top:0px;font-size:12px;line-height:22px">9</span></div>
<div class="cm" style="left:581px;top:338px;font-size:14px;line-height:16px;color:#1a1a1a;white-space:pre;font-weight:bold;">5'05"</div>
<div class="mg" style="left:543px;top:364px;width:29px;height:22px;border-radius:5px;"><span style="left:5px;top:0px;font-size:12px;line-height:22px">10</span></div>
<div class="cm" style="left:581px;top:367px;font-size:14px;line-height:16px;color:#1a1a1a;white-space:pre;font-weight:bold;">5'45"</div>
<div class="mg" style="left:543px;top:394px;width:29px;height:22px;border-radius:5px;"><span style="left:5px;top:0px;font-size:12px;line-height:22px">12</span></div>
<div class="cm" style="left:581px;top:397px;font-size:14px;line-height:16px;color:#1a1a1a;white-space:pre;font-weight:bold;">6'15"</div>
<div class="mg" style="left:628px;top:204px;width:29px;height:22px;border-radius:5px;"><span style="left:5px;top:0px;font-size:12px;line-height:22px">13</span></div>
<div class="cm" style="left:665px;top:207px;font-size:14px;line-height:16px;color:#1a1a1a;white-space:pre;font-weight:bold;">7'00"</div>
<div class="mg" style="left:628px;top:243px;width:29px;height:22px;border-radius:5px;"><span style="left:5px;top:0px;font-size:12px;line-height:22px">14</span></div>
<div class="cm" style="left:665px;top:246px;font-size:14px;line-height:16px;color:#1a1a1a;white-space:pre;font-weight:bold;">7'57"</div>
<div class="mg" style="left:628px;top:280px;width:29px;height:22px;border-radius:5px;"><span style="left:5px;top:0px;font-size:12px;line-height:22px">15</span></div>
<div class="cm" style="left:665px;top:283px;font-size:14px;line-height:16px;color:#1a1a1a;white-space:pre;font-weight:bold;">8'22"</div>
<div class="mg" style="left:628px;top:317px;width:29px;height:22px;border-radius:5px;"><span style="left:5px;top:0px;font-size:12px;line-height:22px">16</span></div>
<div class="cm" style="left:665px;top:320px;font-size:14px;line-height:16px;color:#1a1a1a;white-space:pre;font-weight:bold;">8'30"</div>
<div class="mg" style="left:628px;top:354px;width:29px;height:22px;border-radius:5px;"><span style="left:5px;top:0px;font-size:12px;line-height:22px">17</span></div>
<div class="cm" style="left:665px;top:357px;font-size:14px;line-height:16px;color:#1a1a1a;white-space:pre;font-weight:bold;">9'40"</div>
<div class="mg" style="left:628px;top:394px;width:29px;height:22px;border-radius:5px;"><span style="left:5px;top:0px;font-size:12px;line-height:22px">19</span></div>
<div class="cm" style="left:665px;top:397px;font-size:14px;line-height:16px;color:#1a1a1a;white-space:pre;font-weight:bold;">12'00"</div>
<div class="nb" style="left:543px;top:444px;width:43px;height:25px;background:#0a0aff;"><svg style="position:absolute;left:0;top:0" width="43" height="25"><path d="M3 5.0 L9 12.5 L3 20.0 Z" fill="#7070a0"/></svg><span style="left:12px;top:0;font-size:18px;line-height:25px;color:#e8e020">0</span></div>
<div class="nb" style="left:628px;top:448px;width:33px;height:17px;background:#333;"><svg style="position:absolute;left:0;top:0" width="33" height="17"><path d="M3 3.5 L8 8.5 L3 13.5 Z" fill="#777"/></svg><span style="left:11px;top:0;font-size:8px;line-height:17px;color:#fff">0</span></div>
<div class="ob" style="left:543px;top:475px;width:91px;height:22px;"><b class="tb" style="height:4px"></b><b class="bb" style="height:4px"></b><span style="left:4px;top:3px;font-size:12px;line-height:16px">p graphics_part</span><i class="in" style="left:6px"></i></div>
<div style="left:721px;top:62px;width:7px;height:253px;background:#b8b8b8;border-radius:4px;"></div>
<div style="left:55px;top:508px;width:451px;height:7px;background:#b8b8b8;border-radius:4px;"></div>
<div style="left:713px;top:290px;width:3px;height:207px;background:#c4c4c4;"></div>
<div style="left:713px;top:495px;width:2px;height:2px;background:#3050d0;"></div>
<!-- w2 -->
<div class="win" style="left:143px;top:536px;width:487px;height:483px;background:#333333">
<div class="tbar" style="background:linear-gradient(180deg,#ebebeb,#d3d3d3);color:#404040;border-bottom:1px solid #b8b8b8">[graphics_part]</div>
<div class="tl" style="left:8px;background:#fc5b57;box-shadow:inset 0 0 0 .5px rgba(0,0,0,.18);"><div style="left:4px;top:4px;width:4px;height:4px;border-radius:2px;background:#8c1a10"></div></div>
<div class="tl" style="left:28px;background:#fdbb40;box-shadow:inset 0 0 0 .5px rgba(0,0,0,.18);"></div>
<div class="tl" style="left:48px;background:#34c84a;box-shadow:inset 0 0 0 .5px rgba(0,0,0,.18);"></div>
<div style="left:34px;top:56px;width:419px;height:394px;background:#e1e1e1"></div>
<svg class="ov" width="487" height="483"><text x="8" y="43.5" font-size="11" font-weight="bold" fill="#f2f2f2" font-family="Liberation Sans">100%</text><path d="M40 36.5h6l-3 4.5z" fill="#f2f2f2"/><g transform="translate(80 39) scale(1.0)"><rect x="-8.5" y="-7.5" width="17" height="15" fill="none" stroke="#555555" stroke-width="1.4"/><path d="M-8.5 -4.3H8.5M-8.5 4.3H8.5" stroke="#555555" stroke-width="1.4"/></g><g transform="translate(109 39) scale(1.0)"><path d="M-8.5 7.5V-5.5a2 2 0 0 1 2-2H8.5V7.5" fill="none" stroke="#555555" stroke-width="1.4"/><path d="M-8.5 7.5H8.5" stroke="#555555" stroke-width="1.4"/><path d="M-3.5 2.5L-2 -2.5M-0.5 2.5L1 -2.5M2.5 2.5L4 -2.5" stroke="#555555" stroke-width="1.2"/></g><g transform="translate(138 39) scale(1.0)"><path d="M-8.5 -6.5H8.5V3.5H4.5L5.5 7.5L0 3.5H-8.5Z" fill="#555555"/></g><g transform="translate(167 39) scale(1.0)"><rect x="-8" y="-8" width="16" height="16" fill="none" stroke="#555555" stroke-width="1.4"/><path d="M-4.5 -4.5L4.5 4.5M4.5 -4.5L-4.5 4.5" stroke="#555555" stroke-width="1.4"/></g><g transform="translate(196 39) scale(1.0)"><rect x="-8" y="-8" width="16" height="16" fill="none" stroke="#555555" stroke-width="1.4"/><circle r="3.8" fill="none" stroke="#555555" stroke-width="1.4"/><path d="M-3 12.5H3L0 15Z" fill="#555555" opacity=".7"/></g><g transform="translate(225 39) scale(1.0)"><rect x="-8" y="-8" width="16" height="16" fill="none" stroke="#555555" stroke-width="1.4"/><path d="M-5 -4L0.5 0L-5 4Z" fill="#555555"/><path d="M-3 12.5H3L0 15Z" fill="#555555" opacity=".7"/></g><g transform="translate(254 39) scale(1.0)"><rect x="-8" y="-8" width="16" height="16" fill="none" stroke="#555555" stroke-width="1.4"/><path d="M-8 0H8" stroke="#555555" stroke-width="1.6"/><path d="M-3 12.5H3L0 15Z" fill="#555555" opacity=".7"/></g><g transform="translate(283 39) scale(1.0)"><path d="M-4.5 7A8.3 8.3 0 1 1 4.5 7" fill="none" stroke="#555555" stroke-width="1.6"/><path d="M0 0.5L4 -4.5" stroke="#555555" stroke-width="1.6"/><path d="M-3 12.5H3L0 15Z" fill="#555555" opacity=".7"/></g><g transform="translate(312 39) scale(1.0)"><path d="M-6.5 0H6.5M0 -6.5V6.5" stroke="#555555" stroke-width="2.6"/><path d="M-3 12.5H3L0 15Z" fill="#555555" opacity=".7"/></g><g transform="translate(358 39) scale(1.0)"><path d="M-7.5 1L0 -6L7.5 1L0 8Z" fill="#555555"/><path d="M-3 -3.5L0 -8.5L3 -3.5" fill="none" stroke="#555555" stroke-width="1.3"/><path d="M8.5 2.5c1.5 2.5 2 3.5 0 5c-2-1.5-1.5-2.5 0-5Z" fill="#555555"/></g><g transform="translate(440 39) scale(1.1)"><rect x="-9.60" y="-8.40" width="1.7" height="1.7" fill="#f2f2f2"/><rect x="-7.15" y="-8.40" width="1.7" height="1.7" fill="#f2f2f2"/><rect x="-4.70" y="-8.40" width="1.7" height="1.7" fill="#f2f2f2"/><rect x="-2.25" y="-8.40" width="1.7" height="1.7" fill="#f2f2f2"/><rect x="0.20" y="-8.40" width="1.7" height="1.7" fill="#f2f2f2"/><rect x="2.65" y="-8.40" width="1.7" height="1.7" fill="#f2f2f2"/><rect x="5.10" y="-8.40" width="1.7" height="1.7" fill="#f2f2f2"/><rect x="7.55" y="-8.40" width="1.7" height="1.7" fill="#f2f2f2"/><rect x="-9.60" y="-5.95" width="1.7" height="1.7" fill="#f2f2f2"/><rect x="-7.15" y="-5.95" width="1.7" height="1.7" fill="#f2f2f2"/><rect x="-4.70" y="-5.95" width="1.7" height="1.7" fill="#f2f2f2"/><rect x="-2.25" y="-5.95" width="1.7" height="1.7" fill="#f2f2f2"/><rect x="0.20" y="-5.95" width="1.7" height="1.7" fill="#f2f2f2"/><rect x="2.65" y="-5.95" width="1.7" height="1.7" fill="#f2f2f2"/><rect x="5.10" y="-5.95" width="1.7" height="1.7" fill="#f2f2f2"/><rect x="7.55" y="-5.95" width="1.7" height="1.7" fill="#f2f2f2"/><rect x="-9.60" y="-3.50" width="1.7" height="1.7" fill="#f2f2f2"/><rect x="-7.15" y="-3.50" width="1.7" height="1.7" fill="#f2f2f2"/><rect x="-4.70" y="-3.50" width="1.7" height="1.7" fill="#f2f2f2"/><rect x="-2.25" y="-3.50" width="1.7" height="1.7" fill="#f2f2f2"/><rect x="0.20" y="-3.50" width="1.7" height="1.7" fill="#f2f2f2"/><rect x="2.65" y="-3.50" width="1.7" height="1.7" fill="#f2f2f2"/><rect x="5.10" y="-3.50" width="1.7" height="1.7" fill="#f2f2f2"/><rect x="7.55" y="-3.50" width="1.7" height="1.7" fill="#f2f2f2"/><rect x="-9.60" y="-1.05" width="1.7" height="1.7" fill="#f2f2f2"/><rect x="-7.15" y="-1.05" width="1.7" height="1.7" fill="#f2f2f2"/><rect x="-4.70" y="-1.05" width="1.7" height="1.7" fill="#f2f2f2"/><rect x="-2.25" y="-1.05" width="1.7" height="1.7" fill="#f2f2f2"/><rect x="0.20" y="-1.05" width="1.7" height="1.7" fill="#f2f2f2"/><rect x="2.65" y="-1.05" width="1.7" height="1.7" fill="#f2f2f2"/><rect x="5.10" y="-1.05" width="1.7" height="1.7" fill="#f2f2f2"/><rect x="7.55" y="-1.05" width="1.7" height="1.7" fill="#f2f2f2"/><rect x="-9.60" y="1.40" width="1.7" height="1.7" fill="#f2f2f2"/><rect x="-7.15" y="1.40" width="1.7" height="1.7" fill="#f2f2f2"/><rect x="-4.70" y="1.40" width="1.7" height="1.7" fill="#f2f2f2"/><rect x="-2.25" y="1.40" width="1.7" height="1.7" fill="#f2f2f2"/><rect x="0.20" y="1.40" width="1.7" height="1.7" fill="#f2f2f2"/><rect x="2.65" y="1.40" width="1.7" height="1.7" fill="#f2f2f2"/><rect x="5.10" y="1.40" width="1.7" height="1.7" fill="#f2f2f2"/><rect x="7.55" y="1.40" width="1.7" height="1.7" fill="#f2f2f2"/><rect x="-9.60" y="3.85" width="1.7" height="1.7" fill="#f2f2f2"/><rect x="-7.15" y="3.85" width="1.7" height="1.7" fill="#f2f2f2"/><rect x="-4.70" y="3.85" width="1.7" height="1.7" fill="#f2f2f2"/><rect x="-2.25" y="3.85" width="1.7" height="1.7" fill="#f2f2f2"/><rect x="0.20" y="3.85" width="1.7" height="1.7" fill="#f2f2f2"/><rect x="2.65" y="3.85" width="1.7" height="1.7" fill="#f2f2f2"/><rect x="5.10" y="3.85" width="1.7" height="1.7" fill="#f2f2f2"/><rect x="7.55" y="3.85" width="1.7" height="1.7" fill="#f2f2f2"/><rect x="-9.60" y="6.30" width="1.7" height="1.7" fill="#f2f2f2"/><rect x="-7.15" y="6.30" width="1.7" height="1.7" fill="#f0d040"/><rect x="-4.70" y="6.30" width="1.7" height="1.7" fill="#f0d040"/><rect x="-2.25" y="6.30" width="1.7" height="1.7" fill="#f2f2f2"/></g><g transform="translate(17 74.0) scale(1.0)"><path d="M0 -8.5L7.5 -4.5V4L0 8.5L-7.5 4V-4.5Z" fill="#f2f2f2"/><path d="M0 -0.5L7.5 -4.5M0 -0.5L-7.5 -4.5M0 -0.5V8.5" stroke="#000" stroke-opacity=".35" stroke-width="1.2" fill="none"/><circle cx="8" cy="-7" r="3.6" fill="#f0d040"/></g><g transform="translate(17 108.0) scale(1.0)"><circle r="8" fill="none" stroke="#f2f2f2" stroke-width="1.7"/><circle r="3.8" fill="none" stroke="#f2f2f2" stroke-width="1.7"/></g><g transform="translate(17 142.0) scale(1.0)"><rect x="-8.5" y="-6" width="17" height="12" fill="none" stroke="#555555" stroke-width="1.4"/><path d="M-8.5 -3H8.5M-8.5 3.5H8.5" stroke="#555555" stroke-width="1.2"/><path d="M-6 6V8M6 6V8" stroke="#555555" stroke-width="1.4"/></g><g transform="translate(17 176.0) scale(1.0)"><ellipse cx="-2.5" cy="6" rx="3.3" ry="2.6" fill="#f2f2f2"/><path d="M0 6V-8C2 -5 5.5 -4.5 5 0" fill="none" stroke="#f2f2f2" stroke-width="1.8"/></g><g transform="translate(17 210.0) scale(1.0)"><path d="M-2.5 -5L5 0L-2.5 5Z" fill="#f2f2f2"/><rect x="-8.5" y="-8" width="2.4" height="2.4" fill="#f2f2f2"/><rect x="6.5" y="-8" width="2.4" height="2.4" fill="#f2f2f2"/><rect x="-8.5" y="-3.5" width="2.4" height="2.4" fill="#f2f2f2"/><rect x="6.5" y="-3.5" width="2.4" height="2.4" fill="#f2f2f2"/><rect x="-8.5" y="1" width="2.4" height="2.4" fill="#f2f2f2"/><rect x="6.5" y="1" width="2.4" height="2.4" fill="#f2f2f2"/><rect x="-8.5" y="5.5" width="2.4" height="2.4" fill="#f2f2f2"/><rect x="6.5" y="5.5" width="2.4" height="2.4" fill="#f2f2f2"/></g><g transform="translate(17 244.0) scale(1.0)"><rect x="-8.5" y="-8" width="17" height="16" fill="none" stroke="#f2f2f2" stroke-width="1.4"/><path d="M-7 6L-3 -1L0 3L3 -3L7 6Z" fill="#f2f2f2"/><circle cx="-4.5" cy="-4.5" r="1.3" fill="#f2f2f2"/></g><g transform="translate(17 278.0) scale(1.0)"><path d="M-6 -3L2 5a3 3 0 0 0 4.5 -4.2L-2.5 -8.5a2.1 2.1 0 0 0 -3.2 3L2 2.5" fill="none" stroke="#f2f2f2" stroke-width="1.6" stroke-linecap="round"/></g><g transform="translate(17 312.0) scale(1.0)"><path d="M-3.5 -6H3V6H-3.5A6 6 0 0 1 -3.5 -6Z" fill="#f2f2f2"/><path d="M3 -3.2H8.5M3 3.2H8.5" stroke="#f2f2f2" stroke-width="2.2"/><path d="M-10 0H-7" stroke="#f2f2f2" stroke-width="2.6"/></g><g transform="translate(17 346.0) scale(1.0)"><circle r="8.5" fill="#555555"/><text x="0" y="4.5" text-anchor="middle" font-family="Liberation Serif" font-style="italic" font-weight="bold" font-size="14" fill="#333333">v</text></g><g transform="translate(17 380.0) scale(1.0)"><circle r="8.5" fill="#555555"/><text x="0" y="4.8" text-anchor="middle" font-family="Liberation Serif" font-style="italic" font-weight="bold" font-size="14" fill="#333333">b</text></g><g transform="translate(17 414.0) scale(1.0)"><polygon points="0.00,-8.20 2.17,-2.19 8.56,-1.98 3.52,1.94 5.29,8.08 0.00,4.50 -5.29,8.08 -3.52,1.94 -8.56,-1.98 -2.17,-2.19" fill="#555555"/></g><g transform="translate(470 74) scale(1.0)"><circle cx="-2" cy="-2" r="5.6" fill="none" stroke="#f2f2f2" stroke-width="2.2"/><path d="M2.3 2.3L8 8" stroke="#f2f2f2" stroke-width="3" stroke-linecap="round"/></g><g transform="translate(470 115) scale(1.0)"><circle r="8.5" fill="#f2f2f2"/><text x="0.3" y="5.2" text-anchor="middle" font-family="Liberation Serif" font-style="italic" font-weight="bold" font-size="15" fill="#333333">i</text></g><g transform="translate(470 156) scale(1.0)"><rect x="-8.5" y="-7" width="7.8" height="14" fill="#f2f2f2"/><rect x="0.7" y="-7" width="7.8" height="14" fill="#f2f2f2"/></g><g transform="translate(470 197) scale(1.0)"><rect x="-8.5" y="-7.3" width="2" height="1.6" fill="#f2f2f2"/><rect x="-5" y="-7.3" width="13.5" height="1.6" fill="#f2f2f2"/><rect x="-8.5" y="-3.8" width="2" height="1.6" fill="#f2f2f2"/><rect x="-5" y="-3.8" width="13.5" height="1.6" fill="#f2f2f2"/><rect x="-8.5" y="-0.30000000000000004" width="2" height="1.6" fill="#f2f2f2"/><rect x="-5" y="-0.30000000000000004" width="13.5" height="1.6" fill="#f2f2f2"/><rect x="-8.5" y="3.2" width="2" height="1.6" fill="#f2f2f2"/><rect x="-5" y="3.2" width="13.5" height="1.6" fill="#f2f2f2"/><rect x="-8.5" y="6.7" width="2" height="1.6" fill="#f2f2f2"/><rect x="-5" y="6.7" width="13.5" height="1.6" fill="#f2f2f2"/></g><g transform="translate(470 263) scale(1.0)"><path d="M-8.5 -5H-3L-2 -7.5H4L5 -5H8.5V7.5H-8.5Z" fill="#f2f2f2"/><circle cx="2" cy="1.3" r="3.6" fill="#333333"/><circle cx="2" cy="1.3" r="2" fill="#f2f2f2"/><rect x="-7" y="-2.5" width="2.2" height="1.6" fill="#333333"/><rect x="-7" y="0.8" width="2.2" height="1.6" fill="#333333"/></g><g transform="translate(470 304) scale(1.0)"><path d="M-6 -8V8" stroke="#f2f2f2" stroke-width="1.8"/><circle cx="-6" cy="2" r="2.6" fill="#f2f2f2"/><path d="M0 -8V8" stroke="#f2f2f2" stroke-width="1.8"/><circle cx="0" cy="-3" r="2.6" fill="#f2f2f2"/><path d="M6 -8V8" stroke="#f2f2f2" stroke-width="1.8"/><circle cx="6" cy="1" r="2.6" fill="#f2f2f2"/></g><rect x="461" y="336" width="6" height="2" fill="#4c4c4c"/><rect x="461" y="339" width="6" height="2" fill="#4c4c4c"/><rect x="461" y="342" width="6" height="2" fill="#4c4c4c"/><rect x="461" y="345" width="6" height="2" fill="#4c4c4c"/><rect x="461" y="348" width="6" height="2" fill="#4c4c4c"/><rect x="461" y="351" width="6" height="2" fill="#4c4c4c"/><rect x="461" y="354" width="6" height="2" fill="#4c4c4c"/><rect x="461" y="357" width="6" height="2" fill="#4c4c4c"/><rect x="461" y="360" width="6" height="2" fill="#4c4c4c"/><rect x="461" y="363" width="6" height="2" fill="#4c4c4c"/><rect x="461" y="366" width="6" height="2" fill="#4c4c4c"/><rect x="461" y="369" width="6" height="2" fill="#4c4c4c"/><rect x="461" y="372" width="6" height="2" fill="#4c4c4c"/><rect x="461" y="375" width="6" height="2" fill="#4c4c4c"/><rect x="461" y="378" width="6" height="2" fill="#4c4c4c"/><rect x="461" y="381" width="6" height="2" fill="#4c4c4c"/><rect x="461" y="384" width="6" height="2" fill="#4c4c4c"/><rect x="461" y="387" width="6" height="2" fill="#4c4c4c"/><rect x="461" y="390" width="6" height="2" fill="#4c4c4c"/><rect x="461" y="393" width="6" height="2" fill="#4c4c4c"/><rect x="461" y="396" width="6" height="2" fill="#4c4c4c"/><rect x="461" y="399" width="6" height="2" fill="#4c4c4c"/><rect x="461" y="402" width="6" height="2" fill="#4c4c4c"/><rect x="461" y="405" width="6" height="2" fill="#4c4c4c"/><rect x="461" y="408" width="6" height="2" fill="#4c4c4c"/><rect x="461" y="411" width="6" height="2" fill="#4c4c4c"/><rect x="461" y="414" width="6" height="2" fill="#4c4c4c"/><rect x="461" y="417" width="6" height="2" fill="#4c4c4c"/><rect x="461" y="420" width="6" height="2" fill="#4c4c4c"/><rect x="461" y="423" width="6" height="2" fill="#4c4c4c"/><rect x="461" y="426" width="6" height="2" fill="#4c4c4c"/><rect x="461" y="429" width="6" height="2" fill="#4c4c4c"/><rect x="461" y="432" width="6" height="2" fill="#4c4c4c"/><rect x="461" y="435" width="6" height="2" fill="#4c4c4c"/><rect x="461" y="438" width="6" height="2" fill="#4c4c4c"/><rect x="461" y="441" width="6" height="2" fill="#4c4c4c"/><rect x="472" y="336" width="6" height="2" fill="#4c4c4c"/><rect x="472" y="339" width="6" height="2" fill="#4c4c4c"/><rect x="472" y="342" width="6" height="2" fill="#4c4c4c"/><rect x="472" y="345" width="6" height="2" fill="#4c4c4c"/><rect x="472" y="348" width="6" height="2" fill="#4c4c4c"/><rect x="472" y="351" width="6" height="2" fill="#4c4c4c"/><rect x="472" y="354" width="6" height="2" fill="#4c4c4c"/><rect x="472" y="357" width="6" height="2" fill="#4c4c4c"/><rect x="472" y="360" width="6" height="2" fill="#4c4c4c"/><rect x="472" y="363" width="6" height="2" fill="#4c4c4c"/><rect x="472" y="366" width="6" height="2" fill="#4c4c4c"/><rect x="472" y="369" width="6" height="2" fill="#4c4c4c"/><rect x="472" y="372" width="6" height="2" fill="#4c4c4c"/><rect x="472" y="375" width="6" height="2" fill="#4c4c4c"/><rect x="472" y="378" width="6" height="2" fill="#4c4c4c"/><rect x="472" y="381" width="6" height="2" fill="#4c4c4c"/><rect x="472" y="384" width="6" height="2" fill="#4c4c4c"/><rect x="472" y="387" width="6" height="2" fill="#4c4c4c"/><rect x="472" y="390" width="6" height="2" fill="#4c4c4c"/><rect x="472" y="393" width="6" height="2" fill="#4c4c4c"/><rect x="472" y="396" width="6" height="2" fill="#4c4c4c"/><rect x="472" y="399" width="6" height="2" fill="#4c4c4c"/><rect x="472" y="402" width="6" height="2" fill="#4c4c4c"/><rect x="472" y="405" width="6" height="2" fill="#4c4c4c"/><rect x="472" y="408" width="6" height="2" fill="#4c4c4c"/><rect x="472" y="411" width="6" height="2" fill="#4c4c4c"/><rect x="472" y="414" width="6" height="2" fill="#4c4c4c"/><rect x="472" y="417" width="6" height="2" fill="#4c4c4c"/><rect x="472" y="420" width="6" height="2" fill="#4c4c4c"/><rect x="472" y="423" width="6" height="2" fill="#4c4c4c"/><rect x="472" y="426" width="6" height="2" fill="#4c4c4c"/><rect x="472" y="429" width="6" height="2" fill="#4c4c4c"/><rect x="472" y="432" width="6" height="2" fill="#4c4c4c"/><rect x="472" y="435" width="6" height="2" fill="#4c4c4c"/><rect x="472" y="438" width="6" height="2" fill="#4c4c4c"/><rect x="472" y="441" width="6" height="2" fill="#4c4c4c"/><rect x="462" y="334" width="5" height="30" fill="#4c4c4c"/><rect x="473" y="334" width="5" height="30" fill="#4c4c4c"/><circle cx="470" cy="362" r="4.5" fill="#eee"/><g transform="translate(17 466) scale(1.0)"><rect x="-6.5" y="-1" width="13" height="10" rx="1" fill="#f2f2f2"/><path d="M-4 -1V-4.5a4 4 0 0 1 8 0V-1" fill="none" stroke="#f2f2f2" stroke-width="2"/><rect x="-0.9" y="2" width="1.8" height="4" fill="#333333"/></g><g transform="translate(48 466) scale(1.0)"><path d="M8 -2V-8H-8V8H-1" fill="none" stroke="#555555" stroke-width="1.5"/><path d="M-2 -3L6 5L3 5.3L5 9L3.5 9.7L1.6 6L-1 8Z" fill="#555555"/></g><g transform="translate(92 466) scale(1.0)"><rect x="-8.5" y="-8" width="17" height="11" fill="#f2f2f2"/><path d="M0 3V5M-5.5 9L0 4.5L5.5 9" fill="none" stroke="#f2f2f2" stroke-width="1.7"/></g><g transform="translate(136 466) scale(1.0)"><rect x="-8.5" y="-6.5" width="11" height="8.5" fill="#f2f2f2"/><rect x="-3.5" y="-1.5" width="12" height="8.5" fill="#f2f2f2" stroke="#333333" stroke-width="1.2"/></g><g transform="translate(180 466) scale(1.0)"><path d="M-8 -3H-3.5L1 -6.5V6.5L-3.5 3H-8Z" fill="#555555"/><path d="M2.5 -3.5H8.5V3.5H2.5Z" fill="#555555"/><path d="M-5 -8L4 9" stroke="#555555" stroke-width="1.3"/></g><g transform="translate(209 466) scale(1.0)"><path d="M-8 -4.5H8M-8 0.5H8M-8 5.5H8M-4.5 -8V8M0.5 -8V8M5.5 -8V8" stroke="#555555" stroke-width="1.1" fill="none"/></g><g transform="translate(268 466) scale(1.0)"><g transform="translate(-1.5 1.5) scale(.8)"><path d="M-6 -3L2 5a3 3 0 0 0 4.5 -4.2L-2.5 -8.5a2.1 2.1 0 0 0 -3.2 3L2 2.5" fill="none" stroke="#555555" stroke-width="1.6" stroke-linecap="round"/></g><path d="M4 -6H9M6.5 -8.5V-3.5" stroke="#555555" stroke-width="1.5"/></g><g transform="translate(312 466) scale(1.0)"><path d="M-7.5 8L1 -0.5" stroke="#f2f2f2" stroke-width="3.4" stroke-linecap="round"/><path d="M6.6 -5.8A4.6 4.6 0 1 1 2.2 -8L4 -4.5Z" fill="#f2f2f2"/></g><g transform="translate(356 466) scale(1.0)"><rect x="-8" y="-8" width="16" height="16" fill="#f2f2f2"/><path d="M-3.6 -8V2.5M1 -8V2.5M5 -8V2.5" stroke="#333333" stroke-width="2.4"/><path d="M-2.7 2V8M2.7 2V8" stroke="#333333" stroke-width="0.9"/></g><g transform="translate(400 466) scale(1.0)"><rect x="-9.0" y="-7.5" width="2.6" height="2.6" fill="#f2f2f2"/><rect x="-5.2" y="-7.5" width="2.6" height="2.6" fill="#f2f2f2"/><rect x="-1.4" y="-7.5" width="2.6" height="2.6" fill="#f2f2f2"/><rect x="2.4" y="-7.5" width="2.6" height="2.6" fill="#f2f2f2"/><rect x="6.2" y="-7.5" width="2.6" height="2.6" fill="#f2f2f2"/><rect x="-8.1" y="-3.5" width="2.6" height="2.6" fill="#f2f2f2"/><rect x="-4.3" y="-3.5" width="2.6" height="2.6" fill="#f2f2f2"/><rect x="-0.5" y="-3.5" width="2.6" height="2.6" fill="#f2f2f2"/><rect x="3.3" y="-3.5" width="2.6" height="2.6" fill="#f2f2f2"/><rect x="7.1" y="-3.5" width="2.6" height="2.6" fill="#f2f2f2"/><rect x="-9.0" y="0.5" width="2.6" height="2.6" fill="#f2f2f2"/><rect x="-5.2" y="0.5" width="2.6" height="2.6" fill="#f2f2f2"/><rect x="-1.4" y="0.5" width="2.6" height="2.6" fill="#f2f2f2"/><rect x="2.4" y="0.5" width="2.6" height="2.6" fill="#f2f2f2"/><rect x="6.2" y="0.5" width="2.6" height="2.6" fill="#f2f2f2"/><rect x="-6.5" y="5" width="13" height="2.8" fill="#f2f2f2"/></g><g transform="translate(466 466) scale(1.0)"><path d="M-4.2 -5.6A7.2 7.2 0 1 0 4.2 -5.6" fill="none" stroke="#f2f2f2" stroke-width="2" stroke-linecap="round"/><path d="M0 -9V-1" stroke="#f2f2f2" stroke-width="2" stroke-linecap="round"/></g></svg>
</div>
<svg class="ov" width="1920" height="1080"><path d="M202 628 L202 636" fill="none" stroke="#a4a4a4" stroke-width="2.8" stroke-linecap="round"/><path d="M250 632 C250 640 240 640 234 630 C 226 614 218 596 204 606" fill="none" stroke="#a4a4a4" stroke-width="2.8" stroke-linecap="round"/><path d="M202 657 L202 732" fill="none" stroke="#a4a4a4" stroke-width="2.8" stroke-linecap="round"/><path d="M225 690 L225 699" fill="none" stroke="#a4a4a4" stroke-width="2.8" stroke-linecap="round"/><path d="M299 690 C299 698 279 695 249 695 L240 694.5 C228 694 225 694 225 699" fill="none" stroke="#a4a4a4" stroke-width="1.8" stroke-linecap="round"/><path d="M342 690 C342 698 322 695 292 695 L240 694.5 C228 694 225 694 225 699" fill="none" stroke="#a4a4a4" stroke-width="1.8" stroke-linecap="round"/><path d="M378 690 C378 698 358 695 328 695 L240 694.5 C228 694 225 694 225 699" fill="none" stroke="#a4a4a4" stroke-width="1.8" stroke-linecap="round"/><path d="M416 691 C416 699 396 696 366 696 L240 695.5 C228 695 225 694 225 699" fill="none" stroke="#a4a4a4" stroke-width="1.8" stroke-linecap="round"/><path d="M466 690 C466 698 446 695 416 695 L240 694.5 C228 694 225 694 225 699" fill="none" stroke="#a4a4a4" stroke-width="1.8" stroke-linecap="round"/><path d="M502 690 C502 698 482 695 452 695 L240 694.5 C228 694 225 694 225 699" fill="none" stroke="#a4a4a4" stroke-width="1.8" stroke-linecap="round"/><path d="M535 690 C535 698 515 695 485 695 L240 694.5 C228 694 225 694 225 699" fill="none" stroke="#a4a4a4" stroke-width="1.8" stroke-linecap="round"/><path d="M225 721 C225 729 240 726 255 726 C270 726 276 726 276 732" fill="none" stroke="#a4a4a4" stroke-width="2.8" stroke-linecap="round"/><path d="M351 725 L351 732" fill="none" stroke="#a4a4a4" stroke-width="2.8" stroke-linecap="round"/><path d="M202 751 L202 803" fill="none" stroke="#48a854" stroke-width="3.8"/><path d="M202 751 L202 803" fill="none" stroke="#1f4a25" stroke-width="1.29"/><path d="M202 751 L202 803" fill="none" stroke="#c9f2c0" stroke-width="1.22" stroke-dasharray="4 1.6"/><path d="M202 822 L202 841" fill="none" stroke="#48a854" stroke-width="3.8"/><path d="M202 822 L202 841" fill="none" stroke="#1f4a25" stroke-width="1.29"/><path d="M202 822 L202 841" fill="none" stroke="#c9f2c0" stroke-width="1.22" stroke-dasharray="4 1.6"/><path d="M202 861 L202 933" fill="none" stroke="#48a854" stroke-width="3.8"/><path d="M202 861 L202 933" fill="none" stroke="#1f4a25" stroke-width="1.29"/><path d="M202 861 L202 933" fill="none" stroke="#c9f2c0" stroke-width="1.22" stroke-dasharray="4 1.6"/><path d="M202 952 L202 960" fill="none" stroke="#48a854" stroke-width="3.8"/><path d="M202 952 L202 960" fill="none" stroke="#1f4a25" stroke-width="1.29"/><path d="M202 952 L202 960" fill="none" stroke="#c9f2c0" stroke-width="1.22" stroke-dasharray="4 1.6"/><path d="M398 757 C398 765 390 768 382 768 L235 768 C225 768 225 772 225 778" fill="none" stroke="#a4a4a4" stroke-width="1.8" stroke-linecap="round"/><path d="M407 757 C407 765 399 770 391 770 L289 770 C279 770 279 772 279 778" fill="none" stroke="#a4a4a4" stroke-width="1.8" stroke-linecap="round"/><path d="M416 757 C416 765 408 772 400 772 L316 772 C306 772 306 772 306 778" fill="none" stroke="#a4a4a4" stroke-width="1.8" stroke-linecap="round"/><path d="M425 757 C425 765 417 768 409 768 L361 768 C351 768 351 772 351 778" fill="none" stroke="#a4a4a4" stroke-width="1.8" stroke-linecap="round"/><path d="M434 757 C434 765 426 770 418 770 L415 770 C405 770 405 772 405 778" fill="none" stroke="#a4a4a4" stroke-width="1.8" stroke-linecap="round"/><path d="M443 757 C443 765 435 772 427 772 L442 772 C432 772 432 772 432 778" fill="none" stroke="#a4a4a4" stroke-width="1.8" stroke-linecap="round"/><path d="M452 757 C452 765 460 768 468 768 L467 768 C477 768 477 772 477 778" fill="none" stroke="#a4a4a4" stroke-width="1.8" stroke-linecap="round"/><path d="M461 757 C461 765 469 770 477 770 L522 770 C532 770 532 772 532 778" fill="none" stroke="#a4a4a4" stroke-width="1.8" stroke-linecap="round"/><path d="M470 757 C470 765 478 772 486 772 L549 772 C559 772 559 772 559 778" fill="none" stroke="#a4a4a4" stroke-width="1.8" stroke-linecap="round"/><path d="M527 761 C527 770 534 768 534 778" fill="none" stroke="#a4a4a4" stroke-width="1.8" stroke-linecap="round"/><path d="M556 757 C556 768 560 768 561 778" fill="none" stroke="#a4a4a4" stroke-width="1.8" stroke-linecap="round"/><path d="M547 744 C549 730 558 729 560 737" fill="none" stroke="#a4a4a4" stroke-width="2" stroke-linecap="round"/><path d="M568 757 C570 764 570 772 566 778" fill="none" stroke="#a4a4a4" stroke-width="1.8" stroke-linecap="round"/><path d="M225 798 C225 802 242 799 242 803" fill="none" stroke="#a4a4a4" stroke-width="1.8" stroke-linecap="round"/><path d="M279 800 C279 802 282 799 282 803" fill="none" stroke="#a4a4a4" stroke-width="1.8" stroke-linecap="round"/><path d="M306 800 C306 802 322 799 322 803" fill="none" stroke="#a4a4a4" stroke-width="1.8" stroke-linecap="round"/><path d="M351 798 C351 802 362 799 362 803" fill="none" stroke="#a4a4a4" stroke-width="1.8" stroke-linecap="round"/><path d="M405 800 C405 802 401 799 401 803" fill="none" stroke="#a4a4a4" stroke-width="1.8" stroke-linecap="round"/><path d="M432 800 C432 802 441 799 441 803" fill="none" stroke="#a4a4a4" stroke-width="1.8" stroke-linecap="round"/><path d="M477 798 C477 802 481 799 481 803" fill="none" stroke="#a4a4a4" stroke-width="1.8" stroke-linecap="round"/><path d="M531 800 C531 802 521 799 521 803" fill="none" stroke="#a4a4a4" stroke-width="1.8" stroke-linecap="round"/><path d="M558 800 C558 802 561 799 561 803" fill="none" stroke="#a4a4a4" stroke-width="1.8" stroke-linecap="round"/><path d="M243 841 C243 832 252 834 256 842 C262 856 262 866 270 861" fill="none" stroke="#a4a4a4" stroke-width="2.8" stroke-linecap="round"/><path d="M270 841 C270 830 290 830 300 838 C316 850 330 872 350 864" fill="none" stroke="#a4a4a4" stroke-width="2.8" stroke-linecap="round"/><path d="M352 841 C360 826 400 832 420 840" fill="none" stroke="#a4a4a4" stroke-width="2.8" stroke-linecap="round"/><path d="M484 863 C500 872 528 872 532 862" fill="none" stroke="#a4a4a4" stroke-width="2.8" stroke-linecap="round"/><path d="M229 900 L229 907" fill="none" stroke="#a4a4a4" stroke-width="2.8" stroke-linecap="round"/><path d="M299 898 C299 906 279 903 259 903 L244 903 C232 903 229 903 229 907" fill="none" stroke="#a4a4a4" stroke-width="1.8" stroke-linecap="round"/><path d="M333 898 C333 906 313 903 293 903 L244 903 C232 903 229 903 229 907" fill="none" stroke="#a4a4a4" stroke-width="1.8" stroke-linecap="round"/><path d="M367 898 C367 906 347 903 327 903 L244 903 C232 903 229 903 229 907" fill="none" stroke="#a4a4a4" stroke-width="1.8" stroke-linecap="round"/><path d="M229 927 L229 933" fill="none" stroke="#a4a4a4" stroke-width="2.8" stroke-linecap="round"/><path d="M256 933 C258 922 280 924 292 934 C 305 944 320 954 332 961" fill="none" stroke="#a4a4a4" stroke-width="2.8" stroke-linecap="round"/><path d="M279 952 C279 960 250 956 230 955 C 212 954 204 955 203 960" fill="none" stroke="#a4a4a4" stroke-width="2.8" stroke-linecap="round"/><path d="M292 952 C296 962 312 958 322 946 C 336 928 346 912 360 908 C 368 906 374 910 376 915" fill="none" stroke="#a4a4a4" stroke-width="2.8" stroke-linecap="round"/><path d="M375 970 C372 979 356 979 350 972" fill="none" stroke="#a4a4a4" stroke-width="2.8" stroke-linecap="round"/></svg>
<div class="nb" style="left:193px;top:606px;width:38px;height:22px;background:#333;"><svg style="position:absolute;left:0;top:0" width="38" height="22"><path d="M4 4.5 L10 11.0 L4 17.5 Z" fill="#777"/></svg><span style="left:13px;top:0;font-size:12px;line-height:22px;color:#fff">0</span></div>
<div class="nb" style="left:237px;top:606px;width:26px;height:26px;background:#2b2b2b;"><svg width="26" height="26" style="position:absolute;left:0;top:0"><path d="M7.02 15.6 L18.98 15.6 L13.0 22.880000000000003 Z" fill="#bfe4ea"/></svg><span style="left:0;width:26px;text-align:center;top:1.04px;font-size:11px;line-height:14.3px;font-weight:bold">1</span></div>
<div class="ob" style="left:193px;top:636px;width:107px;height:22px;"><b class="tb" style="height:4px"></b><b class="bb" style="height:4px"></b><span style="left:4px;top:3px;font-size:12px;line-height:16px">p graphics_control</span><i class="in" style="left:6px"></i><i class="out" style="left:6px"></i></div>
<div class="cm" style="left:311px;top:646px;font-size:12px;line-height:14px;color:#1a1a1a;white-space:pre;">1 &lt;-- final climax --&gt; 4</div>
<div class="ob" style="left:216px;top:668px;width:68px;height:22px;"><b class="tb" style="height:4px"></b><b class="bb" style="height:4px"></b><span style="left:4px;top:3px;font-size:12px;line-height:16px">r movie_no</span><i class="out" style="left:6px"></i></div>
<div class="mg" style="left:293px;top:664px;width:37px;height:26px;border-radius:5px;"><span style="left:5px;top:0px;font-size:16px;line-height:26px">1</span></div>
<div class="mg" style="left:336px;top:668px;width:29px;height:22px;border-radius:5px;"><span style="left:5px;top:0px;font-size:12px;line-height:22px">2</span></div>
<div class="mg" style="left:372px;top:668px;width:29px;height:22px;border-radius:5px;"><span style="left:5px;top:0px;font-size:12px;line-height:22px">3</span></div>
<div class="mg" style="left:410px;top:660px;width:43px;height:31px;border-radius:5px;"><span style="left:5px;top:0px;font-size:20px;line-height:31px">4</span></div>
<div class="mg" style="left:460px;top:668px;width:29px;height:22px;border-radius:5px;"><span style="left:5px;top:0px;font-size:12px;line-height:22px">5</span></div>
<div class="mg" style="left:496px;top:668px;width:29px;height:22px;border-radius:5px;"><span style="left:5px;top:0px;font-size:12px;line-height:22px">6</span></div>
<div class="mg" style="left:529px;top:668px;width:29px;height:22px;border-radius:5px;"><span style="left:5px;top:0px;font-size:12px;line-height:22px">7</span></div>
<div class="nb" style="left:216px;top:699px;width:35px;height:22px;background:#333;"><svg style="position:absolute;left:0;top:0" width="35" height="22"><path d="M4 4.5 L10 11.0 L4 17.5 Z" fill="#777"/></svg><span style="left:13px;top:0;font-size:12px;line-height:22px;color:#fff">0</span></div>
<div class="cm" style="left:261px;top:704px;font-size:12px;line-height:14px;color:#1a1a1a;white-space:pre;">graphics mute</div>
<div style="left:342px;top:701px;width:24px;height:24px;background:#333;"><svg width="24" height="24" style="position:absolute;left:0;top:0"><circle cx="12.0" cy="12.0" r="7.92" fill="none" stroke="#5a5a5a" stroke-width="1.8"/></svg></div>
<div class="ob" style="left:193px;top:732px;width:168px;height:19px;"><b class="tb" style="height:4px"></b><b class="bb" style="height:4px"></b><span style="left:4px;top:3px;font-size:10px;line-height:13px">p movie_select_loop</span><i class="in" style="left:6px"></i><i class="in" style="left:80px"></i><i class="in" style="left:155px"></i><i class="out" style="left:6px"></i></div>
<div class="ob" style="left:389px;top:736px;width:91px;height:22px;"><b class="tb" style="height:4px"></b><b class="bb" style="height:4px"></b><span style="left:4px;top:3px;font-size:12px;line-height:16px">p color_change</span><i class="out" style="left:6px"></i><i class="out" style="left:15px"></i><i class="out" style="left:24px"></i><i class="out" style="left:33px"></i><i class="out" style="left:42px"></i><i class="out" style="left:51px"></i><i class="out" style="left:60px"></i><i class="out" style="left:69px"></i><i class="out" style="left:78px"></i></div>
<div style="left:518px;top:732px;width:29px;height:29px;background:#333;"><svg width="29" height="29" style="position:absolute;left:0;top:0"><circle cx="14.5" cy="14.5" r="9.57" fill="none" stroke="#5a5a5a" stroke-width="2"/></svg></div>
<div class="mg" style="left:550px;top:736px;width:29px;height:22px;border-radius:5px;"><span style="left:5px;top:0px;font-size:12px;line-height:22px">0</span></div>
<div class="cm" style="left:231px;top:756px;font-size:9px;line-height:11px;color:#1a1a1a;white-space:pre;">RED</div>
<div class="cm" style="left:346px;top:756px;font-size:9px;line-height:11px;color:#1a1a1a;white-space:pre;">GREEN</div>
<div class="cm" style="left:487px;top:756px;font-size:9px;line-height:11px;color:#1a1a1a;white-space:pre;">BLUE</div>
<div class="nb" style="left:216px;top:778px;width:50px;height:20px;background:#333;"><svg style="position:absolute;left:0;top:0" width="50" height="20"><path d="M5 8.5L10.5 2.5L16 8.5ZM5 11.5L10.5 17.5L16 11.5Z" fill="#4c4c4c"/><path d="M24 4.5L29 10L24 15.5Z" fill="#6e6e6e"/></svg><span style="left:32px;top:0;font-size:9px;line-height:20px">0</span></div>
<div style="left:270px;top:778px;width:22px;height:22px;background:#333;"><svg width="22" height="22" style="position:absolute;left:0;top:0"><path d="M5.720000000000001 5.720000000000001 L16.28 16.28 M16.28 5.720000000000001 L5.720000000000001 16.28" stroke="#555" stroke-width="1.8" fill="none"/></svg></div>
<div style="left:297px;top:778px;width:23px;height:23px;background:#333;"><svg width="23" height="23" style="position:absolute;left:0;top:0"><path d="M5.98 5.98 L17.02 17.02 M17.02 5.98 L5.98 17.02" stroke="#555" stroke-width="1.8" fill="none"/></svg></div>
<div class="nb" style="left:342px;top:778px;width:50px;height:20px;background:#333;"><svg style="position:absolute;left:0;top:0" width="50" height="20"><path d="M5 8.5L10.5 2.5L16 8.5ZM5 11.5L10.5 17.5L16 11.5Z" fill="#4c4c4c"/><path d="M24 4.5L29 10L24 15.5Z" fill="#6e6e6e"/></svg><span style="left:32px;top:0;font-size:9px;line-height:20px">0</span></div>
<div style="left:396px;top:778px;width:22px;height:22px;background:#333;"><svg width="22" height="22" style="position:absolute;left:0;top:0"><path d="M5.720000000000001 5.720000000000001 L16.28 16.28 M16.28 5.720000000000001 L5.720000000000001 16.28" stroke="#555" stroke-width="1.8" fill="none"/></svg></div>
<div style="left:423px;top:778px;width:23px;height:23px;background:#333;"><svg width="23" height="23" style="position:absolute;left:0;top:0"><path d="M5.98 5.98 L17.02 17.02 M17.02 5.98 L5.98 17.02" stroke="#555" stroke-width="1.8" fill="none"/></svg></div>
<div class="nb" style="left:468px;top:778px;width:50px;height:20px;background:#333;"><svg style="position:absolute;left:0;top:0" width="50" height="20"><path d="M5 8.5L10.5 2.5L16 8.5ZM5 11.5L10.5 17.5L16 11.5Z" fill="#4c4c4c"/><path d="M24 4.5L29 10L24 15.5Z" fill="#6e6e6e"/></svg><span style="left:32px;top:0;font-size:9px;line-height:20px">0</span></div>
<div style="left:522px;top:778px;width:22px;height:22px;background:#333;"><svg width="22" height="22" style="position:absolute;left:0;top:0"><path d="M5.720000000000001 5.720000000000001 L16.28 16.28 M16.28 5.720000000000001 L5.720000000000001 16.28" stroke="#555" stroke-width="1.8" fill="none"/></svg></div>
<div style="left:549px;top:778px;width:23px;height:23px;background:#333;"><svg width="23" height="23" style="position:absolute;left:0;top:0"><path d="M5.98 5.98 L17.02 17.02 M17.02 5.98 L5.98 17.02" stroke="#555" stroke-width="1.8" fill="none"/></svg></div>
<div class="ob" style="left:193px;top:803px;width:378px;height:19px;"><b class="tb" style="height:4px"></b><b class="bb" style="height:4px"></b><span style="left:4px;top:3px;font-size:10px;line-height:13px">p color_effect</span><i class="in" style="left:6px"></i><i class="in" style="left:46px"></i><i class="in" style="left:86px"></i><i class="in" style="left:126px"></i><i class="in" style="left:166px"></i><i class="in" style="left:205px"></i><i class="in" style="left:245px"></i><i class="in" style="left:285px"></i><i class="in" style="left:325px"></i><i class="in" style="left:365px"></i><i class="out" style="left:6px"></i></div>
<div class="ob" style="left:193px;top:841px;width:60px;height:20px;"><b class="tb" style="height:4px"></b><b class="bb" style="height:4px"></b><span style="left:4px;top:3px;font-size:10px;line-height:14px">p grayscale</span><i class="in" style="left:6px"></i><i class="in" style="left:48px"></i><i class="out" style="left:6px"></i></div>
<div class="nb" style="left:260px;top:841px;width:51px;height:20px;background:#333;"><svg style="position:absolute;left:0;top:0" width="51" height="20"><path d="M4 4.0 L9 10.0 L4 16.0 Z" fill="#777"/></svg><span style="left:12px;top:0;font-size:10px;line-height:20px;color:#fff">0.</span></div>
<div class="cm" style="left:320px;top:844px;font-size:12px;line-height:14px;color:#1a1a1a;white-space:pre;">gray</div>
<div style="left:346px;top:841px;width:142px;height:22px;background:#565656;"><div style="left:0;top:0;width:5px;height:22px;background:#262626"></div><div style="left:5px;top:0;width:6px;height:22px;background:#8fa3a6"></div><div style="right:0;top:0;width:5px;height:22px;background:#262626"></div></div>
<div class="cm" style="left:490px;top:844px;font-size:12px;line-height:14px;color:#1a1a1a;white-space:pre;">color</div>
<div class="ob" style="left:523px;top:840px;width:53px;height:22px;"><b class="tb" style="height:4px"></b><b class="bb" style="height:4px"></b><span style="left:4px;top:3px;font-size:12px;line-height:16px">r gray_p</span><i class="out" style="left:6px"></i></div>
<div class="ob" style="left:220px;top:878px;width:67px;height:22px;"><b class="tb" style="height:4px"></b><b class="bb" style="height:4px"></b><span style="left:4px;top:3px;font-size:12px;line-height:16px">r pattern_p</span><i class="out" style="left:6px"></i></div>
<div class="mg" style="left:293px;top:878px;width:29px;height:20px;border-radius:5px;"><span style="left:5px;top:0px;font-size:10px;line-height:20px">1</span></div>
<div class="mg" style="left:327px;top:878px;width:29px;height:20px;border-radius:5px;"><span style="left:5px;top:0px;font-size:10px;line-height:20px">2</span></div>
<div class="mg" style="left:361px;top:878px;width:29px;height:20px;border-radius:5px;"><span style="left:5px;top:0px;font-size:10px;line-height:20px">4</span></div>
<div class="nb" style="left:220px;top:907px;width:27px;height:20px;background:#333;"><svg style="position:absolute;left:0;top:0" width="27" height="20"><path d="M4 4.0 L9 10.0 L4 16.0 Z" fill="#777"/></svg><span style="left:12px;top:0;font-size:10px;line-height:20px;color:#fff">1</span></div>
<div style="left:366px;top:915px;width:55px;height:55px;background:#333;"><svg width="55" height="55" style="position:absolute;left:0;top:0"><circle cx="27.5" cy="27.5" r="18.150000000000002" fill="none" stroke="#5f5f5f" stroke-width="3.4"/></svg></div>
<div class="cm" style="left:425px;top:922px;font-size:12px;line-height:13.5px;color:#1a1a1a;white-space:pre;">mandara
pattern
change</div>
<div class="ob" style="left:193px;top:933px;width:73px;height:19px;"><b class="tb" style="height:4px"></b><b class="bb" style="height:4px"></b><span style="left:4px;top:3px;font-size:10px;line-height:13px">p mirror_effect</span><i class="in" style="left:6px"></i><i class="in" style="left:33px"></i><i class="in" style="left:60px"></i><i class="out" style="left:6px"></i></div>
<div class="ob" style="left:270px;top:933px;width:32px;height:19px;"><b class="tb" style="height:4px"></b><b class="bb" style="height:4px"></b><span style="left:4px;top:3px;font-size:10px;line-height:13px">p esc</span><i class="out" style="left:6px"></i><i class="out" style="left:19px"></i></div>
<div class="ob" style="left:193px;top:960px;width:157px;height:20px;"><b class="tb" style="height:4px"></b><b class="bb" style="height:4px"></b><span style="left:4px;top:3px;font-size:10px;line-height:14px">jit.window nagasm 20 50 980 590</span><i class="go" style="left:6px"></i><i class="go" style="left:145px"></i><i class="in" style="left:6px"></i></div>
<!-- dock -->
<div style="left:31px;top:1031px;width:1858px;height:52px;background:#ab8184;border-radius:5px 5px 0 0;box-shadow:inset 0 1px 0 rgba(255,255,255,.12)"></div>
<svg class="ov" width="1920" height="1080"><g transform="translate(54 1054)"><rect x="-16" y="-15" width="32" height="30" rx="3" fill="#e9f0f7"/><path d="M-16 -12a3 3 0 0 1 3-3H3c-4 8-5 14-4 17h4c0 5 0 9 1 13H-13a3 3 0 0 1-3-3Z" fill="#2d9bf0"/><path d="M-9 5c5 5 14 5 19 0" fill="none" stroke="#223" stroke-width="1.3"/><path d="M-7 -8v4M8 -8v4" stroke="#223" stroke-width="1.5"/></g><g transform="translate(94 1054)"><path d="M-8 -14L12 -17L16 10L-4 15Z" fill="#e8e8e6" stroke="#bbb" stroke-width=".6"/><path d="M-4 -9l12-2M-3 -5l12-2M-2 -1l12-2M-1 3l10-2" stroke="#aaa" stroke-width="1"/><path d="M13 -8L4 13l-1 4 3-3L16 -6Z" fill="#4caf3a"/><path d="M-16 -12l6-5 7 2 1 8-6 5-7-2Z" fill="#222"/><text x="-9.5" y="-4" font-size="9" font-weight="bold" fill="#fff" text-anchor="middle" font-family="Liberation Sans">J</text></g><g transform="translate(134 1054)"><circle r="15.5" cy="1" fill="#ff9a1f"/><path d="M-15 3a15.5 15.5 0 0 0 30 2c1-8-3-14-7-18 1 4 0 6-2 7-2-5-7-6-9-10 -1 4-3 5-5 7-4 1-7 6-7 12Z" fill="#ff4f2e"/><circle cx="0" cy="4" r="8" fill="#7a3be0"/><path d="M-6 -1c4-3 9-1 11 2-3-1-6 0-7 2-2 0-4-2-4-4Z" fill="#ffb52e"/><path d="M4 -16c5 3 8 7 9 12-2-3-4-4-6-4 0-3-1-6-3-8Z" fill="#ffd83d"/></g><g transform="translate(174 1054)"><rect x="-16" y="-16" width="32" height="32" rx="6" fill="#f4f4f2"/><circle r="12.5" fill="#e33b2e"/><path d="M0 0L-10.8 -6.2A12.5 12.5 0 0 0 -1.5 12.4Z" fill="#2da94f"/><path d="M0 0L-1.5 12.4A12.5 12.5 0 0 0 12.3 -2.5Z" fill="#fcc31e"/><circle r="5.8" fill="#fff"/><circle r="4.5" fill="#3f86f0"/></g><g transform="translate(213 1054)"><rect x="-15.5" y="-15.5" width="31" height="31" rx="6" fill="#ef3939"/><circle r="11" fill="#fff"/><path d="M-6 -4a2.3 2.3 0 0 1 4-1.5L0 0 3 -5a2.3 2.3 0 0 1 4 2.4L1.5 6.5a1.8 1.8 0 0 1-3 0Z" fill="#e02b2b"/></g><g transform="translate(253 1054)"><circle r="16" fill="#e9eef2"/><circle r="14.5" fill="#2a8ce8"/><path d="M9 -9L2 2-2 -2Z" fill="#f0372c"/><path d="M-9 9L2 2-2 -2Z" fill="#f4f4f4"/></g><g transform="translate(293 1054)"><text x="-17" y="12" font-size="34" font-weight="bold" fill="#2aa84a" font-family="Liberation Serif" transform="rotate(-8)">F</text><text x="-5" y="12" font-size="34" font-weight="bold" fill="#ef7d1e" font-family="Liberation Serif" transform="rotate(-8)">B</text></g><g transform="translate(333 1054)"><rect x="-16" y="-14" width="32" height="27" rx="1.5" fill="#151515" stroke="#444" stroke-width="1"/><path d="M-12 -10l3 2-3 2M-8 -5.5h4" stroke="#eee" stroke-width="1.1" fill="none"/></g><g transform="translate(373 1054)"><rect x="-16" y="-16" width="32" height="32" rx="4" fill="#3b3b3b"/><circle cx="3" cy="-7" r="5" fill="none" stroke="#fff" stroke-width="2.6"/><circle cx="-1" cy="5" r="6.5" fill="none" stroke="#fff" stroke-width="3"/><circle cx="-1" cy="5" r="2.4" fill="#7fe3e6"/></g><g transform="translate(412 1054)"><rect x="-15" y="-16" width="10" height="10" fill="#2fbf3f" stroke="#197a25" stroke-width="1"/><rect x="-15" y="-2" width="31" height="17" fill="#f2f2f2" stroke="#111" stroke-width="1.6"/><path d="M-15 -2h31" stroke="#111" stroke-width="3"/><text x="-13" y="12.5" font-size="13" font-weight="bold" fill="#111" font-family="Liberation Mono">Pd</text></g><g transform="translate(453 1054)"><rect x="-19" y="-19" width="38" height="38" fill="#050505"/><path d="M-15 5l4-9 2 6 6-7v10M2 5l5-10 4 10 5-10" stroke="#fff" stroke-width="1.7" fill="none"/></g><g transform="translate(492 1054)"><circle r="16.5" fill="#f2f2f2"/><circle r="15" fill="#0b0b0b"/><path d="M-12 -4L2 8M-8 10L6 -12M-14 4L10 -2" stroke="#555" stroke-width=".6"/><text x="-7" y="8" font-size="20" fill="#fff" font-family="Liberation Serif">p</text><text x="2" y="2" font-size="16" fill="#fff" font-family="Liberation Serif">3</text></g><g transform="translate(532 1054)"><circle r="16.5" fill="#1e9aa0"/><circle cx="-5.5" r="4.6" fill="none" stroke="#fff" stroke-width="2.6"/><circle cx="5.5" r="4.6" fill="none" stroke="#fff" stroke-width="2.6"/><path d="M-7.5 0h4M3.8 0h3.6M5.6 -1.8v3.6" stroke="#fff" stroke-width="1.2"/></g><g transform="translate(572 1054)"><path d="M0 -16L15 -10V9L2 17L-15 9V-10Z" fill="#8b8b8b"/><path d="M-15 -10L2 -4 15 -10 0 -16Z" fill="#d8d8d8"/><path d="M2 -4V17L15 9V-10Z" fill="#5f5f5f"/><path d="M-11 -5L-2 -2V11L-11 7ZM-8 -1L-5 0V6L-8 5Z" fill="none" stroke="#eee" stroke-width="1.4"/><path d="M5 -2L12 -5V6L5 10Z" fill="none" stroke="#ccc" stroke-width="1.3"/><path d="M-6 -10L1 -7 8 -10 0 -13Z" fill="none" stroke="#888" stroke-width="1.2"/></g><g transform="translate(612 1054)"><path d="M-9 -15h18l6 7v16l-6 8h-18l-6-8v-16Z" fill="#3a3a3c"/><rect x="-5" y="-11" width="10" height="5" fill="#5d7f96"/><path d="M-10 -2h20M-10 2h20" stroke="#222" stroke-width="2"/><rect x="-7" y="5" width="3" height="6" fill="#ddd"/><rect x="-1.5" y="5" width="3" height="6" fill="#ddd"/><rect x="4" y="5" width="3" height="6" fill="#ddd"/></g><g transform="translate(652 1054)"><path d="M-16 -14L-1 -17L17 5V12L0 18L-12 14Z" fill="#d9d9d9"/><path d="M-16 -14L-1 -17L17 5L1 10Z" fill="#2a2a2a"/><path d="M-14 -13L-2 -15.5L6 -6L-8 -3Z" fill="#555"/><path d="M-12 14L0 18 17 12V7L1 12-13 8Z" fill="#f2f2f2"/></g><g transform="translate(692 1054)"><path d="M-15 9a15 14 0 0 1 30 0Z" fill="#1d3d86"/><path d="M-7 9c0-8 2-13 7-14 5 1 7 6 7 14Z" fill="#f4f4f4"/><path d="M-2 9c0-7 1-12 2-14 1 2 2 7 2 14Z" fill="#1d3d86"/><path d="M-17 9h34v2.5h-34Z" fill="#8a7f6a"/><path d="M0 -5v-6" stroke="#234" stroke-width="1.6"/><path d="M-17 -11c5-2 12-1 17 0 5-1 12-2 17 0-5 2-12 1-17 0-5 1-12 2-17 0Z" fill="#2b5db5"/></g><g transform="translate(731 1054)"><circle r="16.5" fill="#c9c9c9"/><circle r="15" fill="#3a3208"/><circle r="10" fill="none" stroke="#9a8a20" stroke-width=".9"/><circle r="5" fill="none" stroke="#9a8a20" stroke-width=".9"/><path d="M-15 0h30M0 -15v30" stroke="#9a8a20" stroke-width=".8"/><path d="M0 0L10 -11A15 15 0 0 1 15 -1Z" fill="#c9b030" opacity=".7"/></g><g transform="translate(771 1054)"><rect x="-14" y="-14" width="15" height="12" fill="#eee" stroke="#888" stroke-width=".7" transform="rotate(-12)"/><rect x="-12" y="1" width="15" height="12" fill="#eee" stroke="#888" stroke-width=".7" transform="rotate(-12)"/><path d="M-12 -8a5 4 0 0 1 10-2Z" fill="#d02020"/><path d="M-7 7a5 4 0 0 1 10-2Z" fill="#d02020"/><path d="M2 -12c8-4 13 2 10 9l3 1-7 5-2-8 3 1c2-4-2-7-6-5Z" fill="#222"/></g><g transform="translate(811 1054)"><path d="M-16 -8L6 -14L14 12L-9 17Z" fill="#2c55c2"/><path d="M-10 -4l12-3M-8 2l12-3M-6 8l12-3" stroke="#6f8fe0" stroke-width=".8"/><path d="M12 -16L-5 14" stroke="#d9952a" stroke-width="2.6"/><path d="M6 -12L14 10" stroke="#b98028" stroke-width="1.6"/></g><g transform="translate(850 1054)"><rect x="-14" y="-15" width="28" height="20" fill="#bdbdbd" stroke="#8d8d8d" stroke-width="1"/><circle cy="-5" r="8" fill="#3a3d44"/><circle cy="-5" r="4.5" fill="#10131a"/><circle cx="-2" cy="-7" r="1.5" fill="#9ab"/><path d="M-15 8L10 6 16 14-8 17Z" fill="#d9d9d9" stroke="#666" stroke-width=".6"/><path d="M-10 10L6 9 9 13-6 14Z" fill="#555"/></g><g transform="translate(890 1054)"><path d="M-13 -16H9L12 -10H-16Z" fill="#3b3b3b"/><rect x="-15" y="-10" width="26" height="12" fill="#dcdcdc"/><rect x="-13" y="-2" width="22" height="4" fill="#7fd0f5"/><rect x="-16" y="2" width="28" height="4" fill="#9a9a9a"/><rect x="2" y="0" width="14" height="18" fill="#f2f2f2" stroke="#888" stroke-width=".6"/><rect x="4" y="3" width="5" height="6" fill="#d9a050"/><path d="M10 4h4M10 7h4M4 12h10M4 15h10" stroke="#7aa" stroke-width=".9"/></g><g transform="translate(930 1054)"><rect x="-15" y="-10" width="31" height="22" fill="#e8e8e6" stroke="#aaa" stroke-width=".8"/><rect x="-12" y="-6" width="11" height="9" fill="#8a9a80"/><path d="M4 -6h9M4 -2h9M4 2h9" stroke="#bbb" stroke-width="1.2"/><path d="M-4 -14L5 16M8 -14L-3 16" stroke="#c8c8c8" stroke-width="2.4"/><circle cx="-5" cy="-14" r="3" fill="none" stroke="#ddd" stroke-width="1.6"/><circle cx="9" cy="-14" r="3" fill="none" stroke="#ddd" stroke-width="1.6"/></g><g transform="translate(970 1054)"><circle r="16.5" fill="#c9a227"/><circle r="13" fill="#e3c24a"/><circle r="11" fill="#4a4a4a"/><circle r="9" fill="#8e8e8e"/><path d="M-6 -2h12M-5 2h10" stroke="#ddd" stroke-width="1.6"/></g><g transform="translate(1010 1054)"><rect x="-16" y="-15" width="32" height="30" rx="2" fill="#1a1a1a"/><rect x="-13" y="-11" width="26" height="7" fill="#333"/><rect x="-14" y="-1" width="28" height="14" fill="#f6f6f6"/><path d="M-10 -1v14M-6 -1v14M-2 -1v14M2 -1v14M6 -1v14M10 -1v14" stroke="#222" stroke-width=".8"/><path d="M-10 -1v8M-6 -1v8M2 -1v8M6 -1v8M10 -1v8" stroke="#111" stroke-width="2.2"/></g><g transform="translate(1050 1054)"><circle r="16.5" fill="#e05bd0"/><circle r="15.3" fill="#5bc0f2"/><circle r="14.2" fill="#fafafa"/><path d="M-3 7V-7l10-2.5V4" fill="none" stroke="#e6459c" stroke-width="2.2"/><ellipse cx="-5.5" cy="7" rx="3.2" ry="2.6" fill="#7a5af0"/><ellipse cx="4.5" cy="4.2" rx="3.2" ry="2.6" fill="#3fa0f5"/></g><g transform="translate(1090 1054)"><rect x="-16.5" y="-16.5" width="33" height="33" fill="#b90f12"/><rect x="-16.5" y="-16.5" width="33" height="16" fill="#d4151a"/><path d="M8 -11c-8 0-9 6-11 11h5v4h-6c-2 5-4 8-9 8v-4c3 0 4-4 6-9 2-6 5-14 15-14Z" fill="#fff"/></g><g transform="translate(1130 1054)"><path d="M2 -3L16 -16" stroke="#8a6a40" stroke-width="2.4"/><path d="M13 -17l4-2 1 3-3 2Z" fill="#666"/><path d="M-14 6c0-6 6-6 8-9 2-3 6-2 8 1 2 3 1 6-2 8-2 2-2 8-8 8-4 0-6-4-6-8Z" fill="#c8781e"/><path d="M-11 7c0-4 4-4 6-6 2-2 4-1 5 1 1 2 0 4-2 5-2 1-2 6-5 6-3 0-4-3-4-6Z" fill="#e8a84a"/><circle cx="-4" cy="4" r="2.2" fill="#3a2410"/></g><g transform="translate(1170 1054)"><path d="M-16 0L-1 -15L15 0L-1 16Z" fill="#cfd9f2"/><path d="M-16 0L-1 -15L15 0Z" fill="#e4eaf8"/><path d="M-9 -2l5 8L16 -12l-2-2L-3 1l-3-5Z" fill="#e8631a"/><path d="M-9 -2l5 8 2-3-4-7Z" fill="#f6a623"/></g><g transform="translate(1209 1054)"><circle r="17" fill="#8f8f8f"/><circle r="15" fill="#5a5a5a"/><path d="M-11 2a11 11 0 0 1 22 0" fill="none" stroke="#1a1a1a" stroke-width="3"/><rect x="-13.5" y="0" width="5" height="9" rx="2" fill="#111"/><rect x="8.5" y="0" width="5" height="9" rx="2" fill="#111"/><rect x="-7" y="-6" width="14" height="17" rx="2" fill="#2a2a2a" stroke="#999" stroke-width=".8"/><path d="M-2 7V-1l5-1.3V5" fill="none" stroke="#ddd" stroke-width="1.3"/><circle cx="-3" cy="7" r="1.6" fill="#ddd"/><circle cx="2" cy="5.4" r="1.6" fill="#ddd"/></g><g transform="translate(1249 1054)"><circle r="17" fill="#0f6fe0"/><path d="M-15 -8a17 17 0 0 1 30 0Z" fill="#3aa0ff"/><text x="0" y="-2" font-size="10" font-weight="bold" fill="#222" text-anchor="middle" font-family="Liberation Sans">You</text><rect x="-8" y="0" width="16" height="10" rx="2.5" fill="#d8241c"/><text x="0" y="8.2" font-size="8" font-weight="bold" fill="#fff" text-anchor="middle" font-family="Liberation Sans">Tube</text></g><g transform="translate(1289 1054)"><rect x="-15" y="-12" width="20" height="22" fill="#1f6a96"/><rect x="-4" y="-15" width="20" height="10" fill="#2fae4f"/><text x="6" y="-7" font-size="8" font-weight="bold" fill="#fff" text-anchor="middle" font-family="Liberation Sans">Free</text><rect x="-6" y="-4" width="22" height="20" fill="#17304f"/><rect x="0" y="0" width="10" height="9" fill="#d86a2a"/><text x="5" y="15" font-size="5" font-weight="bold" fill="#fff" text-anchor="middle" font-family="Liberation Sans">MP4</text><path d="M-15 -6l6 3-6 3Z" fill="#6fd0ff"/></g><g transform="translate(1329 1054)"><rect x="-17" y="-17" width="34" height="35" rx="3" fill="#15457c"/><path d="M0 -13L13 0H8V12H-8V0H-13Z" fill="#fafafa"/><text x="0" y="8" font-size="13" font-weight="bold" fill="#15457c" text-anchor="middle" font-family="Liberation Sans">G</text></g><g transform="translate(1369 1054)"><rect x="-13" y="-15" width="26" height="18" fill="#c9a36a" stroke="#eee" stroke-width="1.2" transform="rotate(4)"/><rect x="-16" y="-10" width="27" height="20" fill="#7fb4e6" stroke="#f2f2f2" stroke-width="1.5" transform="rotate(-6)"/><path d="M-15 5l8-6 6 4 6-5 5 4v6l-25 3Z" fill="#e8eef4" transform="rotate(-6)"/><circle cx="9" cy="6" r="6.5" fill="#b8c4cc" stroke="#555" stroke-width="2"/><path d="M5 11l-3 6" stroke="#333" stroke-width="3"/></g><g transform="translate(1409 1054)"><rect x="-17" y="-4" width="36" height="22" fill="#f4efae"/><text x="-6" y="12" font-size="16" font-weight="bold" fill="#333" font-family="Liberation Sans">App</text><rect x="-13" y="-15" width="7" height="22" rx="1" fill="#5a3f9e"/><path d="M-13 -15h7l-1.5-4h-4Z" fill="#d9a55a"/><path d="M-17 12h8" stroke="#333" stroke-width="1.5"/></g><g transform="translate(1449 1054)"><circle r="16" fill="#2a2c30"/><circle r="10.5" fill="#1b8df2"/><circle r="10.5" cy="-3" fill="#46b2ff" opacity=".6"/><circle r="5.5" fill="#0d1a2a"/><path d="M4 5l9 10" stroke="#2a2c30" stroke-width="6" stroke-linecap="round"/></g><g transform="translate(1489 1054)"><circle r="14" fill="none" stroke="#1f86e8" stroke-width="5"/><circle r="9" fill="#58b2f8"/><path d="M-4 5L6 -7" stroke="#e8f2fc" stroke-width="2.4"/><path d="M6 8l8 8" stroke="#1f86e8" stroke-width="5" stroke-linecap="round"/></g><g transform="translate(1528 1054)"><path d="M-3 -16h6l9 25h-24Z" fill="#f28a12"/><path d="M-5.5 -9h11l2 6h-15Z" fill="#f4f4f4"/><path d="M-9.500 2h19l2 5.500h-23Z" fill="#f4f4f4"/><path d="M-15 9h30l1.500 7h-33Z" fill="#f07c0a"/></g><g transform="translate(1568 1054)"><path d="M-13 -16h26l3 13h-32Z" fill="#2a8cf0"/><rect x="-8" y="-14" width="16" height="9" fill="#f2f6fa"/><circle cx="-3" cy="-9.5" r="3" fill="#e8a030"/><path d="M-16 -3h32v2h-32Z" fill="#8ec4f8"/><path d="M0 -1v14" stroke="#b8bcc2" stroke-width="2"/><ellipse cy="14.500" rx="8" ry="2.500" fill="#c4c8ce"/></g><g transform="translate(1608 1054)"><path d="M-15 -11L8 -16L14 12L-9 17Z" fill="#f6f6f4" stroke="#ccc" stroke-width=".6"/><path d="M-14 -10L7 -14.500L8 -10L-13 -5.500Z" fill="#f08a24"/><rect x="-9" y="-3" width="12" height="9" fill="#3c8ae0" transform="rotate(-12)"/><path d="M-6 -1l4 4 4-5" fill="none" stroke="#f0a030" stroke-width="2" transform="rotate(-12)"/><path d="M15 -16L4 13l-1 4 3-3L18 -14Z" fill="#f0a030"/><path d="M4 13l-1 4 3-3Z" fill="#333"/></g><g transform="translate(1648 1054)"><rect x="-15" y="-10" width="26" height="26" rx="2" fill="#8c8c8c"/><rect x="-13" y="-8" width="22" height="18" fill="#b4b4b4"/><circle cx="-2" cy="1" r="8" fill="#d4d4d4" stroke="#777" stroke-width="1"/><circle cx="-2" cy="1" r="2" fill="#888"/><rect x="-13" y="11" width="22" height="4" fill="#444"/><path d="M-8 -14c-2 6 2 10 6 10M-2 -4c5 0 6 6 9 8 3 2 7 0 8-5l1-14" fill="none" stroke="#222" stroke-width="1.6"/><circle cx="9" cy="-17" r="1" fill="#222"/><circle cx="13" cy="-17" r="1" fill="#222"/></g><g transform="translate(1688 1054)"><rect x="-16" y="-16" width="32" height="32" rx="7" fill="#0b5cff"/><text x="0" y="3" font-size="9" font-weight="bold" fill="#fff" text-anchor="middle" font-family="Liberation Sans">zoom</text></g><g transform="translate(1728 1054)"><rect x="-17.500" y="-17.500" width="35" height="35" rx="6" fill="#dfeaf5"/><rect x="-16" y="-16" width="32" height="32" rx="5" fill="#1a6fc4"/><path d="M-16 8c6-4 10 2 14 8h-9a5 5 0 0 1-5-5Z" fill="#e8a82a"/><path d="M-16 12c4-2 7 1 9 4h-4a5 5 0 0 1-5-4Z" fill="#d8482a"/><path d="M-14 3l5-10 4 8 6-11 4 7 8-10" fill="none" stroke="#fff" stroke-width="1.8"/><ellipse cx="7" cy="8" rx="8" ry="5" fill="none" stroke="#fff" stroke-width="1.2"/><text x="7" y="10.500" font-size="6.500" font-weight="bold" fill="#fff" text-anchor="middle" font-family="Liberation Sans">intel</text></g><g transform="translate(1769 1054)"><rect x="-17" y="-17" width="34" height="34" fill="#b58a90"/><path d="M-16 -7.903717016735131V-1" stroke="#6a5fd8" stroke-width="1"/><path d="M-16 -1V2.6326876758878557" stroke="#e0483c" stroke-width="1"/><path d="M-15 -8.959641332384635V-1" stroke="#6a5fd8" stroke-width="1"/><path d="M-15 -1V2.8117601157885836" stroke="#e0483c" stroke-width="1"/><path d="M-14 -11.005762432864433V-1" stroke="#6a5fd8" stroke-width="1"/><path d="M-14 -1V1.1965865777194393" stroke="#e0483c" stroke-width="1"/><path d="M-13 -6.105343932438993V-1" stroke="#6a5fd8" stroke-width="1"/><path d="M-13 -1V3.5124072462893796" stroke="#e0483c" stroke-width="1"/><path d="M-12 -8.074832114624062V-1" stroke="#6a5fd8" stroke-width="1"/><path d="M-12 -1V1.7029928831400891" stroke="#e0483c" stroke-width="1"/><path d="M-11 -13.965158684083702V-1" stroke="#6a5fd8" stroke-width="1"/><path d="M-11 -1V2.4107905225673436" stroke="#e0483c" stroke-width="1"/><path d="M-10 -12.691691610195111V-1" stroke="#6a5fd8" stroke-width="1"/><path d="M-10 -1V2.429059626098005" stroke="#e0483c" stroke-width="1"/><path d="M-9 -11.112545124353296V-1" stroke="#6a5fd8" stroke-width="1"/><path d="M-9 -1V1.4518492720705716" stroke="#e0483c" stroke-width="1"/><path d="M-8 -11.078885266281507V-1" stroke="#6a5fd8" stroke-width="1"/><path d="M-8 -1V3.60413592142989" stroke="#e0483c" stroke-width="1"/><path d="M-7 -10.18544968306641V-1" stroke="#6a5fd8" stroke-width="1"/><path d="M-7 -1V3.2237555686044708" stroke="#e0483c" stroke-width="1"/><path d="M-6 -11.37129180295674V-1" stroke="#6a5fd8" stroke-width="1"/><path d="M-6 -1V1.192094314680992" stroke="#e0483c" stroke-width="1"/><path d="M-5 -12.065841970294539V-1" stroke="#6a5fd8" stroke-width="1"/><path d="M-5 -1V2.7732987487939527" stroke="#e0483c" stroke-width="1"/><path d="M-4 -8.4101412761257V-1" stroke="#6a5fd8" stroke-width="1"/><path d="M-4 -1V1.09303525440925" stroke="#e0483c" stroke-width="1"/><path d="M-3 -12.924217895831564V-1" stroke="#6a5fd8" stroke-width="1"/><path d="M-3 -1V2.4182472659964005" stroke="#e0483c" stroke-width="1"/><path d="M-2 -11.750591392526424V-1" stroke="#6a5fd8" stroke-width="1"/><path d="M-2 -1V3.636438400766445" stroke="#e0483c" stroke-width="1"/><path d="M-1 -11.71303586888962V-1" stroke="#6a5fd8" stroke-width="1"/><path d="M-1 -1V3.7632960027516233" stroke="#e0483c" stroke-width="1"/><path d="M0 -9.159707232005951V-1" stroke="#6a5fd8" stroke-width="1"/><path d="M0 -1V3.402726312955685" stroke="#e0483c" stroke-width="1"/><path d="M1 -9.556968448406085V-1" stroke="#6a5fd8" stroke-width="1"/><path d="M1 -1V3.8067601651135634" stroke="#e0483c" stroke-width="1"/><path d="M2 -13.030933282704332V-1" stroke="#6a5fd8" stroke-width="1"/><path d="M2 -1V1.2923629291926315" stroke="#e0483c" stroke-width="1"/><path d="M3 -7.087750881605351V-1" stroke="#6a5fd8" stroke-width="1"/><path d="M3 -1V1.6509608236994122" stroke="#e0483c" stroke-width="1"/><path d="M4 -13.723841111185624V-1" stroke="#6a5fd8" stroke-width="1"/><path d="M4 -1V2.308485599882288" stroke="#e0483c" stroke-width="1"/><path d="M5 -11.01318632693443V-1" stroke="#6a5fd8" stroke-width="1"/><path d="M5 -1V1.903078595276516" stroke="#e0483c" stroke-width="1"/><path d="M6 -10.057943870632476V-1" stroke="#6a5fd8" stroke-width="1"/><path d="M6 -1V2.1575987765347078" stroke="#e0483c" stroke-width="1"/><path d="M7 -8.807283910161441V-1" stroke="#6a5fd8" stroke-width="1"/><path d="M7 -1V2.7552223222160905" stroke="#e0483c" stroke-width="1"/><path d="M8 -10.674014343761591V-1" stroke="#6a5fd8" stroke-width="1"/><path d="M8 -1V3.7126053125433254" stroke="#e0483c" stroke-width="1"/><path d="M9 -11.455857093079732V-1" stroke="#6a5fd8" stroke-width="1"/><path d="M9 -1V3.7868368036000515" stroke="#e0483c" stroke-width="1"/><path d="M10 -12.851204531174044V-1" stroke="#6a5fd8" stroke-width="1"/><path d="M10 -1V3.9729689346064454" stroke="#e0483c" stroke-width="1"/><path d="M11 -11.370188337300146V-1" stroke="#6a5fd8" stroke-width="1"/><path d="M11 -1V1.4892988659132094" stroke="#e0483c" stroke-width="1"/><path d="M12 -12.885100264930145V-1" stroke="#6a5fd8" stroke-width="1"/><path d="M12 -1V3.893898841927184" stroke="#e0483c" stroke-width="1"/><path d="M13 -13.237567876097893V-1" stroke="#6a5fd8" stroke-width="1"/><path d="M13 -1V2.7073225104229706" stroke="#e0483c" stroke-width="1"/><path d="M14 -11.710536161393595V-1" stroke="#6a5fd8" stroke-width="1"/><path d="M14 -1V1.633374951026795" stroke="#e0483c" stroke-width="1"/><path d="M15 -12.652863442186835V-1" stroke="#6a5fd8" stroke-width="1"/><path d="M15 -1V2.7205970570538542" stroke="#e0483c" stroke-width="1"/><path d="M16 -8.279659695889642V-1" stroke="#6a5fd8" stroke-width="1"/><path d="M16 -1V1.190381731435688" stroke="#e0483c" stroke-width="1"/></g><g transform="translate(1808 1054)"><rect x="-16" y="-16" width="32" height="32" rx="2" fill="#8f969c"/><rect x="-16" y="-16" width="32" height="16" rx="2" fill="#a8aeb4"/><circle r="12.500" fill="#4a4d52"/><circle r="12.500" fill="none" stroke="#2e3034" stroke-width="2.500" stroke-dasharray="2.2 1.700"/><circle r="8.500" fill="#9ea2a8"/><path d="M0 0L0 -8.500M0 0L7.400 4.200M0 0L-7.400 4.200" stroke="#3a3c40" stroke-width="2.600"/><circle r="2.400" fill="#3a3c40"/></g><path d="M1837.500 1040V1074" stroke="#8a6568" stroke-width="1"/><g transform="translate(1866 1054)"><path d="M-12 -12h24l-3 26a3 3 0 0 1-3 2h-12a3 3 0 0 1-3-2Z" fill="#dfe3e6" opacity=".92"/><path d="M-6 -10l1.500 24M0 -10v24M6 -10l-1.500 24" stroke="#c0c6ca" stroke-width="1.400"/><ellipse cy="-12" rx="12" ry="3.500" fill="#eef0f2"/><path d="M-9 -13l4-3 5 2 4-3 5 3" fill="none" stroke="#7a8a7a" stroke-width="2"/><path d="M-6 -14l3-1M2 -15l3 1" stroke="#c04040" stroke-width="1.500"/></g><circle cx="54" cy="1076" r="1.700" fill="#1a0d0d"/><circle cx="94" cy="1076" r="1.700" fill="#1a0d0d"/><circle cx="134" cy="1076" r="1.700" fill="#1a0d0d"/><circle cx="213" cy="1076" r="1.700" fill="#1a0d0d"/><circle cx="373" cy="1076" r="1.700" fill="#1a0d0d"/><circle cx="771" cy="1076" r="1.700" fill="#1a0d0d"/><circle cx="1728" cy="1076" r="1.700" fill="#1a0d0d"/><circle cx="1769" cy="1076" r="1.700" fill="#1a0d0d"/></svg>
</body></html>
